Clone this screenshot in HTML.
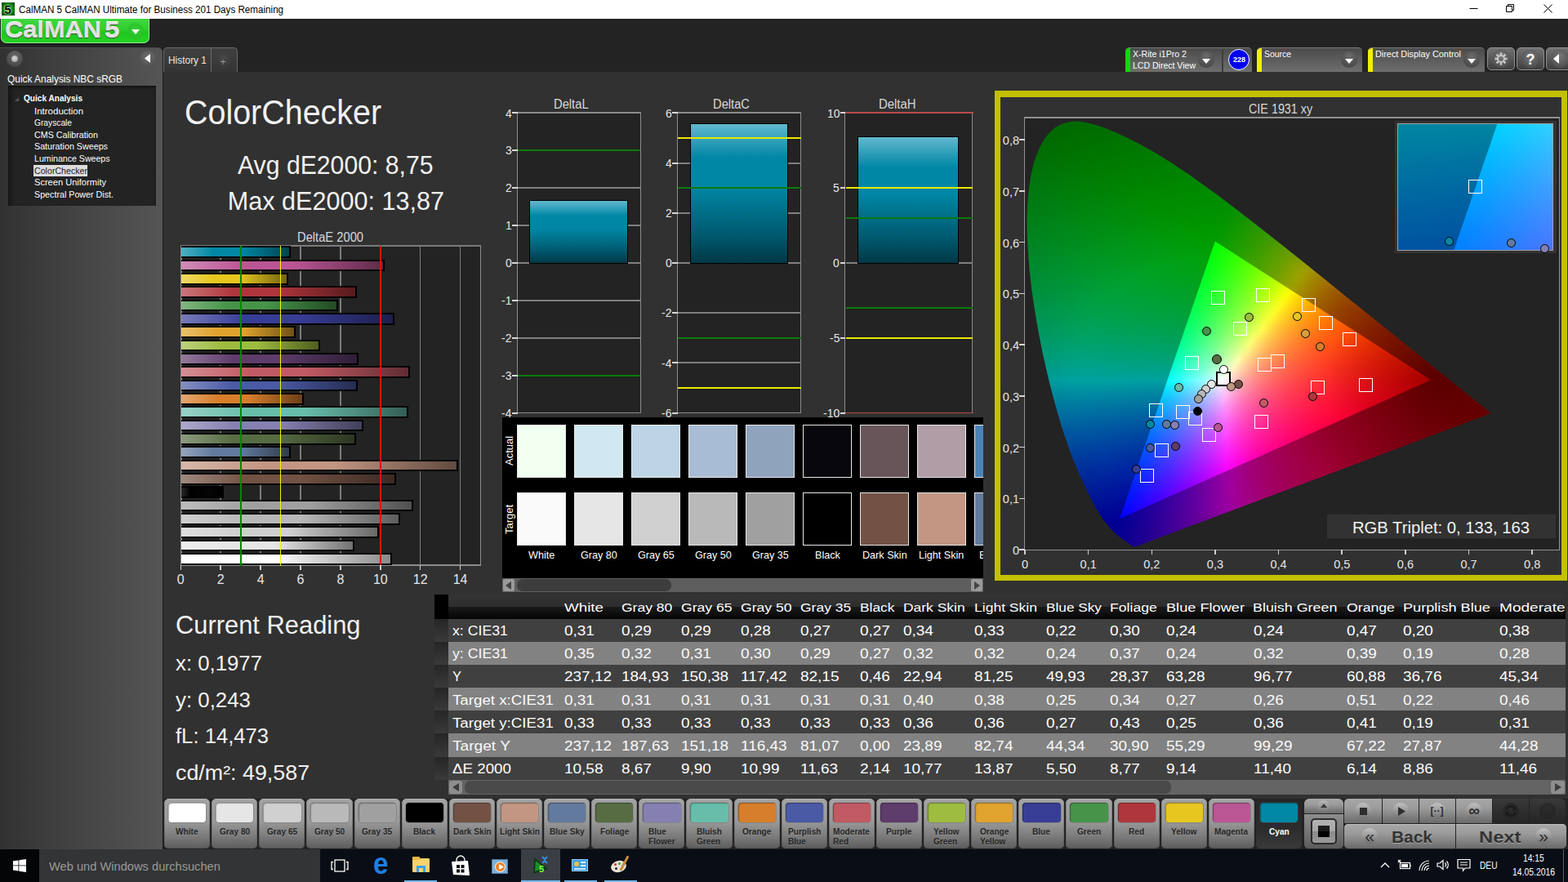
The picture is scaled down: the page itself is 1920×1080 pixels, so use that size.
<!DOCTYPE html>
<html lang="de"><head><meta charset="utf-8"><title>CalMAN 5 ColorChecker</title>
<style>
html,body{margin:0;padding:0}
body{width:1920px;height:1080px;overflow:hidden;position:relative;background:#232323;font-family:"Liberation Sans",sans-serif;color:#fff}
div,span.t,svg{position:absolute;box-sizing:border-box}
span.t{white-space:nowrap;transform-origin:0 50%;display:block}
.cg i{display:block;width:100%}
</style></head><body>

<div style="left:0px;top:0px;width:1920px;height:23px;background:#fff"></div>
<div style="left:2px;top:3px;width:16px;height:16px;background:radial-gradient(circle,#1fd01f 0%,#0a7a0a 60%,#033a03 100%)"></div>
<span class="t" style="left:5.3px;top:3.68px;font-size:15.5px;line-height:15.5px;color:#000;font-weight:bold;text-shadow:0 0 1px #fff,0 0 1px #fff,0 0 2px #dfd;">5</span>
<span class="t" style="left:23px;top:5.84px;font-size:12px;line-height:12px;color:#000;transform:scaleX(0.970);">CalMAN 5 CalMAN Ultimate for Business 201 Days Remaining</span>
<svg style="left:1780px;top:0" width="140" height="23" viewBox="0 0 140 23" fill="none" stroke="#000" stroke-width="1"><path d="M19.5 10.5h10"/><path d="M64.5 7.5h7v7h-7z M66.5 7.5v-2h7v7h-2"/><path d="M110.5 5.5l10 10 M120.5 5.5l-10 10"/></svg>
<div style="left:0px;top:23px;width:1920px;height:35px;background:#232323"></div>
<div style="left:1px;top:23px;width:182px;height:29.6px;background:linear-gradient(#40d840 0%,#2fce2f 45%,#1fc61f 58%,#24d424 100%);border-radius:0 0 7px 7px;border:1px solid #9be89b;border-top:none;box-shadow:0 1px 1px #0a0a0a"></div>
<span class="t" style="left:6.3px;top:23.74px;font-size:27px;line-height:27px;color:#e2e2e2;font-weight:bold;transform:scaleX(1.140);text-shadow:0 1px 1px #4a4a4a,0 -1px 0 #fff;">CalMAN</span>
<span class="t" style="left:128px;top:23.74px;font-size:27px;line-height:27px;color:#e2e2e2;font-weight:bold;transform:scaleX(1.232);text-shadow:0 1px 1px #4a4a4a,0 -1px 0 #fff;">5</span>
<div style="left:156px;top:27.5px;width:20px;height:20px;border-radius:50%;background:radial-gradient(circle at 50% 40%,#35d035,#22b822)"></div>
<svg style="left:161px;top:35.500px" width="10" height="6"><path d="M0 0h10l-5 6z" fill="#fff"/></svg>
<div style="left:0px;top:58px;width:199px;height:982px;background:linear-gradient(90deg,#313131 0%,#3e3e3e 30%,#484848 60%,#555 100%);border-radius:0 6px 0 0;border-top:1px solid #4a4a4a"></div>
<div style="left:199px;top:58px;width:1px;height:982px;background:#1c1c1c"></div>
<div style="left:8px;top:62px;width:20px;height:20px;border-radius:50%;background:radial-gradient(circle at 50% 35%,#6a6a6a,#3c3c3c)"></div>
<div style="left:14px;top:68px;width:8px;height:8px;border-radius:50%;background:radial-gradient(circle at 45% 40%,#ddd,#888)"></div>
<div style="left:171px;top:62px;width:20px;height:20px;border-radius:50%;background:radial-gradient(circle at 50% 35%,#6e6e6e,#484848)"></div>
<svg style="left:177px;top:66px" width="7" height="11"><path d="M7 0v11l-7-5.5z" fill="#fff"/></svg>
<span class="t" style="left:9px;top:90px;font-size:13px;line-height:13px;color:#fff;transform:scaleX(0.916);">Quick Analysis NBC sRGB</span>
<div style="left:10px;top:105px;width:181px;height:147px;background:linear-gradient(90deg,#171717 0,#232323 8px,#232323 100%);box-shadow:inset 0 2px 3px #111"></div>
<svg style="left:18px;top:119px" width="5" height="5"><path d="M5 0v5h-5z" fill="#555"/></svg>
<span class="t" style="left:29px;top:115.27px;font-size:11.5px;line-height:11.5px;color:#fff;font-weight:bold;transform:scaleX(0.878);">Quick Analysis</span>
<span class="t" style="left:42px;top:131.27px;font-size:11.5px;line-height:11.5px;color:#fff;">Introduction</span>
<span class="t" style="left:42px;top:145.27px;font-size:11.5px;line-height:11.5px;color:#fff;transform:scaleX(0.889);">Grayscale</span>
<span class="t" style="left:42px;top:160.27px;font-size:11.5px;line-height:11.5px;color:#fff;transform:scaleX(0.932);">CMS Calibration</span>
<span class="t" style="left:42px;top:174.27px;font-size:11.5px;line-height:11.5px;color:#fff;transform:scaleX(0.932);">Saturation Sweeps</span>
<span class="t" style="left:42px;top:189.27px;font-size:11.5px;line-height:11.5px;color:#fff;transform:scaleX(0.922);">Luminance Sweeps</span>
<div style="left:41px;top:201.5px;width:66px;height:14.3px;background:#dcdcdc"></div>
<span class="t" style="left:42px;top:204.27px;font-size:11.5px;line-height:11.5px;color:#222;transform:scaleX(0.925);">ColorChecker</span>
<span class="t" style="left:42px;top:218.27px;font-size:11.5px;line-height:11.5px;color:#fff;transform:scaleX(0.963);">Screen Uniformity</span>
<span class="t" style="left:42px;top:233.27px;font-size:11.5px;line-height:11.5px;color:#fff;transform:scaleX(0.931);">Spectral Power Dist.</span>
<div style="left:200px;top:58px;width:59px;height:30px;background:linear-gradient(#404040,#353535);border:1px solid #6a6a6a;border-bottom:none;border-radius:5px 0 0 0"></div>
<div style="left:258px;top:58px;width:33px;height:30px;background:linear-gradient(#404040,#353535);border:1px solid #6a6a6a;border-bottom:none;border-radius:0 5px 0 0"></div>
<span class="t" style="left:206px;top:68.22px;font-size:12.5px;line-height:12.5px;color:#e8e8e8;transform:scaleX(0.953);">History 1</span>
<div style="left:264px;top:63px;width:20px;height:20px;border-radius:50%;background:radial-gradient(circle at 50% 40%,#484848,#333)"></div>
<span class="t" style="left:269.5px;top:69.84px;font-size:12px;line-height:12px;color:#999;">+</span>
<div style="left:200px;top:88px;width:1720px;height:890px;background:#313131"></div>
<div style="left:1378px;top:58px;width:155px;height:30px;background:linear-gradient(#4b4b4b,#6e6e6e);border-radius:5px 5px 0 0;border-top:1px solid #777;overflow:hidden"><div style="left:0;top:-1px;width:6px;height:31px;background:#0fd80f"></div></div>
<span class="t" style="left:1387px;top:60.87px;font-size:11.5px;line-height:11.5px;color:#fff;transform:scaleX(0.922);">X-Rite i1Pro 2</span>
<span class="t" style="left:1387px;top:75.07px;font-size:11.5px;line-height:11.5px;color:#fff;transform:scaleX(0.915);">LCD Direct View</span>
<div style="left:1467px;top:63px;width:20px;height:20px;border-radius:50%;background:radial-gradient(circle at 50% 30%,#6c6c6c,#3e3e3e)"></div>
<svg style="left:1472px;top:72px" width="10" height="6"><path d="M0 0h10l-5 6z" fill="#fff"/></svg>
<div style="left:1496px;top:61px;width:2px;height:27px;background:#3e3e3e"></div>
<div style="left:1504px;top:60px;width:26px;height:26px;border-radius:50%;background:#0000f0;border:1px solid #fff"></div>
<span class="t" style="left:1509.8px;top:68.46px;font-size:9.5px;line-height:9.5px;color:#fff;font-weight:bold;transform:scaleX(0.946);">228</span>
<div style="left:1539px;top:58px;width:129px;height:30px;background:linear-gradient(#4b4b4b,#6e6e6e);border-radius:5px 5px 0 0;border-top:1px solid #777;overflow:hidden"><div style="left:0;top:-1px;width:6px;height:31px;background:#f0f000"></div></div>
<span class="t" style="left:1548px;top:60.87px;font-size:11.5px;line-height:11.5px;color:#fff;transform:scaleX(0.906);">Source</span>
<div style="left:1642px;top:63px;width:20px;height:20px;border-radius:50%;background:radial-gradient(circle at 50% 30%,#6c6c6c,#3e3e3e)"></div>
<svg style="left:1647px;top:72px" width="10" height="6"><path d="M0 0h10l-5 6z" fill="#fff"/></svg>
<div style="left:1675px;top:58px;width:143px;height:30px;background:linear-gradient(#4b4b4b,#6e6e6e);border-radius:5px 5px 0 0;border-top:1px solid #777;overflow:hidden"><div style="left:0;top:-1px;width:6px;height:31px;background:#f0f000"></div></div>
<span class="t" style="left:1684px;top:60.87px;font-size:11.5px;line-height:11.5px;color:#fff;transform:scaleX(0.944);">Direct Display Control</span>
<div style="left:1792px;top:63px;width:20px;height:20px;border-radius:50%;background:radial-gradient(circle at 50% 30%,#6c6c6c,#3e3e3e)"></div>
<svg style="left:1797px;top:72px" width="10" height="6"><path d="M0 0h10l-5 6z" fill="#fff"/></svg>
<div style="left:1821px;top:58px;width:34px;height:28px;background:linear-gradient(#727272,#3e3e3e);border:1px solid #909090;border-radius:5px"></div>
<div style="left:1827px;top:61px;width:22px;height:22px;border-radius:50%;background:radial-gradient(circle at 50% 35%,#777,#444)"></div>
<div style="left:1857px;top:58px;width:34px;height:28px;background:linear-gradient(#727272,#3e3e3e);border:1px solid #909090;border-radius:5px"></div>
<div style="left:1863px;top:61px;width:22px;height:22px;border-radius:50%;background:radial-gradient(circle at 50% 35%,#777,#444)"></div>
<div style="left:1893px;top:58px;width:34px;height:28px;background:linear-gradient(#727272,#3e3e3e);border:1px solid #909090;border-radius:5px"></div>
<div style="left:1899px;top:61px;width:22px;height:22px;border-radius:50%;background:radial-gradient(circle at 50% 35%,#777,#444)"></div>
<svg style="left:1829px;top:63px" width="18" height="18" viewBox="-9 -9 18 18"><g fill="none" stroke="#c8c8c8"><circle r="4" stroke-width="2"/><path d="M0 -5v-2.6" stroke-width="2.6" transform="rotate(0)"/><path d="M0 -5v-2.6" stroke-width="2.6" transform="rotate(45)"/><path d="M0 -5v-2.6" stroke-width="2.6" transform="rotate(90)"/><path d="M0 -5v-2.6" stroke-width="2.6" transform="rotate(135)"/><path d="M0 -5v-2.6" stroke-width="2.6" transform="rotate(180)"/><path d="M0 -5v-2.6" stroke-width="2.6" transform="rotate(225)"/><path d="M0 -5v-2.6" stroke-width="2.6" transform="rotate(270)"/><path d="M0 -5v-2.6" stroke-width="2.6" transform="rotate(315)"/></g></svg>
<span class="t" style="left:1868.5px;top:63.76px;font-size:18px;line-height:18px;color:#fff;font-weight:bold;">?</span>
<svg style="left:1902px;top:66px" width="7" height="12"><path d="M7 0v12l-7-6z" fill="#fff"/></svg>
<span class="t" style="left:226.3px;top:116.55px;font-size:42px;line-height:42px;color:#f2f2f2;transform:scaleX(0.939);">ColorChecker</span>
<span class="t" style="left:290.8px;top:186.6px;font-size:30.6px;line-height:30.6px;color:#f2f2f2;transform:scaleX(0.987);">Avg dE2000: 8,75</span>
<span class="t" style="left:278.8px;top:230.8px;font-size:30.6px;line-height:30.6px;color:#f2f2f2;">Max dE2000: 13,87</span>
<span class="t" style="left:364.2px;top:283.06px;font-size:16px;line-height:16px;color:#d8d8d8;transform:scaleX(0.920);">DeltaE 2000</span>
<div style="left:221px;top:300px;width:368px;height:393px;background:#232323;border:2px solid #8c8c8c;border-right-width:1px;border-top-color:#7a7a7a"></div>
<div style="left:269.4px;top:302px;width:1.6px;height:390px;background:#7c7c7c"></div>
<div style="left:318.3px;top:302px;width:1.6px;height:390px;background:#7c7c7c"></div>
<div style="left:367.2px;top:302px;width:1.6px;height:390px;background:#7c7c7c"></div>
<div style="left:416.1px;top:302px;width:1.6px;height:390px;background:#7c7c7c"></div>
<div style="left:465px;top:302px;width:1.6px;height:390px;background:#7c7c7c"></div>
<div style="left:513.9px;top:302px;width:1.6px;height:390px;background:#7c7c7c"></div>
<div style="left:562.8px;top:302px;width:1.6px;height:390px;background:#7c7c7c"></div>
<div style="left:222px;top:301px;width:133.59px;height:14.8px;background:linear-gradient(90deg,#52aec1 0%,#0088a4 30%,#0088a4 55%,#004452 100%);border:2px solid #000;border-left:none"></div>
<div style="left:222px;top:317.5px;width:248.5px;height:14.8px;background:linear-gradient(90deg,#d18cb7 0%,#bb5695 30%,#bb5695 55%,#5e2b4a 100%);border:2px solid #000;border-left:none"></div>
<div style="left:222px;top:334px;width:130.65px;height:14.8px;background:linear-gradient(90deg,#efd967 0%,#e7c71f 30%,#e7c71f 55%,#746410 100%);border:2px solid #000;border-left:none"></div>
<div style="left:222px;top:350px;width:215.25px;height:14.8px;background:linear-gradient(90deg,#c9767a 0%,#af363c 30%,#af363c 55%,#581b1e 100%);border:2px solid #000;border-left:none"></div>
<div style="left:222px;top:366.5px;width:192.27px;height:14.8px;background:linear-gradient(90deg,#81b683 0%,#469449 30%,#469449 55%,#234a24 100%);border:2px solid #000;border-left:none"></div>
<div style="left:222px;top:383px;width:261.21px;height:14.8px;background:linear-gradient(90deg,#787bb8 0%,#383d96 30%,#383d96 55%,#1c1e4b 100%);border:2px solid #000;border-left:none"></div>
<div style="left:222px;top:399px;width:140.43px;height:14.8px;background:linear-gradient(90deg,#eac071 0%,#e0a32e 30%,#e0a32e 55%,#705217 100%);border:2px solid #000;border-left:none"></div>
<div style="left:222px;top:415.5px;width:170.26px;height:14.8px;background:linear-gradient(90deg,#bcd17d 0%,#9dbc40 30%,#9dbc40 55%,#4e5e20 100%);border:2px solid #000;border-left:none"></div>
<div style="left:222px;top:432px;width:216.72px;height:14.8px;background:linear-gradient(90deg,#927a9b 0%,#5e3c6c 30%,#5e3c6c 55%,#2f1e36 100%);border:2px solid #000;border-left:none"></div>
<div style="left:222px;top:448px;width:279.8px;height:14.8px;background:linear-gradient(90deg,#d58f95 0%,#c15a63 30%,#c15a63 55%,#602d32 100%);border:2px solid #000;border-left:none"></div>
<div style="left:222px;top:464.5px;width:216.23px;height:14.8px;background:linear-gradient(90deg,#848fc2 0%,#4a5aa5 30%,#4a5aa5 55%,#252d52 100%);border:2px solid #000;border-left:none"></div>
<div style="left:222px;top:481px;width:149.72px;height:14.8px;background:linear-gradient(90deg,#e3a770 0%,#d67e2c 30%,#d67e2c 55%,#6b3f16 100%);border:2px solid #000;border-left:none"></div>
<div style="left:222px;top:497px;width:278.33px;height:14.8px;background:linear-gradient(90deg,#98d2c5 0%,#67bdaa 30%,#67bdaa 55%,#345e55 100%);border:2px solid #000;border-left:none"></div>
<div style="left:222px;top:513.5px;width:223.07px;height:14.8px;background:linear-gradient(90deg,#aca9ca 0%,#8580b1 30%,#8580b1 55%,#424058 100%);border:2px solid #000;border-left:none"></div>
<div style="left:222px;top:530px;width:214.03px;height:14.8px;background:linear-gradient(90deg,#8d9b7f 0%,#576c43 30%,#576c43 55%,#2c3622 100%);border:2px solid #000;border-left:none"></div>
<div style="left:222px;top:546px;width:134.07px;height:14.8px;background:linear-gradient(90deg,#94a5bc 0%,#627a9d 30%,#627a9d 55%,#313d4e 100%);border:2px solid #000;border-left:none"></div>
<div style="left:222px;top:562.5px;width:338.72px;height:14.8px;background:linear-gradient(90deg,#d6b8aa 0%,#c29682 30%,#c29682 55%,#614b41 100%);border:2px solid #000;border-left:none"></div>
<div style="left:222px;top:579px;width:262.93px;height:14.8px;background:linear-gradient(90deg,#a08980 0%,#735244 30%,#735244 55%,#3a2922 100%);border:2px solid #000;border-left:none"></div>
<div style="left:222px;top:595px;width:51.92px;height:14.8px;background:linear-gradient(90deg,#2a2a2a 0%,#000 22%,#050505 70%,#000 100%);border:2px solid #000;border-left:none"></div>
<div style="left:222px;top:611.5px;width:283.95px;height:14.8px;background:linear-gradient(90deg,#bebebe 0%,#a0a0a0 30%,#a0a0a0 55%,#505050 100%);border:2px solid #000;border-left:none"></div>
<div style="left:222px;top:628px;width:268.31px;height:14.8px;background:linear-gradient(90deg,#cfcfcf 0%,#b8b8b8 30%,#b8b8b8 55%,#5c5c5c 100%);border:2px solid #000;border-left:none"></div>
<div style="left:222px;top:644px;width:241.66px;height:14.8px;background:linear-gradient(90deg,#dfdfdf 0%,#d0d0d0 30%,#d0d0d0 55%,#686868 100%);border:2px solid #000;border-left:none"></div>
<div style="left:222px;top:660.5px;width:211.58px;height:14.8px;background:linear-gradient(90deg,#eeeeee 0%,#e6e6e6 30%,#e6e6e6 55%,#737373 100%);border:2px solid #000;border-left:none"></div>
<div style="left:222px;top:677px;width:258.28px;height:14.8px;background:linear-gradient(90deg,#fff 0%,#fff 45%,#8a8a8a 100%);border:2px solid #000;border-left:none"></div>
<div style="left:293.7px;top:301px;width:1.9px;height:392px;background:#008a00"></div>
<div style="left:342.6px;top:301px;width:1.9px;height:392px;background:#f4f400"></div>
<div style="left:464.7px;top:301px;width:1.9px;height:392px;background:#e01010"></div>
<div style="left:220.5px;top:692px;width:1.6px;height:6px;background:#cfcfcf"></div>
<span class="t" style="left:216.85px;top:701.76px;font-size:16px;line-height:16px;color:#e6e6e6;">0</span>
<div style="left:269.4px;top:692px;width:1.6px;height:6px;background:#cfcfcf"></div>
<span class="t" style="left:265.75px;top:701.76px;font-size:16px;line-height:16px;color:#e6e6e6;">2</span>
<div style="left:318.3px;top:692px;width:1.6px;height:6px;background:#cfcfcf"></div>
<span class="t" style="left:314.65px;top:701.76px;font-size:16px;line-height:16px;color:#e6e6e6;">4</span>
<div style="left:367.2px;top:692px;width:1.6px;height:6px;background:#cfcfcf"></div>
<span class="t" style="left:363.55px;top:701.76px;font-size:16px;line-height:16px;color:#e6e6e6;">6</span>
<div style="left:416.1px;top:692px;width:1.6px;height:6px;background:#cfcfcf"></div>
<span class="t" style="left:412.45px;top:701.76px;font-size:16px;line-height:16px;color:#e6e6e6;">8</span>
<div style="left:465px;top:692px;width:1.6px;height:6px;background:#cfcfcf"></div>
<span class="t" style="left:456.9px;top:701.76px;font-size:16px;line-height:16px;color:#e6e6e6;">10</span>
<div style="left:513.9px;top:692px;width:1.6px;height:6px;background:#cfcfcf"></div>
<span class="t" style="left:505.8px;top:701.76px;font-size:16px;line-height:16px;color:#e6e6e6;">12</span>
<div style="left:562.8px;top:692px;width:1.6px;height:6px;background:#cfcfcf"></div>
<span class="t" style="left:554.7px;top:701.76px;font-size:16px;line-height:16px;color:#e6e6e6;">14</span>
<span class="t" style="left:214.8px;top:750.1px;font-size:30.6px;line-height:30.6px;color:#f2f2f2;transform:scaleX(1.009);">Current Reading</span>
<span class="t" style="left:214.8px;top:799.49px;font-size:26px;line-height:26px;color:#f2f2f2;transform:scaleX(0.991);">x: 0,1977</span>
<span class="t" style="left:214.8px;top:843.99px;font-size:26px;line-height:26px;color:#f2f2f2;transform:scaleX(0.994);">y: 0,243</span>
<span class="t" style="left:214.8px;top:888.49px;font-size:26px;line-height:26px;color:#f2f2f2;transform:scaleX(0.986);">fL: 14,473</span>
<span class="t" style="left:214.8px;top:932.99px;font-size:26px;line-height:26px;color:#f2f2f2;transform:scaleX(1.032);">cd/m²: 49,587</span>
<span class="t" style="left:677.9px;top:119.99px;font-size:15.6px;line-height:15.6px;color:#d8d8d8;transform:scaleX(0.945);">DeltaL</span>
<div style="left:632.8px;top:137.2px;width:152px;height:369px;background:#232323;border:1.5px solid #8c8c8c;border-top-width:2px"></div>
<div style="left:627px;top:137px;width:6.5px;height:1.6px;background:#d8d8d8"></div>
<span class="t" style="left:618.94px;top:130.5px;font-size:15px;line-height:15px;color:#e6e6e6;transform:scaleX(0.930);">4</span>
<div style="left:634px;top:183px;width:150px;height:1.5px;background:#808080"></div>
<div style="left:627px;top:183px;width:6.5px;height:1.6px;background:#d8d8d8"></div>
<span class="t" style="left:618.94px;top:176.4px;font-size:15px;line-height:15px;color:#e6e6e6;transform:scaleX(0.930);">3</span>
<div style="left:634px;top:229px;width:150px;height:1.5px;background:#808080"></div>
<div style="left:627px;top:229px;width:6.5px;height:1.6px;background:#d8d8d8"></div>
<span class="t" style="left:618.94px;top:222.3px;font-size:15px;line-height:15px;color:#e6e6e6;transform:scaleX(0.930);">2</span>
<div style="left:634px;top:275px;width:150px;height:1.5px;background:#808080"></div>
<div style="left:627px;top:275px;width:6.5px;height:1.6px;background:#d8d8d8"></div>
<span class="t" style="left:618.94px;top:268.2px;font-size:15px;line-height:15px;color:#e6e6e6;transform:scaleX(0.930);">1</span>
<div style="left:634px;top:321px;width:150px;height:1.5px;background:#808080"></div>
<div style="left:627px;top:321px;width:6.5px;height:1.6px;background:#d8d8d8"></div>
<span class="t" style="left:618.94px;top:314.1px;font-size:15px;line-height:15px;color:#e6e6e6;transform:scaleX(0.930);">0</span>
<div style="left:634px;top:367px;width:150px;height:1.5px;background:#808080"></div>
<div style="left:627px;top:367px;width:6.5px;height:1.6px;background:#d8d8d8"></div>
<span class="t" style="left:614.3px;top:360px;font-size:15px;line-height:15px;color:#e6e6e6;transform:scaleX(0.930);">-1</span>
<div style="left:634px;top:413px;width:150px;height:1.5px;background:#808080"></div>
<div style="left:627px;top:413px;width:6.5px;height:1.6px;background:#d8d8d8"></div>
<span class="t" style="left:614.3px;top:405.9px;font-size:15px;line-height:15px;color:#e6e6e6;transform:scaleX(0.930);">-2</span>
<div style="left:634px;top:459px;width:150px;height:1.5px;background:#808080"></div>
<div style="left:627px;top:459px;width:6.5px;height:1.6px;background:#d8d8d8"></div>
<span class="t" style="left:614.3px;top:451.8px;font-size:15px;line-height:15px;color:#e6e6e6;transform:scaleX(0.930);">-3</span>
<div style="left:627px;top:505px;width:6.5px;height:1.6px;background:#d8d8d8"></div>
<span class="t" style="left:614.3px;top:497.7px;font-size:15px;line-height:15px;color:#e6e6e6;transform:scaleX(0.930);">-4</span>
<div style="left:634px;top:183px;width:150px;height:1.8px;background:#0b7a0b"></div>
<div style="left:634px;top:459px;width:150px;height:1.8px;background:#0b7a0b"></div>
<div style="left:648px;top:244.69px;width:120.5px;height:78.11px;background:linear-gradient(#62b8cf 0%,#0087a5 24%,#0087a5 45%,#00596e 80%,#003846 100%);border:1px solid #000"></div>
<span class="t" style="left:873px;top:119.99px;font-size:15.6px;line-height:15.6px;color:#d8d8d8;transform:scaleX(0.944);">DeltaC</span>
<div style="left:828.8px;top:137.2px;width:152.5px;height:369px;background:#232323;border:1.5px solid #8c8c8c;border-top-width:2px"></div>
<div style="left:823px;top:137px;width:6.5px;height:1.6px;background:#d8d8d8"></div>
<span class="t" style="left:814.94px;top:130.5px;font-size:15px;line-height:15px;color:#e6e6e6;transform:scaleX(0.930);">6</span>
<div style="left:830px;top:199px;width:150.5px;height:1.5px;background:#808080"></div>
<div style="left:823px;top:199px;width:6.5px;height:1.6px;background:#d8d8d8"></div>
<span class="t" style="left:814.94px;top:191.7px;font-size:15px;line-height:15px;color:#e6e6e6;transform:scaleX(0.930);">4</span>
<div style="left:830px;top:260px;width:150.5px;height:1.5px;background:#808080"></div>
<div style="left:823px;top:260px;width:6.5px;height:1.6px;background:#d8d8d8"></div>
<span class="t" style="left:814.94px;top:252.9px;font-size:15px;line-height:15px;color:#e6e6e6;transform:scaleX(0.930);">2</span>
<div style="left:830px;top:321px;width:150.5px;height:1.5px;background:#808080"></div>
<div style="left:823px;top:321px;width:6.5px;height:1.6px;background:#d8d8d8"></div>
<span class="t" style="left:814.94px;top:314.1px;font-size:15px;line-height:15px;color:#e6e6e6;transform:scaleX(0.930);">0</span>
<div style="left:830px;top:382px;width:150.5px;height:1.5px;background:#808080"></div>
<div style="left:823px;top:382px;width:6.5px;height:1.6px;background:#d8d8d8"></div>
<span class="t" style="left:810.3px;top:375.3px;font-size:15px;line-height:15px;color:#e6e6e6;transform:scaleX(0.930);">-2</span>
<div style="left:830px;top:443px;width:150.5px;height:1.5px;background:#808080"></div>
<div style="left:823px;top:443px;width:6.5px;height:1.6px;background:#d8d8d8"></div>
<span class="t" style="left:810.3px;top:436.5px;font-size:15px;line-height:15px;color:#e6e6e6;transform:scaleX(0.930);">-4</span>
<div style="left:823px;top:505px;width:6.5px;height:1.6px;background:#d8d8d8"></div>
<span class="t" style="left:810.3px;top:497.7px;font-size:15px;line-height:15px;color:#e6e6e6;transform:scaleX(0.930);">-6</span>
<div style="left:830px;top:229px;width:150.5px;height:1.8px;background:#0b7a0b"></div>
<div style="left:830px;top:413px;width:150.5px;height:1.8px;background:#0b7a0b"></div>
<div style="left:830px;top:168px;width:150.5px;height:1.8px;background:#e8e800"></div>
<div style="left:830px;top:474px;width:150.5px;height:1.8px;background:#e8e800"></div>
<div style="left:845px;top:150.75px;width:119.5px;height:172.05px;background:linear-gradient(#62b8cf 0%,#0087a5 24%,#0087a5 45%,#00596e 80%,#003846 100%);border:1px solid #000"></div>
<div style="left:845px;top:229px;width:119.5px;height:1.8px;background:#0b7a0b"></div>
<div style="left:845px;top:168px;width:119.5px;height:1.8px;background:#e8e800"></div>
<span class="t" style="left:1075.7px;top:119.99px;font-size:15.6px;line-height:15.6px;color:#d8d8d8;transform:scaleX(0.956);">DeltaH</span>
<div style="left:1034.3px;top:137.2px;width:157px;height:369px;background:#232323;border:1.5px solid #8c8c8c;border-top-width:2px"></div>
<div style="left:1034.5px;top:137.2px;width:157px;height:1.6px;background:#b84a4a"></div>
<div style="left:1034.5px;top:504.6px;width:157px;height:1.6px;background:#b84a4a"></div>
<div style="left:1028.5px;top:137px;width:6.5px;height:1.6px;background:#d8d8d8"></div>
<span class="t" style="left:1012.68px;top:130.5px;font-size:15px;line-height:15px;color:#e6e6e6;transform:scaleX(0.930);">10</span>
<div style="left:1035.5px;top:229px;width:155px;height:1.5px;background:#808080"></div>
<div style="left:1028.5px;top:229px;width:6.5px;height:1.6px;background:#d8d8d8"></div>
<span class="t" style="left:1020.44px;top:222.3px;font-size:15px;line-height:15px;color:#e6e6e6;transform:scaleX(0.930);">5</span>
<div style="left:1035.5px;top:321px;width:155px;height:1.5px;background:#808080"></div>
<div style="left:1028.5px;top:321px;width:6.5px;height:1.6px;background:#d8d8d8"></div>
<span class="t" style="left:1020.44px;top:314.1px;font-size:15px;line-height:15px;color:#e6e6e6;transform:scaleX(0.930);">0</span>
<div style="left:1035.5px;top:413px;width:155px;height:1.5px;background:#808080"></div>
<div style="left:1028.5px;top:413px;width:6.5px;height:1.6px;background:#d8d8d8"></div>
<span class="t" style="left:1015.8px;top:405.9px;font-size:15px;line-height:15px;color:#e6e6e6;transform:scaleX(0.930);">-5</span>
<div style="left:1028.5px;top:505px;width:6.5px;height:1.6px;background:#d8d8d8"></div>
<span class="t" style="left:1008.04px;top:497.7px;font-size:15px;line-height:15px;color:#e6e6e6;transform:scaleX(0.930);">-10</span>
<div style="left:1035.5px;top:266px;width:155px;height:1.8px;background:#0b7a0b"></div>
<div style="left:1035.5px;top:376px;width:155px;height:1.8px;background:#0b7a0b"></div>
<div style="left:1035.5px;top:229px;width:155px;height:1.8px;background:#e8e800"></div>
<div style="left:1035.5px;top:413px;width:155px;height:1.8px;background:#e8e800"></div>
<div style="left:1049.5px;top:167.03px;width:124px;height:155.77px;background:linear-gradient(#62b8cf 0%,#0087a5 24%,#0087a5 45%,#00596e 80%,#003846 100%);border:1px solid #000"></div>
<div style="left:1049.5px;top:266px;width:124px;height:1.8px;background:#0b7a0b"></div>
<div style="left:1049.5px;top:229px;width:124px;height:1.8px;background:#e8e800"></div>
<div style="left:615px;top:511px;width:589px;height:197.5px;background:#000"></div>
<div style="left:633px;top:519.5px;width:60px;height:65px;background:#f0fff0;border:1px solid #e8e8e8;"></div>
<div style="left:633px;top:602.5px;width:60px;height:65px;background:#fafafa;border:1px solid #e8e8e8;"></div>
<span class="t" style="left:646.88px;top:673px;font-size:13px;line-height:13px;color:#fff;transform:scaleX(0.970);">White</span>
<div style="left:703px;top:519.5px;width:60px;height:65px;background:#d0e8f1;border:1px solid #e8e8e8;"></div>
<div style="left:703px;top:602.5px;width:60px;height:65px;background:#e6e6e6;border:1px solid #e8e8e8;"></div>
<span class="t" style="left:710.57px;top:673px;font-size:13px;line-height:13px;color:#fff;transform:scaleX(0.970);">Gray 80</span>
<div style="left:773px;top:519.5px;width:60px;height:65px;background:#bcd4e5;border:1px solid #e8e8e8;"></div>
<div style="left:773px;top:602.5px;width:60px;height:65px;background:#d0d0d0;border:1px solid #e8e8e8;"></div>
<span class="t" style="left:780.57px;top:673px;font-size:13px;line-height:13px;color:#fff;transform:scaleX(0.970);">Gray 65</span>
<div style="left:843px;top:519.5px;width:60px;height:65px;background:#a8bdd5;border:1px solid #e8e8e8;"></div>
<div style="left:843px;top:602.5px;width:60px;height:65px;background:#b9b9b9;border:1px solid #e8e8e8;"></div>
<span class="t" style="left:850.57px;top:673px;font-size:13px;line-height:13px;color:#fff;transform:scaleX(0.970);">Gray 50</span>
<div style="left:913px;top:519.5px;width:60px;height:65px;background:#8fa3bd;border:1px solid #e8e8e8;"></div>
<div style="left:913px;top:602.5px;width:60px;height:65px;background:#a0a0a0;border:1px solid #e8e8e8;"></div>
<span class="t" style="left:920.57px;top:673px;font-size:13px;line-height:13px;color:#fff;transform:scaleX(0.970);">Gray 35</span>
<div style="left:983px;top:519.5px;width:60px;height:65px;background:#08080c;border:1px solid #e8e8e8;"></div>
<div style="left:983px;top:602.5px;width:60px;height:65px;background:#000000;border:1px solid #e8e8e8;"></div>
<span class="t" style="left:997.58px;top:673px;font-size:13px;line-height:13px;color:#fff;transform:scaleX(0.970);">Black</span>
<div style="left:1053px;top:519.5px;width:60px;height:65px;background:#68555a;border:1px solid #e8e8e8;"></div>
<div style="left:1053px;top:602.5px;width:60px;height:65px;background:#735244;border:1px solid #e8e8e8;"></div>
<span class="t" style="left:1055.67px;top:673px;font-size:13px;line-height:13px;color:#fff;transform:scaleX(0.970);">Dark Skin</span>
<div style="left:1123px;top:519.5px;width:60px;height:65px;background:#b09da5;border:1px solid #e8e8e8;"></div>
<div style="left:1123px;top:602.5px;width:60px;height:65px;background:#c29682;border:1px solid #e8e8e8;"></div>
<span class="t" style="left:1125.31px;top:673px;font-size:13px;line-height:13px;color:#fff;transform:scaleX(0.970);">Light Skin</span>
<div style="left:1193px;top:519.5px;width:11px;height:65px;background:#4a83b8;border:1px solid #e8e8e8;border-right:none;"></div>
<div style="left:1193px;top:602.5px;width:11px;height:65px;background:#627a9d;border:1px solid #e8e8e8;border-right:none;"></div>
<div style="left:1193px;top:670px;width:11px;height:20px;overflow:hidden"><span class="t" style="left:6px;top:3px;font-size:13px;line-height:13px">Blue Sky</span></div>
<span class="t" style="left:617px;top:570px;font-size:13px;line-height:13px;transform-origin:0 0;transform:rotate(-90deg)">Actual</span>
<span class="t" style="left:617px;top:654px;font-size:13px;line-height:13px;transform-origin:0 0;transform:rotate(-90deg)">Target</span>
<div style="left:615px;top:708px;width:589px;height:17px;background:#5e5e5e"></div>
<div style="left:616px;top:709px;width:14px;height:15px;background:#9a9a9a;border-radius:2px"></div>
<div style="left:1189px;top:709px;width:14px;height:15px;background:#9a9a9a;border-radius:2px"></div>
<svg style="left:619px;top:711.5px" width="7" height="10"><path d="M7 0v10l-7-5z" fill="#444"/></svg>
<svg style="left:1193px;top:711.5px" width="7" height="10"><path d="M0 0v10l7-5z" fill="#444"/></svg>
<div style="left:633px;top:709px;width:189px;height:15px;background:#3d3d3d;border-radius:7px"></div>
<div style="left:1218px;top:111px;width:701px;height:600.3px;border:7px solid #c4c000;border-top-width:8px;background:#313131"></div>
<span class="t" style="left:1529.4px;top:126.09px;font-size:15.6px;line-height:15.6px;color:#d8d8d8;transform:scaleX(0.920);">CIE 1931 xy</span>
<div style="left:1254px;top:143px;width:655.5px;height:530.5px;background:#232323;border:1.6px solid #909090;border-top-width:2px"></div>
<div style="left:1254.2px;top:673px;width:1.6px;height:6px;background:#cfcfcf"></div>
<span class="t" style="left:1250.97px;top:683.73px;font-size:14.5px;line-height:14.5px;color:#e6e6e6;">0</span>
<div style="left:1248px;top:672.3px;width:7px;height:1.6px;background:#d8d8d8"></div>
<span class="t" style="left:1239.94px;top:667.23px;font-size:14.5px;line-height:14.5px;color:#e6e6e6;">0</span>
<div style="left:1331.85px;top:673px;width:1.6px;height:6px;background:#cfcfcf"></div>
<span class="t" style="left:1322.57px;top:683.73px;font-size:14.5px;line-height:14.5px;color:#e6e6e6;">0,1</span>
<div style="left:1248px;top:609.55px;width:7px;height:1.6px;background:#d8d8d8"></div>
<span class="t" style="left:1227.84px;top:604.48px;font-size:14.5px;line-height:14.5px;color:#e6e6e6;">0,1</span>
<div style="left:1409.5px;top:673px;width:1.6px;height:6px;background:#cfcfcf"></div>
<span class="t" style="left:1400.22px;top:683.73px;font-size:14.5px;line-height:14.5px;color:#e6e6e6;">0,2</span>
<div style="left:1248px;top:546.8px;width:7px;height:1.6px;background:#d8d8d8"></div>
<span class="t" style="left:1227.84px;top:541.73px;font-size:14.5px;line-height:14.5px;color:#e6e6e6;">0,2</span>
<div style="left:1487.15px;top:673px;width:1.6px;height:6px;background:#cfcfcf"></div>
<span class="t" style="left:1477.87px;top:683.73px;font-size:14.5px;line-height:14.5px;color:#e6e6e6;">0,3</span>
<div style="left:1248px;top:484.05px;width:7px;height:1.6px;background:#d8d8d8"></div>
<span class="t" style="left:1227.84px;top:478.98px;font-size:14.5px;line-height:14.5px;color:#e6e6e6;">0,3</span>
<div style="left:1564.8px;top:673px;width:1.6px;height:6px;background:#cfcfcf"></div>
<span class="t" style="left:1555.52px;top:683.73px;font-size:14.5px;line-height:14.5px;color:#e6e6e6;">0,4</span>
<div style="left:1248px;top:421.3px;width:7px;height:1.6px;background:#d8d8d8"></div>
<span class="t" style="left:1227.84px;top:416.23px;font-size:14.5px;line-height:14.5px;color:#e6e6e6;">0,4</span>
<div style="left:1642.45px;top:673px;width:1.6px;height:6px;background:#cfcfcf"></div>
<span class="t" style="left:1633.17px;top:683.73px;font-size:14.5px;line-height:14.5px;color:#e6e6e6;">0,5</span>
<div style="left:1248px;top:358.55px;width:7px;height:1.6px;background:#d8d8d8"></div>
<span class="t" style="left:1227.84px;top:353.48px;font-size:14.5px;line-height:14.5px;color:#e6e6e6;">0,5</span>
<div style="left:1720.1px;top:673px;width:1.6px;height:6px;background:#cfcfcf"></div>
<span class="t" style="left:1710.82px;top:683.73px;font-size:14.5px;line-height:14.5px;color:#e6e6e6;">0,6</span>
<div style="left:1248px;top:295.8px;width:7px;height:1.6px;background:#d8d8d8"></div>
<span class="t" style="left:1227.84px;top:290.73px;font-size:14.5px;line-height:14.5px;color:#e6e6e6;">0,6</span>
<div style="left:1797.75px;top:673px;width:1.6px;height:6px;background:#cfcfcf"></div>
<span class="t" style="left:1788.47px;top:683.73px;font-size:14.5px;line-height:14.5px;color:#e6e6e6;">0,7</span>
<div style="left:1248px;top:233.05px;width:7px;height:1.6px;background:#d8d8d8"></div>
<span class="t" style="left:1227.84px;top:227.98px;font-size:14.5px;line-height:14.5px;color:#e6e6e6;">0,7</span>
<div style="left:1875.4px;top:673px;width:1.6px;height:6px;background:#cfcfcf"></div>
<span class="t" style="left:1866.12px;top:683.73px;font-size:14.5px;line-height:14.5px;color:#e6e6e6;">0,8</span>
<div style="left:1248px;top:170.3px;width:7px;height:1.6px;background:#d8d8d8"></div>
<span class="t" style="left:1227.84px;top:165.23px;font-size:14.5px;line-height:14.5px;color:#e6e6e6;">0,8</span>
<div class="cg" style="left:1257px;top:148px;width:569px;height:522px;clip-path:polygon(133px 521.6px,132.7px 521.6px,132.3px 521.7px,131.8px 521.7px,130.9px 521.5px,130px 521.1px,128.9px 520.4px,127.4px 519.3px,125.4px 517.8px,122.9px 516px,119.4px 513.6px,115px 510.4px,109.6px 506px,103px 499.6px,94.1px 488.4px,91.5px 484.6px,88.8px 480.4px,85.9px 475.6px,82.8px 470.1px,79.5px 464px,76.1px 457.3px,72.4px 449.7px,68.6px 441.3px,64.4px 432px,60px 421.8px,55.5px 410.7px,51px 398.6px,46.5px 385.3px,41.9px 370.9px,37.4px 355.5px,32.9px 339.3px,28.4px 322px,24px 303.5px,19.7px 284.5px,15.9px 265.3px,12.3px 245.8px,9.1px 225.8px,6.2px 205.8px,4px 186.3px,2.3px 167.3px,1.1px 148.5px,0.5px 130.4px,0.6px 113.2px,1.5px 96.7px,3.1px 81px,5.4px 66.4px,8.4px 53.2px,12.3px 41.4px,16.9px 30.9px,22.1px 21.8px,27.8px 14.4px,34.1px 8.7px,40.9px 4.8px,48.1px 2.2px,55.4px 0.7px,62.9px 0.4px,70.6px 1.4px,78.5px 3.2px,86.4px 5.4px,94.3px 8px,102.2px 11.2px,110.1px 14.6px,117.9px 18.2px,125.5px 21.8px,132.9px 25.6px,140.3px 29.5px,147.6px 33.5px,154.8px 37.6px,161.9px 41.8px,169px 46.2px,176.1px 50.6px,183.2px 55.2px,190.2px 59.9px,197.3px 64.6px,204.3px 69.5px,211.2px 74.4px,218.2px 79.4px,225.1px 84.5px,232.1px 89.6px,239px 94.8px,246px 100px,252.9px 105.3px,259.9px 110.6px,287.7px 132.2px,315.4px 154.1px,342.9px 176.1px,369.9px 197.8px,396.1px 218.9px,421.2px 239.1px,444.8px 258.1px,466.4px 275.5px,485.1px 290.6px,501.6px 303.8px,515.3px 314.8px,526.4px 323.8px,535.2px 330.9px,542.3px 336.6px,548px 341.2px,552.7px 345px,556.6px 348.2px,559.7px 350.6px,562.1px 352.5px,563.9px 353.9px,565.2px 355px,566.7px 356.3px,567.8px 357.1px,568.8px 358px)"><i style="height:3px;background:linear-gradient(90deg,#006800 49px,#006900 62px,#006a00 74px)"></i><i style="height:3px;background:linear-gradient(90deg,#006800 39px,#006900 51px,#006a00 62px,#006b00 74px,#006c00 86px)"></i><i style="height:3px;background:linear-gradient(90deg,#006800 34px,#006900 46px,#006a00 58px,#006c00 71px,#006d00 83px,#006e00 95px)"></i><i style="height:3px;background:linear-gradient(90deg,#006800 30px,#006a00 42px,#006b00 54px,#006c00 66px,#006d00 79px,#006e00 91px,#006f00 103px)"></i><i style="height:3px;background:linear-gradient(90deg,#006900 26px,#006a00 40px,#006b00 54px,#006d00 68px,#006e00 82px,#006f00 96px,#007000 110px)"></i><i style="height:3px;background:linear-gradient(90deg,#006900 24px,#006a00 37px,#006c00 51px,#006d00 64px,#006f00 77px,#007000 90px,#007100 104px,#007200 117px)"></i><i style="height:3px;background:linear-gradient(90deg,#006a01 21px,#006b00 34px,#006c00 46px,#006e00 59px,#006f00 72px,#007000 85px,#007100 98px,#007200 110px,#007300 123px)"></i><i style="height:3px;background:linear-gradient(90deg,#006a01 19px,#006b00 33px,#006d00 46px,#006e00 60px,#007000 74px,#007100 88px,#007200 102px,#007300 115px,#007400 129px)"></i><i style="height:3px;background:linear-gradient(90deg,#006b02 18px,#006c01 31px,#006d00 44px,#006f00 57px,#007000 70px,#007100 83px,#007300 96px,#007400 109px,#007500 122px,#007500 135px)"></i><i style="height:3px;background:linear-gradient(90deg,#006b03 16px,#006d01 30px,#006e00 44px,#007000 58px,#007100 72px,#007200 85px,#007400 99px,#007500 113px,#007600 127px,#007700 141px)"></i><i style="height:3px;background:linear-gradient(90deg,#006c03 14px,#006d02 27px,#006f01 41px,#007000 54px,#007100 67px,#007300 80px,#007400 94px,#007500 107px,#007600 120px,#007700 134px,#007800 147px)"></i><i style="height:3px;background:linear-gradient(90deg,#006c04 13px,#006e03 27px,#006f01 41px,#007100 55px,#007200 69px,#007400 82px,#007500 96px,#007600 110px,#007700 124px,#007800 138px,#007900 152px)"></i><i style="height:3px;background:linear-gradient(90deg,#006d04 11px,#006e03 24px,#007002 38px,#007101 51px,#007300 64px,#007400 77px,#007500 91px,#007600 104px,#007700 117px,#007800 130px,#007900 144px,#007a00 157px)"></i><i style="height:3px;background:linear-gradient(90deg,#006d05 10px,#006f04 24px,#007003 38px,#007201 51px,#007400 65px,#007500 79px,#007600 93px,#007700 107px,#007900 121px,#007a00 134px,#007a00 148px,#007b00 162px)"></i><i style="height:3px;background:linear-gradient(90deg,#006e06 9px,#006f05 22px,#007103 35px,#007202 48px,#007401 62px,#007500 75px,#007700 88px,#007800 101px,#007900 114px,#007a00 128px,#007b00 141px,#007c00 154px,#007c00 167px)"></i><i style="height:3px;background:linear-gradient(90deg,#006f06 8px,#007005 22px,#007204 35px,#007303 49px,#007501 63px,#007600 76px,#007800 90px,#007900 104px,#007a00 117px,#007b00 131px,#007c00 145px,#007d00 158px,#007d00 172px)"></i><i style="height:3px;background:linear-gradient(90deg,#006f07 7px,#007006 20px,#007205 33px,#007403 46px,#007502 59px,#007701 72px,#007800 85px,#007900 99px,#007a00 112px,#007b00 125px,#007c00 138px,#007d00 151px,#007e00 164px,#007e00 177px)"></i><i style="height:3px;background:linear-gradient(90deg,#007008 6px,#007107 20px,#007305 33px,#007404 47px,#007603 60px,#007701 74px,#007900 87px,#007a00 101px,#007b00 114px,#007c00 128px,#007d00 141px,#007e00 155px,#007f00 168px,#007f00 182px)"></i><i style="height:3px;background:linear-gradient(90deg,#007008 5px,#007207 19px,#007306 33px,#007505 47px,#007703 61px,#007802 75px,#007a00 89px,#007b00 102px,#007c00 116px,#007d00 130px,#007e00 144px,#007f00 158px,#008000 172px,#008000 186px)"></i><i style="height:3px;background:linear-gradient(90deg,#007109 5px,#007208 18px,#007407 32px,#007605 45px,#007704 58px,#007902 71px,#007a01 85px,#007b00 98px,#007d00 111px,#007e00 125px,#007f00 138px,#008000 151px,#008000 164px,#008100 178px,#008100 191px)"></i><i style="height:3px;background:linear-gradient(90deg,#00710a 4px,#007309 18px,#007507 31px,#007606 45px,#007804 59px,#007a03 72px,#007b01 86px,#007c00 100px,#007e00 113px,#007f00 127px,#008000 140px,#008100 154px,#008100 168px,#008200 181px,#008200 195px)"></i><i style="height:3px;background:linear-gradient(90deg,#00720a 3px,#007309 16px,#007508 29px,#007707 42px,#007805 56px,#007a04 69px,#007b02 82px,#007d01 95px,#007e00 108px,#007f00 121px,#008000 134px,#008100 147px,#008200 161px,#008200 174px,#008300 187px,#008300 200px)"></i><i style="height:3px;background:linear-gradient(90deg,#00730b 3px,#00740a 16px,#007609 30px,#007807 43px,#007906 57px,#007b04 70px,#007c03 83px,#007e01 97px,#007f00 110px,#008000 124px,#008100 137px,#008200 150px,#008300 164px,#008300 177px,#008400 191px,#008400 204px)"></i><i style="height:3px;background:linear-gradient(90deg,#00730c 2px,#00750b 16px,#007709 29px,#007808 43px,#007a07 57px,#007c05 71px,#007d03 84px,#007e02 98px,#008000 112px,#008100 126px,#008200 139px,#008300 153px,#008400 167px,#008400 181px,#008500 194px,#008500 208px)"></i><i style="height:3px;background:linear-gradient(90deg,#00740c 2px,#00760b 16px,#00770a 30px,#007909 44px,#007b07 58px,#007d06 72px,#007e04 86px,#007f02 100px,#008100 114px,#008200 128px,#008300 142px,#008400 156px,#008500 170px,#008500 184px,#008600 198px,#008600 212px)"></i><i style="height:3px;background:linear-gradient(90deg,#00740d 1px,#00760c 14px,#00780b 28px,#007a0a 42px,#007b08 55px,#007d07 68px,#007e05 82px,#008003 96px,#008102 109px,#008200 122px,#008300 136px,#008400 150px,#008500 163px,#008600 176px,#008600 190px,#008700 204px,#008700 217px)"></i><i style="height:3px;background:linear-gradient(90deg,#00750e 1px,#00770d 15px,#00790b 28px,#007a0a 42px,#007c09 56px,#007e07 70px,#007f06 84px,#008104 97px,#008202 111px,#008300 125px,#008400 138px,#008500 152px,#008600 166px,#008700 180px,#008700 194px,#008800 207px,#008800 221px)"></i><i style="height:3px;background:linear-gradient(90deg,#00760e 0px,#00770e 13px,#00790c 26px,#007b0b 40px,#007c0a 53px,#007e08 66px,#008007 79px,#008105 93px,#008203 106px,#008401 119px,#008500 132px,#008600 146px,#008700 159px,#008700 172px,#008800 185px,#008800 199px,#008900 212px,#008900 225px)"></i><i style="height:3px;background:linear-gradient(90deg,#00760f 0px,#00780e 13px,#007a0d 27px,#007c0c 40px,#007d0a 54px,#007f09 67px,#008007 81px,#008206 94px,#008304 108px,#008502 121px,#008600 135px,#008700 148px,#008800 162px,#008800 175px,#008900 189px,#008900 202px,#008a00 216px,#008a00 229px)"></i><i style="height:3px;background:linear-gradient(90deg,#007710 0px,#00790f 14px,#007a0e 27px,#007c0c 41px,#007e0b 55px,#008009 69px,#008108 82px,#008306 96px,#008404 110px,#008502 123px,#008700 137px,#008800 151px,#008900 164px,#008900 178px,#008a00 192px,#008a00 206px,#008b00 219px,#008b00 233px)"></i><i style="height:3px;background:linear-gradient(90deg,#007811 0px,#007910 14px,#007b0e 28px,#007d0d 42px,#007f0c 56px,#00810a 70px,#008208 84px,#008407 98px,#008505 112px,#008603 125px,#008801 139px,#008900 153px,#008a00 167px,#008a00 181px,#008b00 195px,#008b00 209px,#008c00 223px,#008c00 237px)"></i><i style="height:3px;background:linear-gradient(90deg,#007812 0px,#007a11 13px,#007c0f 27px,#007e0e 40px,#007f0d 54px,#00810b 67px,#00830a 80px,#008408 94px,#008606 107px,#008704 120px,#008802 134px,#008900 147px,#008a00 161px,#008b00 174px,#008b00 187px,#008c00 201px,#008c00 214px,#008c00 228px,#008d00 241px)"></i><i style="height:3px;background:linear-gradient(90deg,#007912 0px,#007b11 14px,#007c10 27px,#007e0f 41px,#00800d 54px,#00820c 68px,#00840a 82px,#008508 95px,#008607 109px,#008805 122px,#008903 136px,#008a01 150px,#008b00 163px,#008c00 177px,#008c00 191px,#008d00 204px,#008d00 218px,#008d00 231px,#008d00 245px)"></i><i style="height:3px;background:linear-gradient(90deg,#007913 0px,#007b12 14px,#007d11 28px,#007f10 42px,#00810e 55px,#00830d 69px,#00840b 83px,#008609 97px,#008707 111px,#008905 124px,#008a03 138px,#008b01 152px,#008c00 166px,#008d00 180px,#008d00 194px,#008e00 208px,#008e00 221px,#008e00 235px,#008e00 249px)"></i><i style="height:3px;background:linear-gradient(90deg,#007a14 0px,#007c13 13px,#007e12 27px,#008011 40px,#00810f 53px,#00830e 67px,#00850c 80px,#00860a 93px,#008809 107px,#008907 120px,#008a05 133px,#008b03 146px,#008c00 160px,#008d00 173px,#008e00 186px,#008e00 200px,#008f00 213px,#008f00 226px,#008f00 240px,#038f00 253px)"></i><i style="height:3px;background:linear-gradient(90deg,#007b15 0px,#007c14 14px,#007e13 27px,#008011 41px,#008210 54px,#00840e 68px,#00860d 81px,#00870b 95px,#008909 108px,#008a07 122px,#008b05 135px,#008c03 149px,#008d01 162px,#008e00 176px,#008f00 189px,#008f00 203px,#009000 216px,#009000 230px,#009000 243px,#079000 257px)"></i><i style="height:3px;background:linear-gradient(90deg,#007b16 0px,#007d15 14px,#007f13 27px,#008112 41px,#008311 55px,#00850f 69px,#00870e 82px,#00880c 96px,#008a0a 110px,#008b08 124px,#008c06 137px,#008d04 151px,#008e01 165px,#008f00 179px,#009000 192px,#009000 206px,#009100 220px,#009100 234px,#029100 247px,#0b9100 261px)"></i><i style="height:3px;background:linear-gradient(90deg,#007c17 0px,#007e15 14px,#008014 28px,#008213 42px,#008411 56px,#008610 70px,#00870e 84px,#00890c 98px,#008b0b 112px,#008c08 126px,#008d06 139px,#008e04 153px,#008f02 167px,#009000 181px,#009100 195px,#009100 209px,#009200 223px,#009200 237px,#069200 251px,#0f9100 265px)"></i><i style="height:3px;background:linear-gradient(90deg,#007c17 0px,#007e16 13px,#008015 27px,#008214 40px,#008413 54px,#008611 67px,#008810 81px,#00890e 94px,#008b0c 108px,#008c0a 121px,#008e08 134px,#008f06 148px,#009004 161px,#009101 175px,#009100 188px,#009200 202px,#009200 215px,#009200 229px,#009300 242px,#0b9200 256px,#139200 269px)"></i><i style="height:3px;background:linear-gradient(90deg,#007d18 0px,#007f17 14px,#008116 27px,#008315 41px,#008513 55px,#008712 68px,#008910 82px,#008a0f 96px,#008c0d 109px,#008d0b 123px,#008f09 136px,#009006 150px,#009104 164px,#009202 177px,#009200 191px,#009300 205px,#009300 218px,#009300 232px,#049300 246px,#0f9300 259px,#189300 273px)"></i><i style="height:3px;background:linear-gradient(90deg,#007e19 0px,#008018 14px,#008217 28px,#008416 41px,#008614 55px,#008813 69px,#008911 83px,#008b0f 97px,#008d0d 110px,#008e0b 124px,#008f09 138px,#009107 152px,#009205 166px,#009202 179px,#009300 193px,#009400 207px,#009400 221px,#009400 235px,#079400 248px,#129400 262px,#1c9400 276px)"></i><i style="height:3px;background:linear-gradient(90deg,#007e1a 0px,#008019 14px,#008218 28px,#008517 42px,#008715 56px,#008914 70px,#008a12 84px,#008c10 98px,#008e0e 112px,#008f0c 126px,#00900a 140px,#009208 154px,#009305 168px,#009303 182px,#009400 196px,#009500 210px,#009500 224px,#009500 238px,#0b9500 252px,#179500 266px,#219400 280px)"></i><i style="height:3px;background:linear-gradient(90deg,#007f1b 0px,#00811a 14px,#008319 27px,#008518 41px,#008716 54px,#008915 68px,#008b13 81px,#008c12 95px,#008e10 108px,#008f0e 122px,#00910c 135px,#00920a 149px,#009307 162px,#009405 176px,#009502 189px,#009500 203px,#009600 216px,#009600 230px,#059600 243px,#109600 257px,#1c9500 270px,#269500 284px)"></i><i style="height:3px;background:linear-gradient(90deg,#007f1c 0px,#00821b 14px,#00841a 27px,#008619 41px,#008817 55px,#008a16 69px,#008c14 82px,#008d13 96px,#008f11 110px,#00900f 123px,#00920c 137px,#00930a 151px,#009408 165px,#009505 178px,#009603 192px,#009600 206px,#009700 219px,#009700 233px,#089700 247px,#149700 261px,#219600 274px,#2b9600 288px)"></i><i style="height:3px;background:linear-gradient(90deg,#00801d 0px,#00821c 14px,#00841b 28px,#00861a 42px,#008918 56px,#008b17 70px,#008c15 83px,#008e13 97px,#009011 111px,#00910f 125px,#00930d 139px,#00940b 153px,#009508 167px,#009606 181px,#009703 195px,#009700 209px,#009700 222px,#019800 236px,#0c9800 250px,#199700 264px,#269700 278px,#309600 292px)"></i><i style="height:3px;background:linear-gradient(90deg,#00811e 0px,#00831d 13px,#00851c 27px,#00871b 40px,#00891a 54px,#008b18 67px,#008d17 81px,#008e15 94px,#009013 108px,#009211 121px,#00930f 135px,#00940d 148px,#00950a 161px,#009608 175px,#009705 188px,#009803 202px,#009800 215px,#009800 229px,#069800 242px,#129800 256px,#1f9800 269px,#2b9800 283px,#369700 296px)"></i><i style="height:3px;background:linear-gradient(90deg,#00811f 0px,#00831e 14px,#00851d 27px,#00881c 41px,#008a1b 54px,#008c19 68px,#008e18 82px,#008f16 95px,#009114 109px,#009212 122px,#009410 136px,#00950e 150px,#00960b 163px,#009709 177px,#009806 190px,#009903 204px,#009900 217px,#009900 231px,#0a9900 245px,#169900 258px,#239900 272px,#309800 285px,#3b9800 299px)"></i><i style="height:3px;background:linear-gradient(90deg,#008220 0px,#00841f 14px,#00861e 28px,#00881d 41px,#008a1c 55px,#008c1a 69px,#008e19 83px,#009017 96px,#009215 110px,#009313 124px,#009511 138px,#00960e 152px,#00970c 165px,#009809 179px,#009907 193px,#009a04 207px,#009a01 220px,#019a00 234px,#0e9a00 248px,#1a9a00 262px,#289a00 275px,#369900 289px,#419800 303px)"></i><i style="height:3px;background:linear-gradient(90deg,#008221 0px,#008520 14px,#00871f 28px,#00891e 42px,#008b1d 56px,#008d1b 70px,#008f1a 84px,#009118 98px,#009316 112px,#009414 126px,#009612 140px,#00970f 154px,#00980d 167px,#00990a 181px,#009a07 195px,#009b04 209px,#009b01 223px,#059b00 237px,#129b00 251px,#1f9b00 265px,#2d9a00 279px,#3b9a00 293px,#489900 307px)"></i><i style="height:3px;background:linear-gradient(90deg,#008322 0px,#008522 14px,#008720 27px,#00891f 41px,#008c1e 54px,#008e1d 68px,#00901b 81px,#009119 95px,#009318 108px,#009516 122px,#009614 135px,#009711 149px,#00990f 162px,#009a0c 176px,#009a0a 189px,#009b07 203px,#009c04 216px,#009c01 230px,#0c9c00 243px,#199c00 257px,#269b00 270px,#349b00 284px,#429a00 297px,#4e9900 311px)"></i><i style="height:3px;background:linear-gradient(90deg,#008323 0px,#008623 14px,#008822 27px,#008a20 41px,#008c1f 55px,#008e1e 68px,#00901c 82px,#00921a 96px,#009419 110px,#009617 123px,#009714 137px,#009812 151px,#009a10 164px,#009b0d 178px,#009b0a 192px,#009c07 205px,#009c04 219px,#039d01 233px,#109d00 247px,#1d9d00 260px,#2b9c00 274px,#3a9c00 288px,#499b00 301px,#559a00 315px)"></i><i style="height:3px;background:linear-gradient(90deg,#008425 0px,#008624 14px,#008923 28px,#008b22 41px,#008d20 55px,#008f1f 69px,#00911d 83px,#00931c 97px,#00951a 111px,#009618 124px,#009816 138px,#009913 152px,#009b11 166px,#009c0e 180px,#009c0b 194px,#009d08 207px,#009d05 221px,#069e02 235px,#139e00 249px,#219d00 263px,#309d00 277px,#3f9c00 290px,#4e9b00 304px,#5c9a00 318px)"></i><i style="height:3px;background:linear-gradient(90deg,#008526 0px,#008725 14px,#008924 28px,#008c23 42px,#008e21 56px,#009020 70px,#00921e 84px,#00941d 98px,#00961b 112px,#009719 126px,#009917 140px,#009a14 154px,#009b12 168px,#009c0f 182px,#009d0c 196px,#009e09 210px,#009e06 224px,#0a9e02 238px,#189e00 252px,#269e00 266px,#359e00 280px,#459d00 294px,#559c00 308px,#639b00 322px)"></i><i style="height:3px;background:linear-gradient(90deg,#008527 0px,#008726 14px,#008a25 27px,#008c24 41px,#008e23 54px,#009022 68px,#009220 82px,#00941e 95px,#00961d 109px,#00981b 122px,#009919 136px,#009b16 149px,#009c14 163px,#009d11 177px,#009e0e 190px,#009e0c 204px,#009f08 217px,#049f05 231px,#129f02 244px,#209f00 258px,#2e9f00 272px,#3d9e00 285px,#4d9d00 299px,#5d9c00 312px,#6a9b00 326px)"></i><i style="height:3px;background:linear-gradient(90deg,#008628 0px,#008827 14px,#008a26 28px,#008d25 41px,#008f24 55px,#009123 69px,#009321 82px,#009520 96px,#00971e 110px,#00991c 124px,#009a1a 138px,#009c17 151px,#009d15 165px,#009e12 179px,#009f0f 192px,#009f0c 206px,#00a009 220px,#08a006 234px,#16a002 248px,#25a000 261px,#349f00 275px,#439f00 289px,#549e00 302px,#659d00 316px,#729c00 330px)"></i><i style="height:3px;background:linear-gradient(90deg,#008629 0px,#008829 14px,#008b28 28px,#008d27 42px,#009025 56px,#009224 69px,#009423 83px,#009621 97px,#00981f 111px,#00991d 125px,#009b1b 139px,#009c19 153px,#009e16 166px,#009f13 180px,#00a010 194px,#00a00d 208px,#00a10a 222px,#0ba107 236px,#1aa103 250px,#29a100 264px,#39a000 278px,#499f00 291px,#5a9f00 305px,#6b9d00 319px,#7a9c00 333px)"></i><i style="height:3px;background:linear-gradient(90deg,#00872b 0px,#00892a 13px,#008b29 27px,#008e28 40px,#009027 54px,#009226 67px,#009424 81px,#009623 94px,#009821 108px,#009a1f 121px,#009b1d 135px,#009d1b 148px,#009e18 162px,#009f16 175px,#00a013 189px,#00a110 202px,#00a10d 216px,#06a10a 229px,#14a106 243px,#22a102 256px,#31a100 270px,#41a100 283px,#52a000 297px,#639f00 310px,#749e00 324px,#839d00 337px)"></i><i style="height:3px;background:linear-gradient(90deg,#00882c 0px,#00892b 14px,#008c2a 27px,#008e29 41px,#009128 55px,#009327 68px,#009526 82px,#009724 95px,#009922 109px,#009b20 123px,#009c1e 136px,#009e1c 150px,#009f19 164px,#00a017 177px,#00a114 191px,#00a111 205px,#00a10e 218px,#0aa10a 232px,#18a107 246px,#27a103 259px,#37a100 273px,#47a100 286px,#59a100 300px,#6a9f00 314px,#7d9e00 327px,#8c9d00 341px)"></i><i style="height:3px;background:linear-gradient(90deg,#00882d 1px,#008a2d 15px,#008d2c 29px,#008f2b 42px,#00912a 56px,#009428 70px,#009627 84px,#009825 97px,#009a23 111px,#009c21 125px,#009d1f 139px,#009f1d 152px,#00a01b 166px,#00a118 180px,#00a115 194px,#00a112 207px,#00a10e 221px,#0ea10b 235px,#1da107 249px,#2ca103 262px,#3da100 276px,#4ea100 290px,#60a100 304px,#73a000 317px,#869f00 331px,#959d00 345px)"></i><i style="height:3px;background:linear-gradient(90deg,#00892e 1px,#008b2e 15px,#008d2d 29px,#00902c 43px,#00922b 57px,#00942a 70px,#009728 84px,#009927 98px,#009b25 112px,#009c23 126px,#009e21 140px,#00a01e 154px,#00a11c 168px,#00a119 181px,#00a116 195px,#00a113 209px,#03a10f 223px,#11a10c 237px,#21a108 251px,#31a104 265px,#42a100 279px,#53a100 292px,#66a100 306px,#7aa000 320px,#8e9f00 334px,#9e9c00 348px)"></i><i style="height:3px;background:linear-gradient(90deg,#008930 1px,#008b2f 14px,#008e2e 28px,#00902e 42px,#00922d 55px,#00952b 68px,#00972a 82px,#009928 96px,#009b27 109px,#009d25 122px,#009e23 136px,#00a021 150px,#00a11e 163px,#00a11b 176px,#00a118 190px,#00a115 204px,#00a112 217px,#0ca10f 230px,#1ba10b 244px,#2aa108 258px,#3aa104 271px,#4ba100 284px,#5da100 298px,#70a100 312px,#84a100 325px,#989f00 338px,#9e9300 352px)"></i><i style="height:3px;background:linear-gradient(90deg,#008a31 1px,#008c31 15px,#008e30 28px,#00912f 42px,#00932e 56px,#00952d 69px,#00982b 83px,#009a2a 97px,#009c28 110px,#009e26 124px,#009f24 138px,#00a122 151px,#00a11f 165px,#00a11c 178px,#00a119 192px,#00a116 206px,#01a113 219px,#10a110 233px,#1fa10c 247px,#2fa108 260px,#40a104 274px,#52a100 288px,#65a100 301px,#78a100 315px,#8da100 329px,#a09d00 342px,#9e8b00 356px)"></i><i style="height:3px;background:linear-gradient(90deg,#008a33 2px,#008c32 16px,#008f31 30px,#009130 43px,#00942f 57px,#00962e 71px,#00982d 85px,#009b2b 98px,#009d2a 112px,#009f28 126px,#00a026 140px,#00a123 153px,#00a120 167px,#00a11d 181px,#00a11a 195px,#00a117 209px,#05a114 222px,#14a110 236px,#24a10d 250px,#35a109 264px,#46a105 277px,#59a101 291px,#6ca100 305px,#81a100 319px,#97a100 332px,#a09300 346px,#9e8300 360px)"></i><i style="height:3px;background:linear-gradient(90deg,#008b34 2px,#008d34 16px,#009033 30px,#009232 44px,#009531 58px,#009730 71px,#00992e 85px,#009b2d 99px,#009d2b 113px,#009f29 127px,#00a127 141px,#00a124 155px,#00a122 169px,#00a11f 182px,#00a11c 196px,#00a118 210px,#09a115 224px,#18a112 238px,#28a10e 252px,#39a10a 266px,#4ca106 280px,#5fa101 294px,#73a100 307px,#88a100 321px,#9fa100 335px,#a08c00 349px,#9f7c00 363px)"></i><i style="height:3px;background:linear-gradient(90deg,#008b35 2px,#008d35 16px,#009034 29px,#009234 43px,#009533 56px,#009732 70px,#009930 83px,#009c2f 97px,#009e2d 110px,#00a02c 124px,#00a129 137px,#00a127 151px,#00a124 164px,#00a121 178px,#00a11e 191px,#00a11b 205px,#03a118 218px,#12a115 232px,#22a111 245px,#33a10d 259px,#44a10a 272px,#56a105 286px,#6aa101 299px,#7ea100 313px,#94a100 326px,#a19700 340px,#a08300 353px,#9f7500 367px)"></i><i style="height:3px;background:linear-gradient(90deg,#008c37 3px,#008e37 17px,#009136 30px,#009335 44px,#009634 58px,#009833 71px,#009a32 85px,#009c30 98px,#009f2f 112px,#00a12d 126px,#00a12b 139px,#00a128 153px,#00a125 167px,#00a122 180px,#00a11f 194px,#00a11c 207px,#08a119 221px,#17a116 235px,#27a112 248px,#38a10e 262px,#4ba10a 276px,#5ea106 289px,#72a101 303px,#87a100 316px,#9ea100 330px,#a18e00 344px,#a07c00 357px,#9f6f00 371px)"></i><i style="height:3px;background:linear-gradient(90deg,#008c38 3px,#008f38 17px,#009137 31px,#009437 44px,#009636 58px,#009935 72px,#009b34 86px,#009d32 99px,#009f30 113px,#00a12e 127px,#00a12c 141px,#00a129 155px,#00a127 168px,#00a124 182px,#00a121 196px,#00a11e 210px,#0ca11a 223px,#1ca117 237px,#2ca113 251px,#3ea10f 265px,#51a10b 279px,#65a107 292px,#7aa102 306px,#90a100 320px,#a19900 334px,#a18500 347px,#a07500 361px,#9e6800 375px)"></i><i style="height:3px;background:linear-gradient(90deg,#008d3a 3px,#008f3a 17px,#009239 31px,#009438 45px,#009738 59px,#009936 72px,#009c35 86px,#009e34 100px,#00a032 114px,#00a130 128px,#00a12d 142px,#00a12b 156px,#00a128 170px,#00a125 184px,#00a122 197px,#00a11f 211px,#0fa11b 225px,#1fa118 239px,#31a114 253px,#43a110 267px,#57a10c 281px,#6ba108 295px,#81a103 309px,#98a100 322px,#a19200 336px,#a17f00 350px,#a06f00 364px,#9c6100 378px)"></i><i style="height:3px;background:linear-gradient(90deg,#008d3c 4px,#00903b 18px,#00923b 32px,#00953a 46px,#009839 60px,#009a38 74px,#009d37 88px,#009f36 102px,#00a134 116px,#00a131 130px,#00a12f 144px,#00a12c 158px,#00a129 172px,#00a126 186px,#00a123 200px,#03a120 214px,#14a11d 228px,#25a119 242px,#37a115 256px,#4aa111 270px,#5ea10d 284px,#73a108 298px,#8aa103 312px,#a19f00 326px,#a18900 340px,#a17700 354px,#9f6700 368px,#9b5b00 382px)"></i><i style="height:3px;background:linear-gradient(90deg,#008e3d 4px,#00903d 18px,#00933c 31px,#00953c 45px,#00983b 59px,#009a3a 72px,#009d39 86px,#009f38 100px,#00a136 113px,#00a134 127px,#00a131 140px,#00a12f 154px,#00a12c 168px,#00a129 181px,#00a126 195px,#00a123 209px,#0ea120 222px,#1fa11c 236px,#30a119 250px,#42a115 263px,#56a111 277px,#6ba10c 290px,#81a108 304px,#98a103 318px,#a19200 331px,#a17f00 345px,#a06f00 359px,#9d6000 372px,#995500 386px)"></i><i style="height:3px;background:linear-gradient(90deg,#008e3f 5px,#00913f 19px,#00933e 32px,#00963e 46px,#00993d 60px,#009b3c 74px,#009e3b 87px,#00a03a 101px,#00a138 115px,#00a135 128px,#00a133 142px,#00a130 156px,#00a12d 170px,#00a12b 183px,#00a128 197px,#02a124 211px,#12a121 224px,#23a11e 238px,#35a11a 252px,#48a116 266px,#5ca112 279px,#72a10e 293px,#88a109 307px,#a1a104 320px,#a18a00 334px,#a17800 348px,#9e6800 362px,#9b5a00 375px,#974f00 389px)"></i><i style="height:3px;background:linear-gradient(90deg,#008f41 5px,#009140 19px,#009440 33px,#00973f 47px,#00993f 60px,#009c3e 74px,#009e3d 88px,#00a13b 102px,#00a139 116px,#00a137 130px,#00a134 144px,#00a132 157px,#00a12f 171px,#00a12c 185px,#00a129 199px,#06a126 213px,#16a123 227px,#28a11f 241px,#3ba11b 254px,#4ea117 268px,#63a113 282px,#7aa10e 296px,#92a10a 310px,#a19704 324px,#a18200 338px,#a07100 351px,#9d6100 365px,#9a5400 379px,#964a00 393px)"></i><i style="height:3px;background:linear-gradient(90deg,#008f42 5px,#009242 19px,#009442 33px,#009741 47px,#009a41 61px,#009c40 75px,#009f3f 89px,#00a13d 103px,#00a13b 117px,#00a138 131px,#00a136 145px,#00a133 159px,#00a131 173px,#00a12e 187px,#00a12b 201px,#0aa127 215px,#1ba124 229px,#2da120 243px,#40a11c 257px,#55a118 271px,#6ba114 285px,#82a10f 299px,#9ba10a 313px,#a18e05 327px,#a17a00 341px,#9e6900 355px,#9b5b00 369px,#984e00 383px,#944500 397px)"></i><i style="height:3px;background:linear-gradient(90deg,#009044 6px,#009244 20px,#009544 33px,#009843 47px,#009a43 60px,#009d42 74px,#009f41 88px,#00a13f 101px,#00a13d 115px,#00a13b 129px,#00a138 142px,#00a136 156px,#00a133 169px,#00a131 183px,#00a12e 197px,#05a12b 210px,#16a127 224px,#28a124 238px,#3aa120 251px,#4ea11c 265px,#63a118 278px,#7aa114 292px,#92a10f 306px,#a1970a 319px,#a18204 333px,#a07000 347px,#9c6000 360px,#995400 374px,#964900 387px,#924100 401px)"></i><i style="height:3px;background:linear-gradient(90deg,#009046 6px,#009346 20px,#009545 33px,#009845 47px,#009b45 61px,#009d44 75px,#00a043 88px,#00a141 102px,#00a13f 116px,#00a13d 130px,#00a13a 143px,#00a138 157px,#00a135 171px,#00a132 184px,#00a12f 198px,#09a12c 212px,#1aa129 226px,#2ca125 239px,#3fa122 253px,#54a11e 267px,#6aa11a 280px,#81a115 294px,#9aa110 308px,#a18f0a 322px,#a17b05 335px,#9e6a00 349px,#9b5b00 363px,#984f00 377px,#954400 390px,#903c00 404px)"></i><i style="height:3px;background:linear-gradient(90deg,#009148 7px,#009348 21px,#009647 35px,#009947 48px,#009c47 62px,#009e46 76px,#00a145 90px,#00a143 104px,#00a141 118px,#00a13e 131px,#00a13c 145px,#00a139 159px,#00a137 173px,#00a134 187px,#00a131 201px,#0da12e 214px,#1fa12a 228px,#32a127 242px,#46a123 256px,#5ba11f 270px,#72a11b 284px,#8ba116 297px,#a19d11 311px,#a1860a 325px,#a07305 339px,#9d6200 353px,#995500 367px,#964900 380px,#933f00 394px,#8e3800 408px)"></i><i style="height:3px;background:linear-gradient(90deg,#00914a 7px,#00944a 21px,#009649 35px,#009949 49px,#009c49 63px,#009f48 77px,#00a147 91px,#00a145 105px,#00a143 119px,#00a140 133px,#00a13e 147px,#00a13b 161px,#00a139 175px,#00a136 189px,#00a133 203px,#11a12f 216px,#24a12c 230px,#37a129 244px,#4ca125 258px,#63a121 272px,#7aa11c 286px,#94a118 300px,#a19311 314px,#a17e0a 328px,#9f6c05 342px,#9b5c01 356px,#984f00 370px,#944400 384px,#913b00 398px,#8d3400 412px)"></i><i style="height:3px;background:linear-gradient(90deg,#00924b 8px,#00944c 22px,#00974b 35px,#009a4b 49px,#009c4b 62px,#009f4a 76px,#00a149 89px,#00a147 103px,#00a145 117px,#00a143 130px,#00a140 144px,#00a13e 157px,#00a13b 171px,#00a139 184px,#00a136 198px,#0ca133 212px,#1ea130 225px,#31a12c 239px,#45a129 252px,#5ba125 266px,#72a121 279px,#8aa11c 293px,#a19d17 306px,#a18610 320px,#a0730a 334px,#9d6205 347px,#995501 361px,#964900 374px,#933f00 388px,#8f3700 401px,#8b3000 415px)"></i><i style="height:3px;background:linear-gradient(90deg,#00924d 8px,#00954e 22px,#00974d 35px,#009a4d 49px,#009d4d 63px,#00a04c 76px,#00a14b 90px,#00a149 104px,#00a147 118px,#00a145 131px,#00a142 145px,#00a140 159px,#00a13d 172px,#00a13b 186px,#00a138 200px,#10a135 214px,#23a132 227px,#37a12e 241px,#4ca12a 255px,#62a127 268px,#7aa122 282px,#93a11e 296px,#a19417 309px,#a17e10 323px,#9f6c0a 337px,#9b5c05 350px,#984f01 364px,#944400 378px,#913b00 392px,#8d3300 405px,#892d00 419px)"></i><i style="height:3px;background:linear-gradient(90deg,#00934f 9px,#009550 23px,#009850 37px,#009b4f 50px,#009e4f 64px,#00a04f 78px,#00a14d 92px,#00a14b 106px,#00a149 119px,#00a147 133px,#00a144 147px,#00a142 161px,#00a13f 175px,#00a13d 188px,#03a13a 202px,#15a137 216px,#29a133 230px,#3da130 244px,#53a12c 257px,#6aa128 271px,#83a124 285px,#9ea11f 299px,#a18a17 313px,#a17610 326px,#9d640a 340px,#995505 354px,#964901 368px,#933f00 382px,#8f3700 395px,#8b2f00 409px,#872a00 423px)"></i><i style="height:3px;background:linear-gradient(90deg,#009351 9px,#009552 23px,#009852 37px,#009b52 51px,#009e51 65px,#00a151 79px,#00a14f 93px,#00a14d 107px,#00a14b 120px,#00a149 134px,#00a146 148px,#00a144 162px,#00a141 176px,#00a13f 190px,#07a13c 204px,#1aa139 218px,#2ea135 232px,#43a132 246px,#5aa12e 260px,#72a12a 274px,#8ca126 288px,#a19920 302px,#a18217 316px,#9f6f10 329px,#9c5e0a 343px,#985005 357px,#944401 371px,#913b00 385px,#8e3300 399px,#892c00 413px,#852600 427px)"></i><i style="height:3px;background:linear-gradient(90deg,#009454 10px,#009654 24px,#009954 38px,#009c54 52px,#009f54 66px,#00a153 80px,#00a151 94px,#00a14f 108px,#00a14d 122px,#00a14b 136px,#00a149 150px,#00a146 164px,#00a143 178px,#00a141 192px,#0ba13e 206px,#1ea13b 220px,#33a137 234px,#49a134 248px,#61a130 262px,#7aa12c 276px,#95a128 290px,#a1911f 304px,#a17b17 318px,#9e6810 332px,#9a580a 346px,#974b05 360px,#934002 374px,#903700 388px,#8c3000 402px,#882900 416px,#832400 430px)"></i><i style="height:3px;background:linear-gradient(90deg,#009456 10px,#009656 24px,#009956 37px,#009c56 51px,#009f56 65px,#00a156 78px,#00a154 92px,#00a152 106px,#00a150 119px,#00a14e 133px,#00a14c 147px,#00a149 160px,#00a147 174px,#00a144 188px,#07a141 201px,#19a13e 215px,#2da13b 229px,#43a138 243px,#5aa134 256px,#72a131 270px,#8ca12c 284px,#a19926 297px,#a1811c 311px,#a06e15 325px,#9c5d0e 338px,#984f09 352px,#954405 366px,#913a02 379px,#8e3200 393px,#8a2c00 407px,#852500 420px,#812100 434px)"></i><i style="height:3px;background:linear-gradient(90deg,#009458 11px,#009758 25px,#009a59 39px,#009d59 52px,#00a059 66px,#00a158 80px,#00a156 94px,#00a154 107px,#00a152 121px,#00a150 135px,#00a14e 149px,#00a14b 163px,#00a149 176px,#00a146 190px,#0ba144 204px,#1fa141 218px,#34a13d 231px,#4aa13a 245px,#62a136 259px,#7ba133 273px,#97a12e 286px,#a18f25 300px,#a1791c 314px,#9e6714 328px,#9a570e 342px,#974a09 355px,#933f05 369px,#8f3602 383px,#8c2f00 397px,#892800 410px,#832200 424px,#7f1e00 438px)"></i><i style="height:3px;background:linear-gradient(90deg,#00955a 11px,#00975b 25px,#009a5b 39px,#009d5b 53px,#00a05b 67px,#00a15a 81px,#00a158 94px,#00a156 108px,#00a154 122px,#00a152 136px,#00a150 150px,#00a14e 164px,#00a14b 178px,#00a149 192px,#0fa146 206px,#24a143 220px,#39a140 233px,#50a13c 247px,#69a139 261px,#84a135 275px,#a1a031 289px,#a18625 303px,#a1721c 317px,#9d6014 331px,#99510e 345px,#954509 359px,#913b05 372px,#8e3202 386px,#8a2b00 400px,#872500 414px,#811f00 428px,#7d1c00 442px)"></i><i style="height:3px;background:linear-gradient(90deg,#00955c 12px,#00985d 26px,#009b5d 40px,#009e5e 54px,#00a15e 68px,#00a15c 82px,#00a15b 96px,#00a159 110px,#00a157 124px,#00a155 138px,#00a153 152px,#00a150 166px,#00a14e 180px,#00a14b 194px,#14a148 208px,#29a145 222px,#3fa142 235px,#57a13f 249px,#71a13b 263px,#8da137 277px,#a19730 291px,#a17f25 305px,#a06b1c 319px,#9c5a14 333px,#984c0e 347px,#944009 361px,#903705 375px,#8c2f02 389px,#892800 403px,#852300 417px,#801d00 431px,#7b1900 445px)"></i><i style="height:3px;background:linear-gradient(90deg,#00965f 12px,#00985f 26px,#009b60 39px,#009e60 53px,#00a161 67px,#00a15f 80px,#00a15d 94px,#00a15c 108px,#00a15a 121px,#00a158 135px,#00a156 149px,#00a154 162px,#00a151 176px,#00a14f 190px,#0fa14c 203px,#24a149 217px,#39a146 230px,#51a143 244px,#6aa140 258px,#85a13c 271px,#a19f38 285px,#a1852b 299px,#a17121 312px,#9d5f19 326px,#995012 340px,#95440d 353px,#923a09 367px,#8e3205 381px,#8a2b02 394px,#872500 408px,#831f00 422px,#7d1a00 435px,#791700 449px)"></i><i style="height:3px;background:linear-gradient(90deg,#009661 13px,#009862 27px,#009b62 40px,#009e63 54px,#00a163 68px,#00a161 82px,#00a160 96px,#00a15e 109px,#00a15c 123px,#00a15a 137px,#00a158 150px,#00a156 164px,#00a154 178px,#01a151 192px,#14a14f 206px,#2aa14c 219px,#40a149 233px,#59a146 247px,#73a142 260px,#8fa13f 274px,#a19436 288px,#a17d2a 302px,#a06921 316px,#9c5818 329px,#984b12 343px,#943f0d 357px,#903608 370px,#8c2e05 384px,#892702 398px,#852200 412px,#811d00 426px,#7b1800 439px,#771500 453px)"></i><i style="height:3px;background:linear-gradient(90deg,#009664 13px,#009964 27px,#009c65 41px,#009f66 55px,#00a165 68px,#00a164 82px,#00a162 96px,#00a161 110px,#00a15f 124px,#00a15d 138px,#00a15b 151px,#00a159 165px,#00a157 179px,#04a154 193px,#18a152 207px,#2ea14f 221px,#46a14c 234px,#5fa149 248px,#7aa145 262px,#98a142 276px,#a18c36 290px,#a1762a 304px,#9f6320 318px,#9b5318 331px,#974612 345px,#933b0d 359px,#8f3209 373px,#8b2b05 387px,#872502 401px,#841f00 414px,#7f1a00 428px,#7a1600 442px,#761300 456px)"></i><i style="height:3px;background:linear-gradient(90deg,#009766 14px,#009967 28px,#009c68 42px,#009f68 56px,#00a168 70px,#00a166 84px,#00a165 98px,#00a163 112px,#00a162 126px,#00a160 139px,#00a15e 153px,#00a15c 167px,#00a159 181px,#09a157 195px,#1ea155 209px,#35a152 223px,#4da14f 237px,#68a14c 251px,#84a148 265px,#a19e43 279px,#a18335 293px,#a16e29 307px,#9e5c20 321px,#994d18 335px,#954112 348px,#91370d 362px,#8d2f09 376px,#8a2805 390px,#862202 404px,#821d00 418px,#7d1800 432px,#781400 446px,#741100 460px)"></i><i style="height:3px;background:linear-gradient(90deg,#009769 15px,#009a6a 29px,#009d6b 42px,#00a06b 56px,#00a16b 69px,#00a169 83px,#00a168 97px,#00a166 110px,#00a165 124px,#00a163 137px,#00a161 151px,#00a15f 165px,#00a15d 178px,#05a15b 192px,#1aa159 205px,#30a156 219px,#48a153 233px,#62a150 246px,#7ea14d 260px,#9ca14a 274px,#a1893c 287px,#a1732f 301px,#9f6125 314px,#9b511d 328px,#974416 342px,#933a10 355px,#8f310c 369px,#8b2a08 382px,#872405 396px,#841e02 410px,#801a00 423px,#7a1500 437px,#751200 450px,#720f00 464px)"></i><i style="height:3px;background:linear-gradient(90deg,#00976b 15px,#009a6c 29px,#009d6d 42px,#00a06e 56px,#00a16d 70px,#00a16c 84px,#00a16b 97px,#00a169 111px,#00a168 125px,#00a166 139px,#00a164 152px,#00a162 166px,#00a160 180px,#09a15e 193px,#1fa15c 207px,#36a159 221px,#4fa157 235px,#6aa154 248px,#87a150 262px,#a19b4a 276px,#a1803a 290px,#a16c2e 303px,#9e5a24 317px,#9a4c1c 331px,#964015 344px,#923610 358px,#8e2e0c 372px,#8a2708 386px,#862105 399px,#821c02 413px,#7e1700 427px,#781300 441px,#731000 454px,#700e00 468px)"></i><i style="height:3px;background:linear-gradient(90deg,#00986e 16px,#009a6f 30px,#009d70 44px,#00a071 57px,#00a170 71px,#00a16f 85px,#00a16e 99px,#00a16c 113px,#00a16b 126px,#00a169 140px,#00a167 154px,#00a165 168px,#00a163 181px,#0ea161 195px,#24a15f 209px,#3ca15d 223px,#56a15a 237px,#72a157 250px,#91a154 264px,#a19149 278px,#a1783a 292px,#a1662e 306px,#9d5524 319px,#99471c 333px,#953b15 347px,#913210 361px,#8d2a0c 374px,#892408 388px,#851e05 402px,#811a03 416px,#7c1500 430px,#771200 443px,#710e00 457px,#6e0c00 471px)"></i><i style="height:3px;background:linear-gradient(90deg,#009871 16px,#009a72 30px,#009e73 44px,#00a174 58px,#00a173 72px,#00a172 86px,#00a171 99px,#00a16f 113px,#00a16e 127px,#00a16c 141px,#00a16a 155px,#00a169 169px,#00a167 183px,#12a165 197px,#29a163 211px,#42a160 225px,#5da15e 239px,#7ba15b 252px,#9ba158 266px,#a18847 280px,#a17139 294px,#a05f2d 308px,#9c4f23 322px,#98421b 336px,#933715 350px,#8f2e10 364px,#8b270c 378px,#872108 392px,#831c05 405px,#7f1703 419px,#7a1301 433px,#741000 447px,#6f0d00 461px,#6c0b00 475px)"></i><i style="height:3px;background:linear-gradient(90deg,#009874 17px,#009b75 31px,#009e76 45px,#00a177 59px,#00a176 73px,#00a175 87px,#00a174 101px,#00a172 115px,#00a171 129px,#00a16f 143px,#00a16e 157px,#00a16c 171px,#01a16a 185px,#18a168 199px,#30a166 213px,#4aa164 227px,#66a161 241px,#85a15e 255px,#a19b58 269px,#a17f45 283px,#a16938 297px,#9f582c 311px,#9b4923 325px,#963d1b 339px,#923315 353px,#8e2b10 367px,#8a240c 381px,#861e08 395px,#821905 409px,#7e1503 423px,#781101 437px,#720e00 451px,#6d0b00 465px,#6a0900 479px)"></i><i style="height:3px;background:linear-gradient(90deg,#009977 18px,#009b78 32px,#009e79 45px,#00a17a 59px,#00a179 73px,#00a178 86px,#00a177 100px,#00a176 114px,#00a175 127px,#00a173 141px,#00a172 155px,#00a170 168px,#00a16e 182px,#14a16d 196px,#2ca16b 209px,#46a169 223px,#61a166 237px,#80a164 250px,#a0a161 264px,#a1834d 278px,#a16d3e 292px,#a05c32 305px,#9c4c28 319px,#98401f 333px,#943519 346px,#902d13 360px,#8c260e 374px,#88200b 387px,#841b07 401px,#801605 415px,#7b1203 428px,#750f01 442px,#700c00 456px,#6b0a00 469px,#680800 483px)"></i><i style="height:3px;background:linear-gradient(90deg,#00997a 18px,#009b7b 32px,#009e7d 46px,#00a17d 59px,#00a17c 73px,#00a17b 87px,#00a17a 101px,#00a179 114px,#00a178 128px,#00a177 142px,#00a175 156px,#00a174 169px,#02a172 183px,#18a171 197px,#31a16f 211px,#4ca16d 224px,#68a16a 238px,#88a168 252px,#a19760 266px,#a17c4c 280px,#a1673d 293px,#a05732 307px,#9b4827 321px,#973c1f 335px,#933219 348px,#8f2a13 362px,#8b230f 376px,#861d0b 390px,#821908 403px,#7e1405 417px,#7a1103 431px,#740d01 445px,#6e0b00 458px,#690800 472px,#660700 486px)"></i><i style="height:3px;background:linear-gradient(90deg,#00997d 19px,#009c7e 33px,#009f80 47px,#00a181 61px,#00a180 74px,#00a17f 88px,#00a17e 102px,#00a17d 116px,#00a17c 130px,#00a17a 144px,#00a179 158px,#00a178 171px,#07a176 185px,#1ea175 199px,#38a173 213px,#54a171 227px,#72a16f 241px,#93a16d 254px,#a18d5d 268px,#a1734a 282px,#a1603c 296px,#9f5030 310px,#9a4226 324px,#96371f 338px,#922e18 351px,#8e2713 365px,#89200e 379px,#851b0b 393px,#811608 407px,#7d1205 421px,#780f03 435px,#720c01 448px,#6c0900 462px,#670700 476px,#640600 490px)"></i><i style="height:3px;background:linear-gradient(90deg,#009980 20px,#009c82 34px,#009f83 48px,#00a184 62px,#00a183 76px,#00a182 90px,#00a181 104px,#00a180 118px,#00a17f 132px,#00a17e 145px,#00a17d 159px,#00a17c 173px,#0ca17a 187px,#25a179 201px,#3fa177 215px,#5da175 229px,#7ca173 243px,#9fa171 257px,#a1835a 271px,#a16b48 285px,#a15a3b 299px,#9e4a2f 313px,#993d26 327px,#95331e 341px,#912a18 355px,#8c2312 369px,#881d0e 382px,#84180b 396px,#801408 410px,#7b1005 424px,#760d03 438px,#700a01 452px,#6a0800 466px,#650600 480px,#620500 494px)"></i><i style="height:3px;background:linear-gradient(90deg,#009a83 20px,#009c85 34px,#009f87 47px,#00a187 61px,#00a187 75px,#00a186 88px,#00a185 102px,#00a184 115px,#00a183 129px,#00a182 143px,#00a181 156px,#00a180 170px,#08a17f 184px,#20a17e 197px,#3aa17c 211px,#56a17b 224px,#75a179 238px,#97a177 252px,#a18964 265px,#a17051 279px,#a15e42 293px,#9f4e36 306px,#9b412b 320px,#973623 333px,#932d1c 347px,#8e2516 361px,#8a1f11 374px,#861a0d 388px,#82150a 402px,#7e1207 415px,#7a0e05 429px,#730b03 442px,#6d0901 456px,#680700 470px,#630500 483px,#610400 497px)"></i><i style="height:3px;background:linear-gradient(90deg,#009a86 21px,#009c88 35px,#00a08a 48px,#00a18b 62px,#00a18a 76px,#00a18a 90px,#00a189 103px,#00a188 117px,#00a187 131px,#00a186 144px,#00a186 158px,#00a185 172px,#0da183 186px,#26a182 199px,#42a181 213px,#5fa180 227px,#80a17e 240px,#a19e7a 254px,#a17f61 268px,#a1684f 282px,#a15740 295px,#9e4834 309px,#9a3c2a 323px,#963222 336px,#92291b 350px,#8d2216 364px,#891c11 378px,#85170d 391px,#81130a 405px,#7c1007 419px,#780c05 432px,#710a03 446px,#6b0701 460px,#660500 474px,#610400 487px,#5f0300 501px)"></i><i style="height:3px;background:linear-gradient(90deg,#009a8a 22px,#009d8c 36px,#00a08e 50px,#00a18e 63px,#00a18e 77px,#00a18d 91px,#00a18d 105px,#00a18c 119px,#00a18b 132px,#00a18b 146px,#00a18a 160px,#00a189 174px,#13a188 188px,#2da187 201px,#4aa186 215px,#69a185 229px,#8ba184 243px,#a19276 257px,#a1765e 270px,#a1614d 284px,#a1513f 298px,#9d4333 312px,#993729 326px,#952e21 339px,#90261b 353px,#8c1f15 367px,#881a11 381px,#84150d 395px,#7f110a 408px,#7b0e07 422px,#760b05 436px,#6f0803 450px,#690601 464px,#640400 477px,#5f0300 491px,#5e0200 505px)"></i><i style="height:3px;background:linear-gradient(90deg,#009a8d 22px,#009d8f 36px,#00a092 50px,#00a192 64px,#00a192 78px,#00a191 92px,#00a191 105px,#00a190 119px,#00a190 133px,#00a18f 147px,#00a18f 161px,#00a18e 175px,#18a18d 189px,#33a18c 203px,#51a18b 217px,#72a18a 231px,#96a189 245px,#a18873 259px,#a16e5c 272px,#a15b4b 286px,#a14c3e 300px,#9d3e32 314px,#983329 328px,#942a21 342px,#90231a 356px,#8b1d15 370px,#871711 384px,#82130d 398px,#7e0f0a 412px,#7a0c07 426px,#740905 439px,#6d0703 453px,#670501 467px,#620300 481px,#5e0200 495px,#5d0100 509px)"></i><i style="height:3px;background:linear-gradient(90deg,#009b91 23px,#009d93 37px,#00a096 51px,#00a196 65px,#00a196 79px,#00a195 93px,#00a195 107px,#00a195 121px,#00a194 135px,#00a194 149px,#00a193 163px,#03a193 177px,#1da192 191px,#3aa192 205px,#59a191 219px,#7ba190 233px,#a1a08f 247px,#a17f71 261px,#a1675b 274px,#a1554a 288px,#a0473d 302px,#9c3a32 316px,#972f28 330px,#932721 344px,#8f201a 358px,#8a1a15 372px,#861511 386px,#82110d 400px,#7d0e0a 414px,#790b07 428px,#720805 442px,#6c0603 456px,#660401 470px,#600200 484px,#5c0100 498px,#5d0000 512px)"></i><i style="height:3px;background:linear-gradient(90deg,#009b95 24px,#009d97 38px,#00a19a 51px,#00a19a 65px,#00a19a 79px,#00a19a 92px,#00a199 106px,#00a199 120px,#00a199 133px,#00a199 147px,#00a198 161px,#01a198 174px,#1ba198 188px,#37a198 202px,#55a197 215px,#77a197 229px,#9da196 243px,#a1827a 256px,#a16a62 270px,#a15751 284px,#a14943 297px,#9d3c37 311px,#99312d 325px,#952825 338px,#91211e 352px,#8c1b18 366px,#881613 379px,#841210 393px,#7f0e0c 407px,#7b0b09 420px,#760907 434px,#700605 448px,#690403 461px,#630301 475px,#5d0100 489px,#5c0000 502px,#5d0000 516px)"></i><i style="height:3px;background:linear-gradient(90deg,#009b99 25px,#009e9b 39px,#00a19e 52px,#00a19e 66px,#00a19e 80px,#00a19e 94px,#00a19e 108px,#00a19e 121px,#00a19e 135px,#00a19e 149px,#00a19e 162px,#06a19e 176px,#21a19e 190px,#3fa19e 204px,#5fa19d 218px,#83a19d 231px,#a19894 245px,#a17876 259px,#a16260 272px,#a1514f 286px,#a14342 300px,#9d3736 314px,#982d2c 328px,#942524 341px,#901e1d 355px,#8b1918 369px,#871413 382px,#83100f 396px,#7e0d0c 410px,#7a0a09 424px,#740707 438px,#6e0505 451px,#680303 465px,#610201 479px,#5b0000 492px,#5c0000 506px,#5d0000 520px)"></i><i style="height:3px;background:linear-gradient(90deg,#009a9b 25px,#009c9e 39px,#009fa1 53px,#009fa1 67px,#009fa1 80px,#009fa1 94px,#009fa1 108px,#009fa1 122px,#009ea1 136px,#009ea1 150px,#009ea1 164px,#0b9ea1 177px,#269ea1 191px,#449da1 205px,#659da1 219px,#8a9da1 233px,#a18d91 247px,#a17073 261px,#a15b5e 274px,#a14b4e 288px,#a03e41 302px,#9c3335 316px,#982a2b 330px,#932223 344px,#8f1c1d 358px,#8a1618 372px,#861213 385px,#820e0f 399px,#7d0b0c 413px,#790809 427px,#730607 441px,#6c0405 455px,#660203 469px,#600101 482px,#5b0000 496px,#5c0000 510px,#5e0000 524px)"></i><i style="height:3px;background:linear-gradient(90deg,#00969b 26px,#00999e 40px,#009ba1 54px,#009ba1 68px,#009ba1 82px,#009aa1 96px,#009aa1 110px,#009aa1 123px,#0099a1 137px,#0099a1 151px,#0099a1 165px,#0f98a1 179px,#2b98a1 193px,#4997a1 207px,#6a97a1 221px,#8f96a1 235px,#a1838d 249px,#a16871 263px,#a1555c 276px,#a1464d 290px,#a03a40 304px,#9b2f34 318px,#97262b 332px,#921f23 346px,#8e191d 360px,#8a1418 374px,#851013 388px,#810c0f 402px,#7d090c 416px,#780709 430px,#720507 444px,#6b0305 457px,#650103 471px,#5f0001 485px,#5c0000 499px,#5d0000 513px,#5e0000 527px)"></i><i style="height:3px;background:linear-gradient(90deg,#00939b 27px,#00959e 41px,#0097a1 55px,#0097a1 69px,#0096a1 83px,#0096a1 97px,#0095a1 111px,#0095a1 125px,#0094a1 139px,#0094a1 153px,#0093a1 167px,#1593a1 181px,#3092a1 195px,#4f91a1 209px,#7090a1 223px,#958fa1 237px,#a17988 251px,#a1616e 265px,#a14f5a 279px,#a1414b 293px,#9f353e 307px,#9a2b33 321px,#96232a 335px,#921c23 349px,#8d161c 363px,#891217 377px,#840e13 391px,#800b0f 405px,#7c080c 419px,#770509 433px,#700307 447px,#6a0205 461px,#640003 475px,#5f0002 489px,#5d0000 503px,#5e0000 517px,#5f0000 531px)"></i><i style="height:3px;background:linear-gradient(90deg,#008f9c 28px,#00919e 42px,#0093a1 55px,#0093a1 69px,#0092a1 83px,#0092a1 97px,#0091a1 110px,#0090a1 124px,#0090a1 138px,#008fa1 151px,#008ea1 165px,#128da1 179px,#2c8da1 192px,#498ca1 206px,#698ba1 220px,#8b89a1 234px,#a17b91 247px,#a16275 261px,#a15061 275px,#a14251 288px,#a03744 302px,#9c2c38 316px,#98242e 329px,#941d26 343px,#8f1720 357px,#8b131a 371px,#870e15 384px,#820b11 398px,#7e080e 412px,#7a060b 425px,#740408 439px,#6e0206 453px,#680004 466px,#620003 480px,#5e0001 494px,#5e0000 508px,#5f0000 521px,#600000 535px)"></i><i style="height:3px;background:linear-gradient(90deg,#008c9c 28px,#008d9e 42px,#008fa1 56px,#008fa1 69px,#008ea1 83px,#008da1 97px,#008da1 111px,#008ca1 124px,#008ba1 138px,#008aa1 152px,#0089a1 166px,#1588a1 180px,#3087a1 193px,#4c86a1 207px,#6c85a1 221px,#8e83a1 235px,#a1738f 249px,#a15c74 262px,#a14b60 276px,#a13e50 290px,#a03343 304px,#9c2938 317px,#97212e 331px,#931b26 345px,#8f1520 359px,#8b111a 373px,#860d16 386px,#820a12 400px,#7e070e 414px,#7a040b 428px,#730209 442px,#6d0106 455px,#670004 469px,#620003 483px,#5f0002 497px,#5e0001 510px,#5f0000 524px,#600000 538px)"></i><i style="height:3px;background:linear-gradient(90deg,#00889c 29px,#008a9e 43px,#008ba1 57px,#008ba1 71px,#008aa1 84px,#0089a1 98px,#0088a1 112px,#0087a1 126px,#0086a1 140px,#0085a1 154px,#0284a1 168px,#1a83a1 182px,#3582a1 195px,#5280a1 209px,#717fa1 223px,#947da1 237px,#a16a8b 251px,#a15571 265px,#a1455e 279px,#a1394f 292px,#9f2e42 306px,#9b2537 320px,#971e2d 334px,#921826 348px,#8e131f 362px,#8a0e1a 376px,#850b15 389px,#810811 403px,#7d050e 417px,#78030b 431px,#720108 445px,#6c0006 459px,#660004 473px,#620003 487px,#600002 500px,#5f0001 514px,#600000 528px,#610000 542px)"></i><i style="height:3px;background:linear-gradient(90deg,#00859c 30px,#00869e 44px,#0088a1 58px,#0087a1 72px,#0086a1 86px,#0085a1 100px,#0084a1 114px,#0083a1 128px,#0082a1 142px,#0081a1 156px,#067fa1 169px,#1f7ea1 183px,#3a7ca1 197px,#577ba1 211px,#7779a1 225px,#9a77a1 239px,#a16286 253px,#a14e6e 267px,#a1405c 281px,#a1344d 295px,#9f2a41 309px,#9a2236 323px,#961b2d 337px,#921525 351px,#8d101f 365px,#890c1a 379px,#850915 393px,#810611 407px,#7c040e 420px,#77020b 434px,#710008 448px,#6b0006 462px,#660004 476px,#620003 490px,#600002 504px,#600001 518px,#610000 532px,#620000 546px)"></i><i style="height:3px;background:linear-gradient(90deg,#00819c 31px,#00839f 45px,#0084a1 58px,#0083a1 72px,#0082a1 86px,#0081a1 99px,#0080a1 113px,#007fa1 127px,#007ea1 140px,#007ca1 154px,#057ba1 168px,#1d79a1 181px,#3678a1 195px,#5276a1 209px,#7074a1 222px,#9172a1 236px,#a1638f 250px,#a14f75 263px,#a14062 277px,#a13552 290px,#a02b46 304px,#9c223a 318px,#981b31 331px,#941629 345px,#8f1122 359px,#8b0d1d 372px,#870918 386px,#830714 400px,#7f0410 413px,#7b020d 427px,#75000a 441px,#6f0008 454px,#6a0006 468px,#650004 482px,#620003 495px,#610002 509px,#610001 523px,#620000 536px,#620000 550px)"></i><i style="height:3px;background:linear-gradient(90deg,#007e9c 32px,#00809f 46px,#0080a1 59px,#007fa1 73px,#007ea1 87px,#007da1 101px,#007ca1 114px,#007ba1 128px,#0079a1 142px,#0078a1 155px,#0976a1 169px,#2174a1 183px,#3a73a1 197px,#5671a1 210px,#746ea1 224px,#956ca1 238px,#a15b8b 251px,#a14973 265px,#a13b60 279px,#a13051 292px,#a02745 306px,#9c1f3a 320px,#971930 334px,#931328 347px,#8f0f22 361px,#8b0b1c 375px,#870818 388px,#830514 402px,#7f0310 416px,#7a010d 430px,#74000a 443px,#6e0008 457px,#690006 471px,#650004 484px,#630003 498px,#620002 512px,#620001 526px,#620000 539px,#630000 553px)"></i><i style="height:3px;background:linear-gradient(90deg,#007b9c 32px,#007c9f 46px,#007da1 60px,#007ca1 73px,#007aa1 87px,#0079a1 101px,#0078a1 115px,#0076a1 129px,#0075a1 143px,#0073a1 156px,#0c72a1 170px,#2470a1 184px,#3e6ea1 198px,#596ba1 212px,#7869a1 225px,#9966a1 239px,#a15589 253px,#a14471 267px,#a1375f 281px,#a12c50 294px,#9f2444 308px,#9b1c39 322px,#971630 336px,#931128 350px,#8e0d22 364px,#8a091c 377px,#860617 391px,#820413 405px,#7e0110 419px,#79000d 433px,#73000a 446px,#6e0008 460px,#690006 474px,#660004 488px,#630003 502px,#620002 516px,#620001 529px,#630000 543px,#630000 557px)"></i><i style="height:3px;background:linear-gradient(90deg,#00789c 33px,#00799f 47px,#0079a1 61px,#0078a1 75px,#0077a1 89px,#0075a1 102px,#0074a1 116px,#0072a1 130px,#0071a1 144px,#006fa1 158px,#116da1 172px,#296ba1 186px,#4269a1 200px,#5e66a1 214px,#7d64a1 228px,#9e61a1 241px,#a14e85 255px,#a13e6e 269px,#a1325d 283px,#a1284f 297px,#9f2043 311px,#9b1938 325px,#96132f 339px,#920f27 353px,#8e0b21 366px,#8a071c 380px,#860417 394px,#820213 408px,#7e0010 422px,#78000d 436px,#73000a 450px,#6d0008 464px,#690006 478px,#660004 492px,#640003 505px,#630002 519px,#630001 533px,#640000 547px,#640000 561px)"></i><i style="height:3px;background:linear-gradient(90deg,#00749c 34px,#00759f 48px,#0076a1 62px,#0074a1 76px,#0073a1 90px,#0071a1 104px,#0070a1 118px,#006ea1 132px,#006ca1 146px,#006ba1 160px,#1568a1 174px,#2d66a1 188px,#4764a1 202px,#6361a1 216px,#825ea1 230px,#a15a9f 244px,#a14782 258px,#a1396c 272px,#a12d5b 286px,#a1244e 300px,#9e1d42 313px,#9a1637 327px,#96112e 341px,#920c27 355px,#8d0921 369px,#89051c 383px,#850317 397px,#810113 411px,#7d0010 425px,#77000d 439px,#72000a 453px,#6d0008 467px,#690006 481px,#660004 495px,#640003 509px,#640002 523px,#640001 537px,#640000 551px,#650000 565px)"></i><i style="height:3px;background:linear-gradient(90deg,#00719c 35px,#00729f 49px,#0072a1 62px,#0071a1 76px,#006fa1 90px,#006ea1 103px,#006ca1 117px,#006ba1 131px,#0069a1 144px,#0067a1 158px,#1365a1 172px,#2a62a1 185px,#4360a1 199px,#5d5da1 213px,#7a5aa1 226px,#9a57a1 240px,#a14889 254px,#a13973 267px,#a12e61 281px,#a12553 295px,#a01d47 308px,#9c173c 322px,#981133 336px,#940d2b 349px,#900924 363px,#8c061f 377px,#88031a 390px,#840116 404px,#800012 418px,#7b000f 431px,#76000c 445px,#71000a 459px,#6c0008 472px,#690006 486px,#660004 500px,#650003 513px,#650002 527px,#640001 541px,#650000 554px,#650000 568px)"></i><i style="height:3px;background:linear-gradient(90deg,#006e9c 36px,#006f9f 50px,#006fa1 63px,#006da1 77px,#006ca1 91px,#006aa1 104px,#0069a1 118px,#0067a1 132px,#0065a1 145px,#0163a1 159px,#1660a1 173px,#2d5ea1 186px,#455ba1 200px,#6059a1 214px,#7d56a1 227px,#9c52a1 241px,#a14388 255px,#a13572 268px,#a12a61 282px,#a12253 296px,#a01b47 309px,#9c143c 323px,#980f33 337px,#940b2b 350px,#900725 364px,#8c041f 378px,#88021a 391px,#840016 405px,#800013 419px,#7b000f 432px,#76000c 446px,#71000a 460px,#6d0008 473px,#690006 487px,#670005 501px,#660003 514px,#650002 528px,#650001 542px,#650000 555px,#660000 569px)"></i><i style="height:3px;background:linear-gradient(90deg,#006b9c 37px,#006c9f 51px,#006ca1 65px,#006aa1 78px,#0068a1 92px,#0067a1 106px,#0065a1 120px,#0063a1 134px,#0061a1 148px,#065ea1 161px,#1b5ca1 175px,#3359a1 189px,#4b57a1 203px,#6654a1 217px,#8350a1 230px,#a14c9e 244px,#a13b83 258px,#a12f6e 272px,#a1255d 286px,#a11d50 300px,#9f1745 313px,#9b113a 327px,#970c31 341px,#93082a 355px,#8f0523 369px,#8b021e 382px,#870019 396px,#830015 410px,#7f0012 424px,#7a000f 438px,#75000c 451px,#70000a 465px,#6c0008 479px,#690006 493px,#670005 507px,#660003 521px,#660002 534px,#660001 548px,#660000 562px)"></i><i style="height:3px;background:linear-gradient(90deg,#00689c 38px,#00699f 52px,#0068a1 66px,#0067a1 80px,#0065a1 94px,#0063a1 108px,#0061a1 122px,#005fa1 136px,#005da1 150px,#0b5aa1 164px,#2058a1 177px,#3855a1 191px,#5152a1 205px,#6c4fa1 219px,#8a4ba1 233px,#a14498 247px,#a1357e 261px,#a12a6a 275px,#a1215b 289px,#a11a4e 303px,#9f1343 317px,#9a0e38 331px,#960a30 345px,#920629 359px,#8e0323 373px,#8a001d 387px,#870019 401px,#830015 415px,#7e0011 428px,#79000e 442px,#74000c 456px,#6f0009 470px,#6c0007 484px,#690006 498px,#680004 512px,#670003 526px,#660002 540px,#660001 554px)"></i><i style="height:3px;background:linear-gradient(90deg,#00659c 38px,#00659e 52px,#0065a1 65px,#0063a1 79px,#0062a1 93px,#0060a1 107px,#005ea1 120px,#005ca1 134px,#0059a1 148px,#0957a1 162px,#1e54a1 175px,#3552a1 189px,#4d4fa1 203px,#674ba1 216px,#8348a1 230px,#a144a0 244px,#a13585 258px,#a12a70 271px,#a12160 285px,#a11952 299px,#a01347 313px,#9c0e3c 326px,#980933 340px,#94062c 354px,#900325 368px,#8c0020 381px,#89001b 395px,#850017 409px,#810014 422px,#7c0010 436px,#77000d 450px,#72000b 464px,#6e0009 477px,#6b0007 491px,#690006 505px,#680004 519px,#670003 532px,#670002 546px)"></i><i style="height:3px;background:linear-gradient(90deg,#00629c 39px,#00629e 53px,#0062a1 67px,#0060a1 81px,#005ea1 94px,#005ca1 108px,#005aa1 122px,#0058a1 136px,#0056a1 150px,#0e53a1 164px,#2350a1 178px,#3a4da1 191px,#524aa1 205px,#6d47a1 219px,#8943a1 233px,#a13c9a 247px,#a12f80 261px,#a1246c 275px,#a11c5d 288px,#a11650 302px,#9f1045 316px,#9b0b3b 330px,#970732 344px,#93042b 358px,#900125 372px,#8c001f 386px,#88001b 399px,#850017 413px,#800013 427px,#7a0010 441px,#76000d 455px,#71000b 469px,#6e0009 483px,#6b0007 496px,#6a0005 510px,#680004 524px,#680003 538px)"></i><i style="height:3px;background:linear-gradient(90deg,#005f9c 40px,#005f9e 54px,#005fa1 68px,#005da1 82px,#005ba1 96px,#0059a1 110px,#0057a1 124px,#0054a1 138px,#0052a1 152px,#124fa1 166px,#284ca1 180px,#3f49a1 194px,#5846a1 208px,#7242a1 222px,#8f3ea1 236px,#a13594 250px,#a1297c 264px,#a12069 278px,#a1185a 292px,#a1124e 306px,#9f0d43 320px,#9b0839 334px,#970431 348px,#93012a 362px,#8f0024 376px,#8b001e 390px,#88001a 404px,#840016 418px,#7e0012 432px,#79000f 446px,#75000d 460px,#71000a 474px,#6e0008 488px,#6b0007 502px,#6a0005 516px,#690004 530px)"></i><i style="height:3px;background:linear-gradient(90deg,#005c9c 41px,#005c9e 55px,#005ca1 68px,#005aa1 82px,#0058a1 96px,#0056a1 110px,#0053a1 123px,#0051a1 137px,#004fa1 151px,#124ca1 165px,#2649a1 178px,#3d46a1 192px,#5442a1 206px,#6e3fa1 220px,#8a3ba1 233px,#a1359a 247px,#a12981 261px,#a11f6e 275px,#a1185f 288px,#a11152 302px,#a00c47 316px,#9c083d 330px,#990434 343px,#95012d 357px,#910026 371px,#8d0021 385px,#8a001c 398px,#860018 412px,#810014 426px,#7c0011 440px,#78000e 453px,#74000c 467px,#70000a 481px,#6d0008 495px,#6b0006 508px,#6a0005 522px)"></i><i style="height:3px;background:linear-gradient(90deg,#00599c 42px,#00599e 56px,#0059a1 70px,#0057a1 84px,#0055a1 98px,#0052a1 111px,#0050a1 125px,#004da1 139px,#034ba1 153px,#1648a1 167px,#2b45a1 181px,#4242a1 195px,#5a3ea1 209px,#743aa1 222px,#9036a1 236px,#a12e94 250px,#a1237d 264px,#a11b6b 278px,#a1145c 292px,#a10e50 306px,#a00945 320px,#9c053b 334px,#980233 347px,#94002c 361px,#900025 375px,#8d0020 389px,#89001c 403px,#860018 417px,#800014 431px,#7b0011 445px,#77000e 458px,#73000b 472px,#700009 486px,#6d0008 500px,#6c0006 514px)"></i><i style="height:3px;background:linear-gradient(90deg,#00569c 43px,#00569e 57px,#0056a1 70px,#0054a1 84px,#0052a1 97px,#004fa1 111px,#004da1 125px,#004aa1 138px,#0248a1 152px,#1545a1 166px,#2a42a1 179px,#3f3fa1 193px,#563ba1 206px,#6f37a1 220px,#8a33a1 234px,#a12d9b 247px,#a12283 261px,#a11a70 274px,#a11360 288px,#a10d54 302px,#a10949 315px,#9e053f 329px,#9a0136 343px,#96002f 356px,#920029 370px,#8f0023 383px,#8c001e 397px,#88001a 411px,#830016 424px,#7e0013 438px,#7a0010 452px,#76000d 465px,#72000b 479px,#700009 492px,#6e0008 506px)"></i><i style="height:3px;background:linear-gradient(90deg,#00549b 44px,#00539e 58px,#0053a1 72px,#0051a1 85px,#004ea1 99px,#004ca1 113px,#004aa1 127px,#0047a1 140px,#0744a1 154px,#1a41a1 168px,#2e3ea1 182px,#443ba1 195px,#5c37a1 209px,#7533a1 223px,#902fa1 237px,#a12795 250px,#a11d7e 264px,#a1166c 278px,#a10f5e 292px,#a10a52 305px,#a10647 319px,#9d023d 333px,#990035 347px,#96002e 360px,#920027 374px,#8e0022 388px,#8b001d 402px,#870019 415px,#820015 429px,#7d0012 443px,#79000f 457px,#75000d 470px,#72000b 484px,#700009 498px)"></i><i style="height:3px;background:linear-gradient(90deg,#00519b 45px,#00509e 59px,#0050a1 73px,#004ea1 87px,#004ba1 101px,#0049a1 115px,#0046a1 128px,#0043a1 142px,#0b41a1 156px,#1e3da1 170px,#333aa1 184px,#4937a1 198px,#6133a1 212px,#7b2fa1 226px,#962aa1 240px,#a12290 254px,#a1197a 268px,#a11269 281px,#a10c5b 295px,#a1074f 309px,#a00345 323px,#9c003c 337px,#990033 351px,#95002c 365px,#910026 379px,#8e0021 393px,#8b001d 407px,#860018 420px,#810015 434px,#7c0011 448px,#78000f 462px,#75000c 476px,#72000b 490px)"></i><i style="height:3px;background:linear-gradient(90deg,#004e9b 46px,#004e9d 60px,#004da0 73px,#004ba1 87px,#0048a1 100px,#0046a1 114px,#0043a1 128px,#0041a1 141px,#0a3ea1 155px,#1d3ba1 169px,#3137a1 182px,#4734a1 196px,#5d30a1 210px,#762ca1 223px,#9028a1 237px,#a12196 250px,#a11880 264px,#a1116e 278px,#a10b5f 291px,#a10753 305px,#a10349 318px,#9e0040 332px,#9b0037 346px,#970030 359px,#94002a 373px,#900024 387px,#8d001f 400px,#89001b 414px,#840017 428px,#7f0014 441px,#7b0011 455px,#77000e 468px,#75000c 482px)"></i><i style="height:3px;background:linear-gradient(90deg,#004b9b 47px,#004b9d 61px,#004aa0 75px,#0048a1 88px,#0045a1 102px,#0043a1 116px,#0040a1 130px,#003da1 143px,#0f3aa1 157px,#2237a1 171px,#3634a1 185px,#4c30a1 199px,#632ca1 212px,#7b28a1 226px,#9623a1 240px,#a11c91 254px,#a1137b 267px,#a10d6a 281px,#a1085d 295px,#a10451 309px,#a10047 322px,#9e003e 336px,#9a0036 350px,#97002f 364px,#930029 378px,#900023 391px,#8d001f 405px,#87001a 419px,#830016 433px,#7e0013 446px,#7a0010 460px,#77000e 474px)"></i><i style="height:3px;background:linear-gradient(90deg,#00499b 48px,#00489d 62px,#0047a0 76px,#0045a1 90px,#0042a1 104px,#0040a1 118px,#003da1 132px,#013aa1 146px,#1337a1 159px,#2633a1 173px,#3b30a1 187px,#512ca1 201px,#6828a1 215px,#8124a1 229px,#9c1fa1 243px,#a1178c 257px,#a10f77 271px,#a10967 285px,#a1055a 299px,#a1014f 313px,#a10046 327px,#9d003c 341px,#9a0034 355px,#96002d 368px,#930027 382px,#900022 396px,#8b001d 410px,#860019 424px,#810016 438px,#7d0012 452px,#7a0010 466px)"></i><i style="height:3px;background:linear-gradient(90deg,#00469b 49px,#00459d 63px,#0044a0 76px,#0042a1 90px,#0040a1 104px,#003da1 117px,#003aa1 131px,#0137a1 144px,#1234a1 158px,#2531a1 172px,#382da1 185px,#4d2aa1 199px,#6426a1 213px,#7c21a1 226px,#951da1 240px,#a11692 254px,#a10f7d 267px,#a1096c 281px,#a1045f 294px,#a10053 308px,#a10049 322px,#9f0041 335px,#9c0038 349px,#980031 363px,#95002b 376px,#920025 390px,#8e0020 403px,#89001c 417px,#840018 431px,#800015 444px,#7d0012 458px)"></i><i style="height:3px;background:linear-gradient(90deg,#00439a 50px,#00429d 64px,#00419f 78px,#003fa1 91px,#003da1 105px,#003aa1 119px,#0037a1 133px,#0534a1 147px,#1631a1 160px,#292da1 174px,#3d2aa1 188px,#5226a1 202px,#6922a1 216px,#811da1 229px,#9c19a1 243px,#a1118d 257px,#a10b79 271px,#a10569 284px,#a1015c 298px,#a10051 312px,#a10047 326px,#9f003f 340px,#9b0037 353px,#980030 367px,#95002a 381px,#920024 395px,#8d001f 409px,#88001b 422px,#830017 436px,#800014 450px)"></i><i style="height:3px;background:linear-gradient(90deg,#00419a 51px,#00409c 65px,#003e9f 79px,#003da1 93px,#003aa1 107px,#0037a1 121px,#0034a1 135px,#0831a1 149px,#1a2da1 163px,#2e2aa1 177px,#4226a1 191px,#5822a1 205px,#6f1ea1 219px,#8719a1 233px,#a1149f 246px,#a10d88 260px,#a10775 274px,#a10266 288px,#a10059 302px,#a1004e 316px,#a10045 330px,#9e003d 344px,#9b0035 358px,#98002e 372px,#940028 386px,#900023 400px,#8b001e 414px,#87001a 428px,#830017 442px)"></i><i style="height:3px;background:linear-gradient(90deg,#003e9a 53px,#003d9c 67px,#003c9f 80px,#003aa1 94px,#0037a1 107px,#0034a1 121px,#0031a1 135px,#092ea1 148px,#1a2ba1 162px,#2d27a1 175px,#4024a1 189px,#5520a1 203px,#6b1ca1 216px,#8317a1 230px,#9c12a1 244px,#a10c8d 257px,#a1067a 271px,#a1016a 284px,#a1005d 298px,#a10053 312px,#a10049 325px,#a00041 339px,#9d0039 352px,#9a0032 366px,#97002c 380px,#930026 393px,#8e0021 407px,#8a001d 420px,#86001a 434px)"></i><i style="height:3px;background:linear-gradient(90deg,#003c9a 54px,#003a9c 68px,#00399f 82px,#0037a1 95px,#0034a1 109px,#0031a1 123px,#002ea1 137px,#0d2ba1 150px,#1f28a1 164px,#3124a1 178px,#4520a1 192px,#5a1ca1 206px,#7018a1 219px,#8813a1 233px,#a10e9f 247px,#a10788 261px,#a10276 274px,#a10067 288px,#a1005b 302px,#a10050 316px,#a10047 330px,#a0003f 343px,#9d0037 357px,#990030 371px,#96002b 385px,#920025 398px,#8d0020 412px,#89001c 426px)"></i><i style="height:3px;background:linear-gradient(90deg,#00399a 55px,#00389c 69px,#00369e 83px,#0034a1 97px,#0031a1 111px,#002ea1 125px,#002ba1 139px,#1128a1 153px,#2324a1 167px,#3621a1 181px,#4a1da1 195px,#5f18a1 209px,#7614a1 223px,#8e0fa1 236px,#a10999 250px,#a10483 264px,#a10072 278px,#a10064 292px,#a10058 306px,#a1004e 320px,#a10045 334px,#9f003d 348px,#9c0036 362px,#99002f 376px,#950029 390px,#900024 404px,#8c0020 418px)"></i><i style="height:3px;background:linear-gradient(90deg,#003799 56px,#00359b 70px,#00349e 83px,#0032a0 97px,#002fa1 110px,#002ca1 124px,#0029a1 138px,#1026a1 151px,#2122a1 165px,#341fa1 179px,#471ba1 192px,#5b17a1 206px,#7112a1 219px,#880ea1 233px,#a109a1 247px,#a1038a 260px,#a10078 274px,#a10069 287px,#a1005d 301px,#a10052 315px,#a10049 328px,#a10042 342px,#9f003a 356px,#9b0033 369px,#98002d 383px,#930027 396px,#900023 410px)"></i><i style="height:3px;background:linear-gradient(90deg,#003499 57px,#00339b 71px,#00319e 85px,#002fa0 98px,#002ca1 112px,#0029a1 126px,#0426a1 140px,#1423a1 154px,#261fa1 167px,#381ba1 181px,#4c17a1 195px,#6013a1 209px,#760ea1 223px,#8e0aa1 236px,#a1049a 250px,#a10085 264px,#a10074 278px,#a10066 292px,#a1005a 305px,#a10050 319px,#a10047 333px,#a10040 347px,#9e0038 361px,#9b0031 374px,#97002b 388px,#930027 402px)"></i><i style="height:3px;background:linear-gradient(90deg,#003299 59px,#00309b 73px,#002e9d 87px,#002ca0 101px,#0029a1 115px,#0026a1 129px,#0823a1 143px,#191fa1 157px,#2b1ca1 171px,#3d18a1 185px,#5114a1 199px,#660fa1 213px,#7d0aa1 226px,#9505a1 240px,#a10094 254px,#a10080 268px,#a1006f 282px,#a10062 296px,#a10057 310px,#a1004d 324px,#a10045 338px,#a1003e 352px,#9e0036 366px,#9a0030 380px,#96002a 394px)"></i><i style="height:3px;background:linear-gradient(90deg,#002f99 60px,#002e9b 74px,#002c9d 87px,#002a9f 101px,#0027a1 114px,#0024a1 128px,#0821a1 142px,#181da1 155px,#291aa1 169px,#3b16a1 182px,#4e12a1 196px,#620ea1 209px,#7709a1 223px,#8e04a1 237px,#a1009b 250px,#a10086 264px,#a10076 277px,#a10068 291px,#a1005c 304px,#a10052 318px,#a10049 332px,#a10042 345px,#a0003b 359px,#9d0034 372px,#99002f 386px)"></i><i style="height:3px;background:linear-gradient(90deg,#002d98 61px,#002b9a 75px,#00299d 89px,#00279f 102px,#0024a1 116px,#0021a1 130px,#0b1ea1 144px,#1c1aa1 157px,#2d17a1 171px,#3f13a1 185px,#530ea1 199px,#670aa1 213px,#7d05a1 226px,#9400a1 240px,#a10095 254px,#a10082 268px,#a10071 282px,#a10064 295px,#a10059 309px,#a1004f 323px,#a10047 337px,#a10040 350px,#a00039 364px,#9c0033 378px)"></i><i style="height:3px;background:linear-gradient(90deg,#002a98 63px,#00299a 77px,#00279c 91px,#00249f 105px,#0022a1 119px,#001ea1 133px,#101ba1 147px,#2117a1 161px,#3213a1 175px,#450fa1 189px,#590ba1 203px,#6d06a1 216px,#8401a1 230px,#9b00a1 244px,#a1008f 258px,#a1007c 272px,#a1006d 286px,#a10061 300px,#a10056 314px,#a1004d 328px,#a10045 342px,#a1003e 356px,#9f0038 370px)"></i><i style="height:3px;background:linear-gradient(90deg,#002898 64px,#00279a 78px,#00249c 91px,#00229e 105px,#001fa0 118px,#001ca1 132px,#0f19a1 145px,#1f15a1 159px,#3012a1 172px,#420ea1 186px,#5509a1 199px,#6805a1 213px,#7d00a1 227px,#9400a1 240px,#a10097 254px,#a10083 267px,#a10073 281px,#a10066 294px,#a1005b 308px,#a10052 321px,#a10049 335px,#a10042 348px,#a1003d 362px)"></i><i style="height:3px;background:linear-gradient(90deg,#002697 65px,#002499 79px,#00229c 93px,#001f9e 106px,#001da0 120px,#041aa1 134px,#1316a1 148px,#2312a1 161px,#340fa1 175px,#460aa1 189px,#5a06a1 203px,#6e02a1 216px,#8300a1 230px,#9a00a1 244px,#a10091 258px,#a1007f 271px,#a1006f 285px,#a10063 299px,#a10058 313px,#a1004f 326px,#a10047 340px,#a10041 354px)"></i><i style="height:3px;background:linear-gradient(90deg,#002497 67px,#002299 81px,#001f9b 95px,#001d9d 109px,#001a9f 123px,#0817a1 137px,#1813a1 151px,#280fa1 165px,#3a0ba1 179px,#4c07a1 193px,#5f03a1 206px,#7400a1 220px,#8a00a1 234px,#a100a0 248px,#a1008b 262px,#a10079 276px,#a1006b 290px,#a1005f 304px,#a10055 318px,#a1004c 332px,#a10046 346px)"></i><i style="height:3px;background:linear-gradient(90deg,#002197 68px,#002099 82px,#001d9b 95px,#001b9d 108px,#00189f 122px,#0815a0 136px,#1711a1 149px,#260ea1 162px,#370aa1 176px,#4806a1 190px,#5b01a1 203px,#6e00a1 216px,#8300a1 230px,#9900a1 244px,#a10093 257px,#a10081 270px,#a10072 284px,#a10065 298px,#a1005b 311px,#a10051 324px,#a1004b 338px)"></i><i style="height:3px;background:linear-gradient(90deg,#001f96 69px,#001d98 83px,#001b9a 96px,#00189c 110px,#00159e 124px,#0b12a0 138px,#1a0fa1 151px,#2a0ba1 165px,#3b07a1 179px,#4d03a1 193px,#6000a1 206px,#7400a1 220px,#8900a1 234px,#9f00a1 248px,#a1008d 261px,#a1007c 275px,#a1006e 289px,#a10062 303px,#a10057 316px,#a10050 330px)"></i><i style="height:3px;background:linear-gradient(90deg,#001d96 71px,#001b98 85px,#00189a 99px,#00169c 113px,#00139e 127px,#0f0fa0 141px,#1f0ca1 155px,#2f08a1 169px,#4104a1 183px,#5300a1 196px,#6600a1 210px,#7a00a1 224px,#9000a1 238px,#a1009b 252px,#a10087 266px,#a10077 280px,#a10069 294px,#a1005e 308px,#a10056 322px)"></i><i style="height:3px;background:linear-gradient(90deg,#001b96 72px,#001997 85px,#001699 99px,#00149b 112px,#00119d 126px,#0e0d9f 139px,#1d0aa0 153px,#2d06a1 166px,#3d02a1 180px,#4f00a1 193px,#6100a1 206px,#7400a1 220px,#8800a1 233px,#9e00a1 247px,#a1008f 260px,#a1007e 274px,#a10070 287px,#a10064 301px,#a1005c 314px)"></i><i style="height:3px;background:linear-gradient(90deg,#001995 74px,#001797 88px,#001499 101px,#00119b 115px,#040e9d 129px,#120b9e 142px,#2207a0 156px,#3203a1 170px,#4300a1 183px,#5400a1 197px,#6700a1 210px,#7a00a1 224px,#8f00a1 238px,#a1009d 251px,#a10089 265px,#a10079 279px,#a1006c 292px,#a10062 306px)"></i><i style="height:3px;background:linear-gradient(90deg,#001795 75px,#001497 89px,#001299 103px,#000f9b 117px,#070c9c 131px,#16089e 145px,#26049f 159px,#3600a1 173px,#4700a1 186px,#5900a1 200px,#6c00a1 214px,#8100a1 228px,#9600a1 242px,#a10096 256px,#a10083 270px,#a10074 284px,#a1006a 298px)"></i><i style="height:3px;background:linear-gradient(90deg,#001494 77px,#001296 90px,#001098 104px,#000d9a 117px,#080a9b 130px,#16069d 144px,#24039e 157px,#3400a0 170px,#4400a1 184px,#5500a1 197px,#6700a1 210px,#7900a1 223px,#8d00a1 237px,#a1009f 250px,#a1008c 263px,#a1007c 277px,#a10071 290px)"></i><i style="height:3px;background:linear-gradient(90deg,#001294 78px,#001096 92px,#000e98 105px,#000b99 119px,#0b079b 132px,#19049d 146px,#28009e 160px,#38009f 173px,#4800a0 187px,#5a00a1 200px,#6c00a1 214px,#8000a1 228px,#9400a1 241px,#a10098 255px,#a10086 268px,#a1007a 282px)"></i><i style="height:3px;background:linear-gradient(90deg,#001094 80px,#000e95 94px,#000b97 108px,#010899 122px,#0f059b 135px,#1d019c 149px,#2c009d 163px,#3c009f 177px,#4e009f 191px,#6000a0 205px,#7300a1 219px,#8700a1 232px,#9c00a1 246px,#a10091 260px,#a00083 274px)"></i><i style="height:3px;background:linear-gradient(90deg,#000e93 82px,#000c95 95px,#000997 108px,#020698 121px,#0f039a 135px,#1c009b 148px,#2a009c 161px,#39009e 174px,#49009e 187px,#5a009f 200px,#6b00a0 213px,#7e00a0 227px,#9100a0 240px,#a0009b 253px,#a0008c 266px)"></i><i style="height:3px;background:linear-gradient(90deg,#000c93 83px,#000a94 96px,#000796 110px,#050498 123px,#120199 137px,#1f009b 150px,#2e009c 164px,#3d009d 177px,#4e009e 191px,#5f009e 204px,#71009f 218px,#83009f 231px,#97009f 245px,#9f0097 258px)"></i><i style="height:3px;background:linear-gradient(90deg,#000a92 85px,#000894 99px,#000596 112px,#080297 126px,#160099 140px,#24009a 154px,#32009b 168px,#42009c 181px,#53009d 195px,#64009e 209px,#77009e 222px,#8a009e 236px,#9b009e 250px)"></i><i style="height:3px;background:linear-gradient(90deg,#000892 87px,#000693 100px,#000395 113px,#090097 126px,#150098 139px,#220099 152px,#30009a 164px,#3e009b 177px,#4d009c 190px,#5d009d 203px,#6e009d 216px,#7f009d 229px,#8e009e 242px)"></i><i style="height:3px;background:linear-gradient(90deg,#000692 89px,#000493 102px,#000195 115px,#0c0096 129px,#190098 142px,#260099 155px,#34009a 168px,#43009b 181px,#52009c 194px,#62009c 208px,#73009c 221px,#82009d 234px)"></i><i style="height:3px;background:linear-gradient(90deg,#000491 91px,#000293 104px,#030094 118px,#100096 132px,#1c0097 145px,#2a0098 158px,#380099 172px,#48009a 186px,#58009b 199px,#68009b 212px,#77009c 226px)"></i><i style="height:3px;background:linear-gradient(90deg,#000291 93px,#000092 107px,#070094 121px,#130095 135px,#200097 149px,#2e0098 162px,#3d0099 176px,#4d009a 190px,#5e009a 204px,#6c009b 218px)"></i><i style="height:3px;background:linear-gradient(90deg,#000090 96px,#000092 109px,#080093 121px,#130094 134px,#1f0096 147px,#2c0097 159px,#390098 172px,#470099 185px,#550099 197px,#62009a 210px)"></i><i style="height:3px;background:linear-gradient(90deg,#000090 98px,#000091 111px,#0b0093 124px,#170094 137px,#230095 150px,#300096 163px,#3d0097 176px,#4c0098 189px,#580098 202px)"></i><i style="height:3px;background:linear-gradient(90deg,#00008f 100px,#030091 113px,#0e0092 127px,#1a0094 140px,#270095 154px,#340096 167px,#420097 181px,#4f0097 194px)"></i><i style="height:3px;background:linear-gradient(90deg,#00008f 103px,#060090 117px,#120092 131px,#1f0093 144px,#2c0094 158px,#3a0095 172px,#460096 186px)"></i><i style="height:3px;background:linear-gradient(90deg,#01008f 107px,#090090 119px,#130091 131px,#1d0092 142px,#280093 154px,#340094 166px,#3d0095 178px)"></i><i style="height:3px;background:linear-gradient(90deg,#05008e 110px,#0c008f 122px,#160091 134px,#210092 146px,#2c0093 158px,#360093 170px)"></i><i style="height:3px;background:linear-gradient(90deg,#08008e 114px,#10008f 126px,#1a0090 138px,#250091 150px,#2e0092 162px)"></i><i style="height:3px;background:linear-gradient(90deg,#0c008e 118px,#14008f 130px,#1e0090 142px,#270091 154px)"></i><i style="height:3px;background:linear-gradient(90deg,#10008d 122px,#18008e 134px,#20008f 146px)"></i><i style="height:3px;background:linear-gradient(90deg,#14008d 127px,#1a008e 138px)"></i></div>
<div class="cg" style="left:1371px;top:295px;width:382px;height:340px;clip-path:polygon(381.2px 170.3px,116.8px 0.6px,0.2px 340px)"><i style="height:2px;background:linear-gradient(90deg,#00ff00 114px,#01ff00 120px)"></i><i style="height:2px;background:linear-gradient(90deg,#00ff02 114px,#07ff00 123px)"></i><i style="height:2px;background:linear-gradient(90deg,#00ff03 113px,#06ff02 120px,#0dff00 126px)"></i><i style="height:2px;background:linear-gradient(90deg,#00ff05 112px,#09ff03 120px,#12ff00 129px)"></i><i style="height:2px;background:linear-gradient(90deg,#00ff06 111px,#06ff05 118px,#11ff02 125px,#19ff00 132px)"></i><i style="height:2px;background:linear-gradient(90deg,#00ff08 111px,#09ff06 119px,#16ff02 128px,#1fff00 136px)"></i><i style="height:2px;background:linear-gradient(90deg,#00ff0a 110px,#07ff08 117px,#12ff05 124px,#1eff02 132px,#25ff00 139px)"></i><i style="height:2px;background:linear-gradient(90deg,#00ff0b 109px,#08ff09 117px,#15ff06 126px,#23ff02 134px,#2cff00 142px)"></i><i style="height:2px;background:linear-gradient(90deg,#00ff0d 109px,#0bff0a 118px,#19ff07 127px,#28ff03 136px,#32ff00 145px)"></i><i style="height:2px;background:linear-gradient(90deg,#00ff0e 108px,#09ff0c 116px,#15ff09 124px,#22ff06 132px,#30ff02 140px,#39ff00 148px)"></i><i style="height:2px;background:linear-gradient(90deg,#00ff10 107px,#09ff0e 116px,#18ff0a 125px,#26ff07 133px,#35ff03 142px,#40ff00 151px)"></i><i style="height:2px;background:linear-gradient(90deg,#00ff12 107px,#09ff10 115px,#16ff0c 123px,#23ff09 130px,#30ff06 138px,#3eff02 146px,#48ff00 154px)"></i><i style="height:2px;background:linear-gradient(90deg,#00ff14 106px,#0aff11 114px,#17ff0e 123px,#26ff0a 132px,#34ff07 140px,#44ff03 148px,#4fff00 157px)"></i><i style="height:2px;background:linear-gradient(90deg,#00ff15 105px,#08ff13 113px,#15ff10 121px,#22ff0d 129px,#30ff0a 136px,#3eff06 144px,#4cff03 152px,#57ff00 160px)"></i><i style="height:2px;background:linear-gradient(90deg,#00ff17 105px,#0aff15 113px,#18ff11 122px,#27ff0e 130px,#35ff0a 139px,#45ff06 147px,#54ff03 156px,#5fff00 164px)"></i><i style="height:2px;background:linear-gradient(90deg,#00ff19 104px,#0bff16 113px,#1aff13 122px,#29ff0f 131px,#39ff0b 140px,#4aff07 149px,#5bff03 158px,#67ff00 167px)"></i><i style="height:2px;background:linear-gradient(90deg,#00ff1b 103px,#09ff18 111px,#17ff15 120px,#26ff12 128px,#35ff0e 136px,#44ff0a 145px,#54ff07 153px,#64ff03 162px,#6fff00 170px)"></i><i style="height:2px;background:linear-gradient(90deg,#00ff1c 103px,#0bff1a 112px,#1aff16 120px,#29ff13 129px,#39ff0f 138px,#49ff0b 147px,#5aff07 156px,#6bff03 164px,#78ff00 173px)"></i><i style="height:2px;background:linear-gradient(90deg,#00ff1e 102px,#0aff1c 110px,#18ff19 118px,#26ff15 127px,#35ff12 135px,#44ff0e 143px,#54ff0b 151px,#64ff07 160px,#75ff03 168px,#81ff00 176px)"></i><i style="height:2px;background:linear-gradient(90deg,#00ff20 101px,#0aff1e 110px,#19ff1a 118px,#28ff17 127px,#38ff13 136px,#48ff0f 144px,#59ff0b 153px,#6aff07 162px,#7cff03 170px,#8aff00 179px)"></i><i style="height:2px;background:linear-gradient(90deg,#00ff22 100px,#09ff20 108px,#17ff1d 116px,#25ff19 125px,#34ff16 133px,#44ff12 141px,#53ff0f 149px,#64ff0b 157px,#75ff07 166px,#86ff03 174px,#93ff00 182px)"></i><i style="height:2px;background:linear-gradient(90deg,#00ff24 100px,#0bff22 108px,#19ff1e 117px,#28ff1b 126px,#38ff17 134px,#48ff13 142px,#59ff10 151px,#6aff0c 160px,#7cff08 168px,#8fff03 176px,#9dff00 185px)"></i><i style="height:2px;background:linear-gradient(90deg,#00ff26 99px,#0bff24 108px,#1bff20 117px,#2bff1c 126px,#3cff18 135px,#4dff14 144px,#5fff10 153px,#72ff0c 162px,#85ff08 171px,#99ff03 180px,#a7ff00 189px)"></i><i style="height:2px;background:linear-gradient(90deg,#00ff28 98px,#0aff26 107px,#19ff22 115px,#28ff1f 124px,#38ff1b 132px,#49ff18 141px,#5aff14 149px,#6bff10 158px,#7eff0c 166px,#90ff07 175px,#a4ff03 183px,#b1ff00 192px)"></i><i style="height:2px;background:linear-gradient(90deg,#00ff2a 98px,#0bff27 107px,#1bff24 116px,#2bff20 124px,#3cff1d 133px,#4dff19 142px,#5fff15 151px,#72ff11 160px,#85ff0c 169px,#99ff08 177px,#aeff03 186px,#bcff00 195px)"></i><i style="height:2px;background:linear-gradient(90deg,#00ff2c 97px,#0aff2a 105px,#19ff26 114px,#29ff23 122px,#39ff20 131px,#49ff1c 139px,#5aff18 148px,#6cff14 156px,#7eff10 164px,#91ff0c 173px,#a5ff08 181px,#b9ff03 190px,#c7ff00 198px)"></i><i style="height:2px;background:linear-gradient(90deg,#00ff2e 96px,#0aff2c 105px,#1aff28 114px,#2aff25 122px,#3bff21 131px,#4cff1d 140px,#5eff19 148px,#71ff15 157px,#84ff11 166px,#98ff0d 175px,#adff08 184px,#c3ff03 192px,#d3ff00 201px)"></i><i style="height:2px;background:linear-gradient(90deg,#00ff30 96px,#0cff2e 105px,#1cff2a 114px,#2dff26 123px,#3fff23 132px,#51ff1f 141px,#64ff1b 150px,#77ff16 159px,#8cff12 168px,#a1ff0d 177px,#b6ff09 186px,#cdff04 195px,#dfff00 204px)"></i><i style="height:2px;background:linear-gradient(90deg,#00ff32 95px,#0bff30 104px,#1bff2d 112px,#2bff29 121px,#3cff26 129px,#4dff22 138px,#5fff1e 147px,#72ff1a 155px,#85ff16 164px,#99ff12 173px,#aeff0d 181px,#c3ff08 190px,#daff04 198px,#ebff00 207px)"></i><i style="height:2px;background:linear-gradient(90deg,#00ff35 94px,#0bff32 103px,#1bff2f 112px,#2cff2b 121px,#3eff27 130px,#50ff24 139px,#63ff20 148px,#77ff1b 156px,#8bff17 165px,#a0ff13 174px,#b6ff0e 183px,#cdff09 192px,#e5ff04 201px,#f7ff00 210px)"></i><i style="height:2px;background:linear-gradient(90deg,#00ff37 94px,#0cff34 102px,#1bff31 111px,#2cff2e 120px,#3cff2a 128px,#4eff26 136px,#60ff23 145px,#72ff1f 154px,#86ff1b 162px,#9aff16 170px,#afff12 179px,#c4ff0d 188px,#dbff09 196px,#f2ff04 204px,#fff900 213px)"></i><i style="height:2px;background:linear-gradient(90deg,#00ff39 93px,#0cff36 102px,#1cff33 111px,#2dff30 120px,#3fff2c 128px,#51ff28 137px,#65ff24 146px,#78ff20 155px,#8dff1c 164px,#a2ff17 173px,#b8ff13 182px,#d0ff0e 190px,#e8ff09 199px,#fffd04 208px,#ffed00 217px)"></i><i style="height:2px;background:linear-gradient(90deg,#00ff3b 92px,#0bff39 101px,#1bff36 109px,#2bff32 118px,#3cff2f 126px,#4eff2b 135px,#60ff27 143px,#73ff23 152px,#87ff1f 160px,#9cff1b 169px,#b1ff17 177px,#c7ff12 186px,#deff0e 194px,#f6ff09 203px,#fff003 211px,#ffe100 220px)"></i><i style="height:2px;background:linear-gradient(90deg,#00ff3d 92px,#0cff3b 101px,#1dff38 109px,#2eff34 118px,#40ff31 127px,#52ff2d 136px,#65ff29 144px,#79ff25 153px,#8eff21 162px,#a3ff1c 171px,#b9ff18 179px,#d1ff13 188px,#e9ff0e 197px,#fffc09 206px,#ffe503 214px,#ffd600 223px)"></i><i style="height:2px;background:linear-gradient(90deg,#00ff40 91px,#0cff3d 100px,#1eff3a 109px,#2fff36 118px,#42ff33 127px,#55ff2f 136px,#69ff2b 145px,#7eff27 154px,#93ff22 163px,#aaff1e 172px,#c1ff19 181px,#daff14 190px,#f3ff0f 199px,#fff109 208px,#ffda04 217px,#ffcc00 226px)"></i><i style="height:2px;background:linear-gradient(90deg,#00ff42 90px,#0bff40 99px,#1cff3d 107px,#2dff39 116px,#3fff36 125px,#52ff32 133px,#65ff2e 142px,#79ff2a 151px,#8eff26 160px,#a3ff22 168px,#baff1d 177px,#d1ff19 186px,#eaff14 194px,#fffb0f 203px,#ffe309 212px,#ffcf03 220px,#ffc200 229px)"></i><i style="height:2px;background:linear-gradient(90deg,#00ff45 89px,#0bff42 98px,#1dff3f 107px,#2eff3b 116px,#41ff38 125px,#54ff34 134px,#69ff30 143px,#7dff2c 152px,#93ff28 160px,#aaff23 169px,#c1ff1f 178px,#daff1a 187px,#f4ff15 196px,#fff00f 205px,#ffda09 214px,#ffc603 223px,#ffb900 232px)"></i><i style="height:2px;background:linear-gradient(90deg,#00ff47 89px,#0cff45 98px,#1dff41 106px,#2eff3e 115px,#40ff3b 123px,#53ff37 132px,#66ff33 141px,#7aff2f 149px,#8fff2b 158px,#a5ff27 166px,#bcff23 175px,#d3ff1e 183px,#ecff1a 192px,#fff914 201px,#ffe20e 209px,#ffce08 218px,#ffbc03 226px,#ffb100 235px)"></i><i style="height:2px;background:linear-gradient(90deg,#00ff49 88px,#0cff47 97px,#1dff44 106px,#2fff40 114px,#42ff3d 123px,#55ff39 132px,#6aff35 141px,#7fff31 150px,#94ff2d 159px,#abff29 167px,#c3ff24 176px,#dcff20 185px,#f6ff1b 194px,#ffef14 203px,#ffd80e 212px,#ffc508 220px,#ffb403 229px,#ffa800 238px)"></i><i style="height:2px;background:linear-gradient(90deg,#00ff4c 87px,#0bff4a 96px,#1cff47 104px,#2dff43 113px,#40ff40 121px,#52ff3c 130px,#66ff39 138px,#7aff35 147px,#90ff31 155px,#a6ff2d 164px,#bcff29 173px,#d4ff24 181px,#edff1f 190px,#fff71a 198px,#ffe013 207px,#ffcc0d 215px,#ffba08 224px,#ffab03 232px,#ffa100 241px)"></i><i style="height:2px;background:linear-gradient(90deg,#00ff4e 87px,#0dff4c 96px,#1eff49 105px,#31ff45 113px,#44ff42 122px,#57ff3e 131px,#6cff3b 140px,#81ff37 148px,#97ff33 157px,#aeff2e 166px,#c6ff2a 175px,#dfff25 184px,#faff20 192px,#ffea19 201px,#ffd412 210px,#ffc10c 219px,#ffb107 227px,#ffa203 236px,#ff9900 245px)"></i><i style="height:2px;background:linear-gradient(90deg,#00ff51 86px,#0dff4f 95px,#1fff4b 104px,#32ff48 113px,#45ff44 122px,#5aff41 131px,#6fff3d 140px,#85ff39 149px,#9cff35 158px,#b4ff30 167px,#ceff2c 176px,#e8ff27 185px,#fffa21 194px,#ffe119 203px,#ffcc12 212px,#ffb90c 221px,#ffa907 230px,#ff9b03 239px,#ff9200 248px)"></i><i style="height:2px;background:linear-gradient(90deg,#00ff54 85px,#0cff52 94px,#1dff4e 102px,#30ff4b 111px,#43ff48 120px,#57ff44 129px,#6bff40 137px,#81ff3d 146px,#97ff39 155px,#afff34 164px,#c7ff30 172px,#e1ff2b 181px,#fbff27 190px,#ffe91f 199px,#ffd317 207px,#ffc011 216px,#ffaf0c 225px,#ffa107 234px,#ff9403 242px,#ff8b00 251px)"></i><i style="height:2px;background:linear-gradient(90deg,#00ff56 85px,#0dff54 94px,#20ff51 103px,#33ff4d 112px,#46ff4a 121px,#5bff46 129px,#70ff42 138px,#87ff3f 147px,#9eff3a 156px,#b6ff36 165px,#d0ff32 174px,#eaff2d 183px,#fff827 192px,#ffdf1f 201px,#ffca17 210px,#ffb811 218px,#ffa80c 227px,#ff9a07 236px,#ff8d03 245px,#ff8500 254px)"></i><i style="height:2px;background:linear-gradient(90deg,#00ff59 84px,#0cff57 93px,#1eff54 101px,#31ff51 110px,#44ff4d 119px,#58ff4a 127px,#6dff46 136px,#83ff42 145px,#99ff3e 153px,#b1ff3a 162px,#caff36 170px,#e3ff32 179px,#feff2d 188px,#ffe624 196px,#ffd01c 205px,#ffbe16 214px,#ffad10 222px,#ff9f0b 231px,#ff9207 240px,#ff8603 248px,#ff7f00 257px)"></i><i style="height:2px;background:linear-gradient(90deg,#00ff5c 83px,#0cff5a 92px,#1fff57 101px,#32ff53 110px,#46ff50 118px,#5bff4c 127px,#70ff49 136px,#87ff45 145px,#9eff41 154px,#b7ff3d 163px,#d1ff38 172px,#ebff34 180px,#fff72d 189px,#ffde24 198px,#ffc91d 207px,#ffb616 216px,#ffa610 225px,#ff980b 233px,#ff8c07 242px,#ff8003 251px,#ff7900 260px)"></i><i style="height:2px;background:linear-gradient(90deg,#00ff5f 83px,#0eff5c 92px,#21ff59 101px,#35ff56 110px,#49ff52 119px,#5fff4f 128px,#75ff4b 137px,#8dff47 146px,#a5ff43 155px,#beff3f 164px,#d9ff3a 173px,#f5ff35 182px,#ffed2d 191px,#ffd524 200px,#ffc01d 209px,#ffaf16 218px,#ff9f10 227px,#ff920b 236px,#ff8607 245px,#ff7b03 254px,#ff7300 263px)"></i><i style="height:2px;background:linear-gradient(90deg,#00ff61 82px,#0dff5f 91px,#20ff5c 100px,#33ff59 108px,#47ff56 117px,#5cff52 126px,#72ff4f 135px,#89ff4b 143px,#a0ff47 152px,#b9ff43 161px,#d3ff3f 170px,#eeff3a 178px,#fff433 187px,#ffdb2a 196px,#ffc622 205px,#ffb41b 213px,#ffa415 222px,#ff960f 231px,#ff8a0b 240px,#ff7f06 248px,#ff7503 257px,#ff6e00 266px)"></i><i style="height:2px;background:linear-gradient(90deg,#00ff64 81px,#0dff62 90px,#20ff5f 99px,#34ff5c 108px,#49ff58 117px,#5fff55 126px,#76ff51 135px,#8eff4d 144px,#a6ff49 153px,#c0ff45 162px,#dcff41 171px,#f8ff3c 180px,#ffea33 189px,#ffd229 198px,#ffbd21 207px,#ffac1a 216px,#ff9d14 225px,#ff8f0f 234px,#ff830a 243px,#ff7806 252px,#ff6f02 261px,#ff6900 270px)"></i><i style="height:2px;background:linear-gradient(90deg,#00ff67 81px,#0eff65 90px,#21ff62 98px,#34ff5f 107px,#49ff5c 116px,#5eff58 125px,#74ff55 133px,#8cff51 142px,#a4ff4d 151px,#bdff49 160px,#d8ff45 168px,#f3ff41 177px,#ffef38 186px,#ffd72e 194px,#ffc226 203px,#ffb01f 212px,#ffa119 221px,#ff9313 229px,#ff870e 238px,#ff7c0a 247px,#ff7206 256px,#ff6902 264px,#ff6400 273px)"></i><i style="height:2px;background:linear-gradient(90deg,#00ff6a 80px,#0eff68 89px,#21ff65 98px,#35ff62 107px,#4bff5f 116px,#61ff5b 125px,#78ff58 133px,#90ff54 142px,#a9ff50 151px,#c3ff4c 160px,#dfff48 169px,#fbff43 178px,#ffe738 187px,#ffcf2f 196px,#ffbb26 205px,#ffaa1f 214px,#ff9b19 223px,#ff8d13 231px,#ff810e 240px,#ff770a 249px,#ff6d06 258px,#ff6502 267px,#ff5f00 276px)"></i><i style="height:2px;background:linear-gradient(90deg,#00ff6d 79px,#0dff6b 88px,#20ff68 96px,#34ff65 105px,#48ff62 114px,#5eff5f 122px,#74ff5b 131px,#8cff58 140px,#a4ff54 149px,#beff50 157px,#d9ff4c 166px,#f5ff48 175px,#ffed3e 183px,#ffd434 192px,#ffc02b 201px,#ffae24 209px,#ff9f1d 218px,#ff9117 227px,#ff8512 236px,#ff7a0e 244px,#ff7009 253px,#ff6806 262px,#ff6002 270px,#ff5b00 279px)"></i><i style="height:2px;background:linear-gradient(90deg,#00ff70 78px,#0dff6e 87px,#20ff6b 96px,#35ff68 105px,#4aff65 113px,#60ff62 122px,#77ff5e 131px,#90ff5b 140px,#a9ff57 149px,#c4ff53 158px,#e0ff4f 167px,#fdff4b 176px,#ffe53f 184px,#ffcd34 193px,#ffb92c 202px,#ffa824 211px,#ff991d 220px,#ff8b17 229px,#ff8012 238px,#ff750e 247px,#ff6c09 255px,#ff6306 264px,#ff5b02 273px,#fd5600 282px)"></i><i style="height:2px;background:linear-gradient(90deg,#00ff73 78px,#0fff71 87px,#23ff6e 96px,#38ff6b 105px,#4eff68 114px,#65ff65 123px,#7dff61 132px,#96ff5e 141px,#b0ff5a 150px,#ccff56 159px,#e9ff51 168px,#fff74b 177px,#ffdc3e 186px,#ffc534 195px,#ffb22b 204px,#ffa124 213px,#ff931d 222px,#ff8617 231px,#ff7a12 240px,#ff700e 249px,#ff6709 258px,#ff5f06 267px,#fe5702 276px,#fb5100 285px)"></i><i style="height:2px;background:linear-gradient(90deg,#00ff77 77px,#0dff75 86px,#21ff72 95px,#36ff6f 103px,#4cff6c 112px,#62ff69 121px,#7aff65 130px,#92ff62 139px,#acff5e 147px,#c7ff5a 156px,#e3ff56 165px,#fffd51 174px,#ffe145 182px,#ffca3a 191px,#ffb631 200px,#ffa529 209px,#ff9622 218px,#ff891c 226px,#ff7e16 235px,#ff7311 244px,#ff6a0d 253px,#ff6109 262px,#ff5a05 270px,#fb5202 279px,#f84c00 288px)"></i><i style="height:2px;background:linear-gradient(90deg,#00ff7a 76px,#0dff78 85px,#22ff75 94px,#37ff72 103px,#4dff6f 112px,#64ff6c 121px,#7dff69 130px,#96ff65 139px,#b1ff61 148px,#cdff5d 157px,#eaff59 166px,#fff552 175px,#ffda45 184px,#ffc33a 192px,#ffb031 201px,#ff9f29 210px,#ff9122 219px,#ff841c 228px,#ff7916 237px,#ff6e11 246px,#ff650d 255px,#ff5d09 264px,#fe5506 273px,#f94d02 282px,#f54700 291px)"></i><i style="height:2px;background:linear-gradient(90deg,#00ff7d 76px,#0eff7b 85px,#22ff78 93px,#37ff76 102px,#4dff73 111px,#64ff70 120px,#7cff6c 128px,#95ff69 137px,#afff65 146px,#caff62 154px,#e7ff5e 163px,#fff958 172px,#ffde4a 181px,#ffc73f 189px,#ffb335 198px,#ffa22d 207px,#ff9426 216px,#ff8720 224px,#ff7b1a 233px,#ff7115 242px,#ff6810 250px,#ff600c 259px,#ff5809 268px,#fb5005 277px,#f64802 285px,#f24300 294px)"></i><i style="height:2px;background:linear-gradient(90deg,#00ff80 75px,#0eff7f 84px,#23ff7c 93px,#39ff79 102px,#4fff76 111px,#67ff73 120px,#80ff70 129px,#9aff6c 137px,#b5ff69 146px,#d1ff65 155px,#f0ff61 164px,#fff057 173px,#ffd54a 182px,#ffbf3f 191px,#ffac35 200px,#ff9c2d 209px,#ff8d26 218px,#ff811f 227px,#ff761a 236px,#ff6c15 244px,#ff6310 253px,#ff5b0c 262px,#fd5308 271px,#f84a05 280px,#f34302 289px,#f03f00 298px)"></i><i style="height:2px;background:linear-gradient(90deg,#00ff84 74px,#0dff82 83px,#22ff80 91px,#37ff7d 100px,#4dff7a 109px,#64ff77 118px,#7dff74 126px,#96ff71 135px,#b1ff6d 144px,#cdff6a 153px,#ebff66 161px,#fff55e 170px,#ffda50 179px,#ffc344 188px,#ffb03a 196px,#ff9f32 205px,#ff912a 214px,#ff8424 222px,#ff781e 231px,#ff6e18 240px,#ff6514 249px,#ff5d0f 257px,#ff560c 266px,#fa4d08 275px,#f54605 284px,#f03f02 292px,#ed3b00 301px)"></i><i style="height:2px;background:linear-gradient(90deg,#00ff87 74px,#0fff85 83px,#24ff83 92px,#3aff80 101px,#51ff7d 109px,#69ff7a 118px,#82ff77 127px,#9cff74 136px,#b8ff70 145px,#d5ff6d 154px,#f4ff69 162px,#ffec5d 171px,#ffd250 180px,#ffbc44 189px,#ffa93a 198px,#ff9932 207px,#ff8b2a 216px,#ff7e23 224px,#ff731e 233px,#ff6a18 242px,#ff6114 251px,#ff590f 260px,#fd510c 269px,#f84908 277px,#f24205 286px,#ed3b02 295px,#ea3700 304px)"></i><i style="height:2px;background:linear-gradient(90deg,#00ff8b 73px,#0fff89 82px,#25ff87 91px,#3bff84 100px,#53ff81 109px,#6bff7e 118px,#85ff7b 127px,#a0ff78 136px,#bdff74 145px,#dbff70 154px,#fbff6d 163px,#ffe45e 172px,#ffcb50 181px,#ffb644 190px,#ffa33a 199px,#ff9432 208px,#ff862a 217px,#ff7a24 226px,#ff6f1e 235px,#ff6518 244px,#ff5d14 253px,#ff5510 262px,#fb4d0b 271px,#f54508 280px,#f03e05 289px,#eb3702 298px,#e73300 307px)"></i><i style="height:2px;background:linear-gradient(90deg,#00ff8f 72px,#0eff8d 81px,#23ff8a 90px,#39ff88 98px,#51ff85 107px,#69ff82 116px,#82ff7f 125px,#9dff7c 134px,#b9ff79 143px,#d7ff75 151px,#f6ff72 160px,#ffe965 169px,#ffcf56 178px,#ffb94a 187px,#ffa73f 195px,#ff9737 204px,#ff892f 213px,#ff7c28 222px,#ff7222 231px,#ff681c 239px,#ff5f17 248px,#ff5713 257px,#fd4f0f 266px,#f8470b 275px,#f24007 284px,#ed3904 292px,#e83402 301px,#e53000 310px)"></i><i style="height:2px;background:linear-gradient(90deg,#00ff92 72px,#10ff90 81px,#26ff8e 90px,#3dff8b 99px,#54ff89 108px,#6eff86 117px,#88ff83 126px,#a3ff80 134px,#c1ff7c 143px,#dfff79 152px,#fffe75 161px,#ffe064 170px,#ffc756 179px,#ffb24a 188px,#ffa03f 197px,#ff9136 206px,#ff832f 215px,#ff7728 224px,#ff6d22 233px,#ff631c 242px,#ff5b17 251px,#ff5313 259px,#fb4b0f 268px,#f5430b 277px,#f03c07 286px,#eb3604 295px,#e53002 304px,#e22c00 313px)"></i><i style="height:2px;background:linear-gradient(90deg,#00ff96 71px,#0fff94 80px,#24ff92 88px,#3bff90 97px,#53ff8d 106px,#6bff8a 115px,#85ff87 124px,#a0ff84 132px,#bdff81 141px,#dbff7e 150px,#fbff7b 158px,#ffe56b 167px,#ffcb5c 176px,#ffb64f 185px,#ffa444 194px,#ff943b 202px,#ff8633 211px,#ff7a2c 220px,#ff6f26 228px,#ff6520 237px,#ff5d1b 246px,#ff5516 255px,#fd4d12 264px,#f8450e 272px,#f23e0a 281px,#ed3807 290px,#e83204 298px,#e32d02 307px,#df2900 316px)"></i><i style="height:2px;background:linear-gradient(90deg,#00ff9a 70px,#0fff98 79px,#25ff96 88px,#3cff93 97px,#54ff91 106px,#6eff8e 114px,#88ff8b 123px,#a4ff89 132px,#c2ff85 141px,#e1ff82 150px,#fffc7d 159px,#ffde6b 168px,#ffc55c 177px,#ffb04f 186px,#ff9e45 194px,#ff8f3b 203px,#ff8133 212px,#ff752c 221px,#ff6b26 230px,#ff6120 239px,#ff591b 248px,#ff5116 257px,#fb4912 266px,#f5420e 275px,#f03b0a 283px,#ea3407 292px,#e52f04 301px,#e02a02 310px,#dc2600 319px)"></i><i style="height:2px;background:linear-gradient(90deg,#00ff9e 70px,#11ff9c 79px,#27ff9a 88px,#3fff97 97px,#58ff95 106px,#72ff92 115px,#8eff8f 124px,#abff8c 133px,#caff89 142px,#eaff86 151px,#fff37c 160px,#ffd66a 169px,#ffbe5c 178px,#ffa94f 187px,#ff9844 196px,#ff893b 205px,#ff7c33 214px,#ff712c 223px,#ff6626 232px,#ff5d20 241px,#ff551b 250px,#ff4d16 259px,#f94512 268px,#f33e0e 277px,#ed370a 286px,#e83107 295px,#e32c04 304px,#dd2702 313px,#d92300 322px)"></i><i style="height:2px;background:linear-gradient(90deg,#00ffa2 69px,#10ffa0 78px,#26ff9e 87px,#3eff9c 96px,#57ff99 104px,#71ff97 113px,#8cff94 122px,#a9ff91 131px,#c7ff8e 140px,#e7ff8b 149px,#fff683 158px,#ffd870 166px,#ffc061 175px,#ffab54 184px,#ff9a49 193px,#ff8b3f 202px,#ff7e37 211px,#ff7230 220px,#ff6829 229px,#ff5e23 237px,#ff561e 246px,#ff4f19 255px,#fb4715 264px,#f53f10 273px,#ef380d 282px,#ea3209 291px,#e42d06 299px,#df2804 308px,#da2301 317px,#d72100 326px)"></i><i style="height:2px;background:linear-gradient(90deg,#00ffa6 68px,#10ffa4 77px,#27ffa2 86px,#3fffa0 95px,#58ff9e 104px,#73ff9b 113px,#8fff98 122px,#adff96 131px,#ccff93 140px,#edff90 149px,#ffef84 158px,#ffd271 167px,#ffba61 176px,#ffa654 185px,#ff9549 194px,#ff8640 203px,#ff7937 212px,#ff6e30 221px,#ff6429 230px,#ff5b23 239px,#ff531e 248px,#ff4b19 257px,#f94315 266px,#f33c10 275px,#ed350d 284px,#e82f09 293px,#e22a06 302px,#dd2504 311px,#d72101 320px,#d41e00 329px)"></i><i style="height:2px;background:linear-gradient(90deg,#00ffaa 67px,#0fffa9 76px,#25ffa7 85px,#3dffa4 94px,#56ffa2 102px,#71ffa0 111px,#8cff9d 120px,#aaff9b 129px,#c9ff98 138px,#e9ff95 146px,#fff38b 155px,#ffd678 164px,#ffbd68 173px,#ffa95a 182px,#ff984e 191px,#ff8844 200px,#ff7b3c 208px,#ff7034 217px,#ff662d 226px,#ff5c27 235px,#ff5422 244px,#ff4d1d 252px,#fb4518 261px,#f53e13 270px,#f0370f 279px,#ea310c 288px,#e52b09 297px,#df2706 306px,#da2204 314px,#d51e01 323px,#d11c00 332px)"></i><i style="height:2px;background:linear-gradient(90deg,#00ffae 67px,#11ffad 76px,#28ffab 85px,#41ffa9 94px,#5affa6 103px,#76ffa4 112px,#92ffa2 121px,#b1ff9f 130px,#d0ff9d 138px,#f2ff9a 147px,#ffea8a 156px,#ffce77 165px,#ffb667 174px,#ffa25a 183px,#ff924e 192px,#ff8344 201px,#ff763c 210px,#ff6b34 219px,#ff612d 228px,#ff5827 237px,#ff5022 246px,#ff491d 255px,#f94118 264px,#f33a13 272px,#ee330f 281px,#e82e0c 290px,#e22809 299px,#dd2406 308px,#d72004 317px,#d21c01 326px,#ce1900 335px)"></i><i style="height:2px;background:linear-gradient(90deg,#00ffb2 66px,#10ffb1 75px,#27ffaf 84px,#3fffad 92px,#59ffab 101px,#73ffa9 110px,#90ffa7 119px,#aeffa5 127px,#cdffa2 136px,#efff9f 145px,#ffed92 154px,#ffd17e 163px,#ffb96d 171px,#ffa55f 180px,#ff9453 189px,#ff8549 198px,#ff7840 206px,#ff6d38 215px,#ff6331 224px,#ff5a2b 233px,#ff5225 241px,#ff4b20 250px,#fc431b 259px,#f63c16 268px,#f03512 277px,#ea2f0f 285px,#e52a0b 294px,#df2508 303px,#da2106 312px,#d41d03 320px,#cf1901 329px,#cc1700 338px)"></i><i style="height:2px;background:linear-gradient(90deg,#00ffb7 65px,#0fffb6 74px,#27ffb4 83px,#40ffb2 92px,#5affb0 101px,#76ffae 110px,#93ffac 118px,#b2ffa9 127px,#d2ffa7 136px,#f5ffa4 145px,#ffe792 154px,#ffcb7e 163px,#ffb46e 172px,#ffa060 181px,#ff8f54 190px,#ff8149 199px,#ff7440 207px,#ff6938 216px,#ff5f31 225px,#ff562b 234px,#ff4e25 243px,#ff4720 252px,#fa401b 261px,#f43816 270px,#ee3212 279px,#e82c0e 288px,#e3270b 296px,#dd2208 305px,#d71e06 314px,#d21b03 323px,#cd1701 332px,#c91500 341px)"></i><i style="height:2px;background:linear-gradient(90deg,#00ffbb 65px,#12ffba 74px,#2affb8 83px,#44ffb6 92px,#5fffb5 101px,#7bffb3 110px,#99ffb0 119px,#b9ffae 128px,#dbffac 137px,#feffa9 146px,#ffde91 155px,#ffc37e 164px,#ffad6d 173px,#ff9a5f 182px,#ff8a53 191px,#ff7c49 200px,#ff6f40 209px,#ff6538 218px,#ff5b31 227px,#ff532b 236px,#ff4b25 245px,#fe4420 254px,#f83c1b 263px,#f23516 272px,#ec2f12 281px,#e6290e 290px,#e0240b 299px,#da2008 308px,#d51c06 317px,#cf1803 326px,#ca1501 335px,#c61300 344px)"></i><i style="height:2px;background:linear-gradient(90deg,#00ffc0 64px,#10ffbf 73px,#29ffbd 82px,#42ffbb 91px,#5dffba 99px,#79ffb8 108px,#97ffb6 117px,#b6ffb4 126px,#d7ffb2 135px,#fbffaf 144px,#ffe299 152px,#ffc684 161px,#ffaf73 170px,#ff9c65 179px,#ff8c58 188px,#ff7d4e 197px,#ff7145 206px,#ff663c 214px,#ff5d35 223px,#ff542f 232px,#ff4c29 241px,#ff4523 250px,#fb3e1e 259px,#f53719 267px,#ef3015 276px,#e92b11 285px,#e3260e 294px,#dd210b 303px,#d81d08 312px,#d21905 320px,#cc1603 329px,#c71301 338px,#c31100 347px)"></i><i style="height:2px;background:linear-gradient(90deg,#00ffc4 63px,#10ffc3 72px,#29ffc2 81px,#43ffc0 90px,#5fffbf 99px,#7cffbd 108px,#9bffbb 117px,#bbffb9 126px,#deffb7 135px,#fffbb2 144px,#ffda99 153px,#ffbf84 162px,#ffa973 171px,#ff9665 180px,#ff8658 189px,#ff794e 198px,#ff6c44 207px,#ff623c 216px,#ff5835 225px,#ff502e 234px,#ff4828 243px,#ff4123 252px,#f93a1e 261px,#f33319 270px,#ed2d15 279px,#e62811 288px,#e0230d 297px,#db1e0a 306px,#d51a08 315px,#cf1705 324px,#c91403 333px,#c41101 342px,#c10f00 351px)"></i><i style="height:2px;background:linear-gradient(90deg,#00ffc9 63px,#12ffc8 72px,#2affc7 81px,#44ffc5 89px,#60ffc4 98px,#7dffc2 107px,#9bffc1 116px,#bbffbf 125px,#deffbd 134px,#fffcb9 142px,#ffdb9f 151px,#ffc08a 160px,#ffaa78 169px,#ff9769 178px,#ff875d 186px,#ff7952 195px,#ff6d48 204px,#ff6340 213px,#ff5938 222px,#ff5132 231px,#ff492c 239px,#ff4226 248px,#fb3b21 257px,#f5341c 266px,#ef2e17 275px,#e92913 283px,#e32410 292px,#dd1f0d 301px,#d71b0a 310px,#d21807 319px,#cc1405 328px,#c61103 336px,#c10f01 345px,#be0d00 354px)"></i><i style="height:2px;background:linear-gradient(90deg,#00ffce 62px,#11ffcd 71px,#2bffcc 80px,#45ffca 89px,#61ffc9 98px,#7fffc8 107px,#9fffc6 116px,#c0ffc4 125px,#e3ffc3 134px,#fff5ba 142px,#ffd59f 151px,#ffbb8a 160px,#ffa579 169px,#ff936a 178px,#ff835d 187px,#ff7552 196px,#ff6949 205px,#ff5f40 214px,#ff5639 223px,#ff4e32 232px,#ff462c 241px,#ff3f27 250px,#fa3821 259px,#f3311c 268px,#ed2b17 277px,#e72613 285px,#e12110 294px,#db1d0d 303px,#d5190a 312px,#cf1607 321px,#ca1205 330px,#c41003 339px,#bf0d01 348px,#bb0b00 357px)"></i><i style="height:2px;background:linear-gradient(90deg,#00ffd3 61px,#10ffd2 70px,#29ffd1 79px,#44ffd0 87px,#60ffcf 96px,#7dffcd 105px,#9cffcc 114px,#bdffcb 123px,#e0ffc9 131px,#fff9c2 140px,#ffd8a7 149px,#ffbd91 158px,#ffa77f 167px,#ff946f 175px,#ff8562 184px,#ff7757 193px,#ff6b4d 202px,#ff6044 210px,#ff573d 219px,#ff4f36 228px,#ff4730 237px,#ff402a 246px,#fc3a24 254px,#f6331f 263px,#f02d1a 272px,#ea2716 281px,#e42212 290px,#de1e0f 298px,#d81a0c 307px,#d21609 316px,#cd1307 325px,#c71005 334px,#c10e03 342px,#bc0b01 351px,#b80a00 360px)"></i><i style="height:2px;background:linear-gradient(90deg,#00ffd8 61px,#13ffd7 70px,#2cffd6 79px,#48ffd5 88px,#64ffd4 97px,#83ffd3 105px,#a3ffd2 114px,#c5ffd0 123px,#e9ffcf 132px,#ffefc1 141px,#ffd0a6 150px,#ffb690 159px,#ffa17e 168px,#ff8f6f 176px,#ff7f62 185px,#ff7257 194px,#ff664d 203px,#ff5c44 212px,#ff533c 221px,#ff4b36 230px,#ff442f 239px,#ff3d2a 248px,#fb3624 256px,#f5301f 265px,#ee2a1a 274px,#e82516 283px,#e22012 292px,#dc1c0f 301px,#d6180c 310px,#d01409 319px,#ca1107 327px,#c40f05 336px,#bf0c03 345px,#b90a01 354px,#b60800 363px)"></i><i style="height:2px;background:linear-gradient(90deg,#00ffdd 60px,#12ffdd 69px,#2dffdc 78px,#49ffdb 87px,#66ffda 96px,#85ffd9 105px,#a6ffd8 114px,#caffd6 123px,#efffd5 132px,#ffe9c2 141px,#ffcaa7 150px,#ffb191 159px,#ff9c7f 168px,#ff8a6f 177px,#ff7b62 186px,#ff6e57 195px,#ff634d 204px,#ff5944 213px,#ff503d 222px,#ff4836 231px,#ff4130 240px,#ff3a2a 249px,#f93324 258px,#f32d1f 267px,#ed271a 276px,#e72216 285px,#e11e12 294px,#da190f 303px,#d4160c 312px,#ce1209 321px,#c80f07 330px,#c20d05 339px,#bc0a03 348px,#b70801 357px,#b30700 366px)"></i><i style="height:2px;background:linear-gradient(90deg,#00ffe2 59px,#11ffe2 68px,#2bffe1 77px,#47ffe0 86px,#64ffe0 94px,#83ffdf 103px,#a4ffde 112px,#c7ffdd 121px,#ecffdc 130px,#ffecca 139px,#ffccae 148px,#ffb398 156px,#ff9e85 165px,#ff8c75 174px,#ff7d67 183px,#ff6f5c 192px,#ff6452 201px,#ff5a49 210px,#ff5141 218px,#ff493a 227px,#ff4233 236px,#ff3b2d 245px,#fc3528 254px,#f62e22 263px,#f0281d 272px,#ea2319 280px,#e41e15 289px,#dd1a11 298px,#d7170e 307px,#d1130b 316px,#cb1009 325px,#c50d06 334px,#bf0b04 342px,#b90903 351px,#b40701 360px,#b00600 369px)"></i><i style="height:2px;background:linear-gradient(90deg,#00ffe8 59px,#14ffe7 68px,#2fffe7 77px,#4bffe6 86px,#69ffe6 95px,#89ffe5 104px,#abffe4 113px,#cfffe3 122px,#f5ffe2 131px,#ffe3c9 139px,#ffc5ad 148px,#ffac97 157px,#ff9784 166px,#ff8674 175px,#ff7767 184px,#ff6b5b 193px,#ff6051 202px,#ff5648 211px,#ff4d40 220px,#ff4539 229px,#ff3e33 238px,#ff382d 247px,#fb3127 256px,#f42b22 265px,#ee261d 274px,#e82118 283px,#e21c15 292px,#dc1811 300px,#d5140e 309px,#cf110b 318px,#c90e09 327px,#c30c06 336px,#bd0904 345px,#b70703 354px,#b10501 363px,#ad0400 372px)"></i><i style="height:2px;background:linear-gradient(90deg,#00ffed 58px,#13ffed 67px,#2dffed 76px,#4affec 84px,#67ffec 93px,#87ffeb 102px,#a9ffeb 111px,#ccffea 120px,#f3ffe9 128px,#ffe5d1 137px,#ffc7b5 146px,#ffae9e 155px,#ff998a 164px,#ff887a 172px,#ff796c 181px,#ff6c60 190px,#ff6156 199px,#ff574d 208px,#ff4e44 216px,#ff463d 225px,#ff3f37 234px,#ff3931 243px,#fd332b 252px,#f72c25 261px,#f12720 269px,#eb221b 278px,#e51d17 287px,#df1914 296px,#d91510 305px,#d3120d 313px,#cc0f0b 322px,#c60c08 331px,#c00a06 340px,#ba0804 349px,#b40603 357px,#af0401 366px,#ab0300 375px)"></i><i style="height:2px;background:linear-gradient(90deg,#00fff3 57px,#12fff3 66px,#2efff3 75px,#4bfff2 84px,#6afff2 93px,#8afff2 102px,#adfff1 111px,#d2fff1 120px,#fafff0 129px,#ffded1 138px,#ffc0b5 146px,#ffa89d 155px,#ff948a 164px,#ff837a 173px,#ff746c 182px,#ff6860 191px,#ff5d56 200px,#ff534c 209px,#ff4a44 218px,#ff433d 227px,#ff3c36 236px,#ff3630 245px,#fc2f2a 254px,#f62925 263px,#ef2420 272px,#e91f1b 281px,#e31a17 290px,#dd1713 298px,#d71310 307px,#d0100d 316px,#ca0d0a 325px,#c40a08 334px,#be0806 343px,#b80604 352px,#b10402 361px,#ab0301 370px,#a80200 379px)"></i><i style="height:2px;background:linear-gradient(90deg,#00fff9 56px,#11fff9 65px,#2cfff9 74px,#49fff9 82px,#68fff8 91px,#88fff8 100px,#abfff8 109px,#d0fff8 118px,#f7fff8 126px,#ffe1da 135px,#ffc2bd 144px,#ffaaa5 153px,#ff9591 162px,#ff8480 171px,#ff7571 179px,#ff6965 188px,#ff5d5a 197px,#ff5451 206px,#ff4b48 215px,#ff4341 223px,#ff3c3a 232px,#ff3634 241px,#fe302e 250px,#f82a28 259px,#f22523 267px,#ec201e 276px,#e61b1a 285px,#e01716 294px,#da1412 303px,#d4100f 312px,#cd0e0c 320px,#c70b0a 329px,#c10908 338px,#bb0706 347px,#b50504 356px,#af0302 364px,#a90201 373px,#a50100 382px)"></i><i style="height:2px;background:linear-gradient(90deg,#00ffff 56px,#14ffff 65px,#2fffff 74px,#4dffff 82px,#6cffff 91px,#8dffff 100px,#b0ffff 109px,#d6ffff 118px,#feffff 126px,#ffdbdb 135px,#ffbdbe 144px,#ffa5a6 153px,#ff9192 162px,#ff8081 171px,#ff7273 179px,#ff6666 188px,#ff5b5b 197px,#ff5152 206px,#ff4949 215px,#ff4142 223px,#ff3a3b 232px,#ff3435 241px,#fe2f2f 250px,#f82929 259px,#f22324 267px,#ec1e1f 276px,#e61a1a 285px,#e01617 294px,#da1313 303px,#d40f10 312px,#cd0d0d 320px,#c70a0a 329px,#c10808 338px,#bb0606 347px,#b50404 356px,#af0203 364px,#a90101 373px,#a40000 382px)"></i><i style="height:2px;background:linear-gradient(90deg,#00f9ff 55px,#13f9ff 64px,#2ff9ff 73px,#4cf9ff 82px,#6cf8ff 91px,#8df8ff 100px,#b0f8ff 109px,#d6f7ff 118px,#fff7ff 127px,#ffd3da 136px,#ffb6bd 145px,#ff9fa5 154px,#ff8b91 163px,#ff7b80 172px,#ff6d72 181px,#ff6165 190px,#ff565b 199px,#ff4d51 208px,#ff4549 216px,#ff3d41 225px,#ff373a 234px,#ff3134 243px,#fd2b2e 252px,#f62528 261px,#f02023 270px,#ea1b1e 279px,#e4171a 288px,#de1316 297px,#d71012 306px,#d10d0f 315px,#cb0a0c 324px,#c5080a 333px,#be0608 342px,#b80406 351px,#b20204 360px,#ac0102 369px,#a80001 378px)"></i><i style="height:2px;background:linear-gradient(90deg,#00f3ff 54px,#11f3ff 63px,#2cf3ff 72px,#49f2ff 81px,#68f2ff 89px,#88f1ff 98px,#aaf1ff 107px,#cef0ff 116px,#f5f0ff 125px,#ffd5e3 134px,#ffb7c4 143px,#ffa0ab 151px,#ff8c97 160px,#ff7c85 169px,#ff6e77 178px,#ff616a 187px,#ff575f 196px,#ff4d55 205px,#ff454c 214px,#ff3e45 222px,#ff373e 231px,#ff3137 240px,#ff2c32 249px,#f9262b 258px,#f32126 267px,#ed1c21 276px,#e7181c 284px,#e01418 293px,#da1015 302px,#d40d11 311px,#ce0b0e 320px,#c8080c 329px,#c20609 338px,#bc0407 346px,#b60305 355px,#b00104 364px,#ac0003 373px)"></i><i style="height:2px;background:linear-gradient(90deg,#00eeff 54px,#14edff 63px,#2fedff 72px,#4cecff 81px,#6becff 90px,#8bebff 99px,#aeeaff 108px,#d3e9ff 117px,#fae9ff 126px,#ffcadf 135px,#ffaec1 144px,#ff98a8 153px,#ff8594 162px,#ff7583 171px,#ff6875 180px,#ff5c68 189px,#ff525d 198px,#ff4954 207px,#ff414b 216px,#ff3a43 225px,#ff333d 234px,#ff2d36 243px,#fd2830 252px,#f7222a 261px,#f11d25 270px,#ea1920 279px,#e4151b 288px,#de1117 297px,#d80e14 306px,#d20b11 315px,#cb090e 324px,#c5060b 333px,#bf0409 342px,#b90307 351px,#b30105 360px,#af0004 369px)"></i><i style="height:2px;background:linear-gradient(90deg,#00e8ff 53px,#12e8ff 62px,#2de7ff 71px,#49e6ff 80px,#67e6ff 89px,#86e5ff 97px,#a8e4ff 106px,#cbe3ff 115px,#f1e2ff 124px,#ffcce7 133px,#ffb0c8 142px,#ff99af 151px,#ff869a 160px,#ff7689 169px,#ff687a 177px,#ff5c6d 186px,#ff5262 195px,#ff4958 204px,#ff414f 213px,#ff3a47 222px,#ff3440 231px,#ff2e3a 240px,#ff2834 248px,#fa232e 257px,#f31e28 266px,#ed1923 275px,#e7151e 284px,#e1121a 293px,#db0e16 302px,#d50b13 311px,#cf0910 320px,#c9070d 328px,#c3050b 337px,#bd0308 346px,#b70106 355px,#b30005 364px)"></i><i style="height:2px;background:linear-gradient(90deg,#00e3ff 52px,#11e2ff 61px,#2be1ff 70px,#46e1ff 78px,#63e0ff 87px,#82dfff 96px,#a2deff 105px,#c5dcff 114px,#e9dbff 122px,#ffccef 131px,#ffb0cf 140px,#ff99b5 149px,#ff86a0 158px,#ff768e 166px,#ff687e 175px,#ff5c71 184px,#ff5266 193px,#ff495b 202px,#ff4152 210px,#ff3a4a 219px,#ff3343 228px,#ff2e3c 237px,#ff2837 246px,#fc2330 254px,#f61e2b 263px,#f01925 272px,#ea1520 281px,#e3121c 290px,#dd0e18 298px,#d70c15 307px,#d10912 316px,#cb070f 325px,#c6050c 334px,#c0030a 342px,#ba0108 351px,#b60007 360px)"></i><i style="height:2px;background:linear-gradient(90deg,#00deff 52px,#13ddff 61px,#2ddcff 70px,#49dbff 79px,#66daff 88px,#85d9ff 97px,#a5d7ff 105px,#c8d6ff 114px,#edd5ff 123px,#ffc3eb 132px,#ffa8cc 141px,#ff92b3 150px,#ff7f9e 159px,#ff708c 168px,#ff637d 177px,#ff5870 186px,#ff4e64 195px,#ff455a 204px,#ff3d51 212px,#ff3649 221px,#ff3042 230px,#ff2a3c 239px,#ff2536 248px,#fa2030 257px,#f41b2a 266px,#ee1724 275px,#e81320 284px,#e20f1b 293px,#dc0c18 302px,#d60a14 310px,#d00711 319px,#ca050e 328px,#c4030c 337px,#be010a 346px,#ba0008 355px)"></i><i style="height:2px;background:linear-gradient(90deg,#00d8ff 51px,#12d8ff 60px,#2bd6ff 69px,#46d5ff 77px,#62d4ff 86px,#80d3ff 95px,#a0d1ff 104px,#c2d0ff 113px,#e5ceff 122px,#ffc3f3 130px,#ffa8d3 139px,#ff92b9 148px,#ff80a3 157px,#ff7091 166px,#ff6382 175px,#ff5774 183px,#ff4e68 192px,#ff455e 201px,#ff3d55 210px,#ff364d 219px,#ff3045 227px,#ff2a3f 236px,#ff2539 245px,#fc2033 254px,#f61b2d 263px,#f01727 272px,#ea1322 280px,#e40f1e 289px,#de0c1a 298px,#d80a16 307px,#d20713 316px,#cd0510 325px,#c7030d 333px,#c1010b 342px,#bd000a 351px)"></i><i style="height:2px;background:linear-gradient(90deg,#00d3ff 50px,#11d2ff 59px,#2ad1ff 68px,#45d0ff 77px,#62ceff 86px,#80cdff 95px,#a0cbff 104px,#c2caff 113px,#e6c8ff 122px,#ffbcf2 131px,#ffa2d2 140px,#ff8cb8 149px,#ff7aa3 158px,#ff6b90 167px,#ff5e81 176px,#ff5373 185px,#ff4a68 194px,#ff415d 202px,#ff3954 211px,#ff334c 220px,#ff2d45 229px,#ff273e 238px,#ff2238 247px,#fb1d32 256px,#f5182c 265px,#ef1426 274px,#e91122 283px,#e30d1d 292px,#dd0a19 301px,#d70816 310px,#d10512 319px,#cb0310 328px,#c5010d 337px,#c1000b 346px)"></i><i style="height:2px;background:linear-gradient(90deg,#00ceff 50px,#12cdff 59px,#2bccff 68px,#46cbff 77px,#62c9ff 85px,#7fc7ff 94px,#9ec6ff 103px,#bfc4ff 112px,#e2c2ff 121px,#ffbaf7 130px,#ffa0d7 138px,#ff8bbd 147px,#ff79a7 156px,#ff6a94 165px,#ff5e85 174px,#ff5377 183px,#ff496b 192px,#ff4161 200px,#ff3957 209px,#ff324f 218px,#ff2c48 227px,#ff2741 236px,#ff223b 245px,#fd1d35 254px,#f7182f 262px,#f11429 271px,#eb1124 280px,#e50d1f 289px,#df0a1b 298px,#d90818 307px,#d40514 315px,#ce0311 324px,#c8010f 333px,#c5000d 342px)"></i><i style="height:2px;background:linear-gradient(90deg,#00c9ff 49px,#12c8ff 58px,#2bc7ff 67px,#45c5ff 76px,#61c4ff 85px,#7fc2ff 94px,#9ec0ff 103px,#bfbeff 112px,#e2bcff 121px,#ffb4f6 130px,#ff9ad6 139px,#ff85bc 148px,#ff74a6 157px,#ff6694 166px,#ff5984 175px,#ff4e76 184px,#ff456a 193px,#ff3d60 202px,#ff3557 211px,#ff2f4e 220px,#ff2947 229px,#ff2440 238px,#ff1f3a 247px,#fc1a34 256px,#f6162e 265px,#f01228 274px,#ea0e23 283px,#e40b1f 292px,#de081b 301px,#d80617 310px,#d20314 319px,#cc0111 328px,#c8000f 337px)"></i><i style="height:2px;background:linear-gradient(90deg,#00c5ff 48px,#10c4ff 57px,#29c2ff 66px,#43c0ff 75px,#5ebfff 84px,#7bbdff 93px,#99bbff 101px,#b9b9ff 110px,#dbb7ff 119px,#ffb4fe 128px,#ff9add 137px,#ff85c2 146px,#ff74ac 155px,#ff6699 164px,#ff5989 173px,#ff4e7b 182px,#ff456e 190px,#ff3d64 199px,#ff355a 208px,#ff2f52 217px,#ff294a 226px,#ff2443 235px,#ff1f3d 244px,#fe1a37 253px,#f81631 262px,#f2122b 271px,#ec0e26 280px,#e60b21 288px,#e1081d 297px,#db0619 306px,#d50316 315px,#cf0113 324px,#cc0011 333px)"></i><i style="height:2px;background:linear-gradient(90deg,#00c0ff 48px,#12bfff 57px,#2abdff 66px,#43bbff 74px,#5dbaff 83px,#79b8ff 92px,#96b6ff 100px,#b6b3ff 109px,#d6b1ff 118px,#f9afff 127px,#ff99e3 136px,#ff85c8 144px,#ff74b1 153px,#ff659e 162px,#ff598d 170px,#ff4e7f 179px,#ff4573 188px,#ff3d68 197px,#ff355e 206px,#ff2f55 214px,#ff294e 223px,#ff2447 232px,#ff1f40 240px,#ff1a3a 249px,#fb1634 258px,#f5122e 267px,#f00e29 276px,#ea0b24 284px,#e40820 293px,#de061c 302px,#d90318 310px,#d30115 319px,#cf0013 328px)"></i><i style="height:2px;background:linear-gradient(90deg,#00bbff 47px,#11baff 56px,#29b8ff 65px,#43b6ff 74px,#5db4ff 83px,#7ab2ff 92px,#97b0ff 101px,#b7aeff 110px,#d8abff 118px,#fca9ff 127px,#ff93e1 136px,#ff7ec6 145px,#ff6eaf 154px,#ff609c 163px,#ff548c 172px,#ff497d 181px,#ff4071 190px,#ff3866 199px,#ff315d 208px,#ff2b54 217px,#ff254c 226px,#ff2045 235px,#ff1c3f 244px,#ff1739 253px,#f91333 261px,#f40f2d 270px,#ee0c28 279px,#e80923 288px,#e2061f 297px,#dc041b 306px,#d70117 315px,#d30015 324px)"></i><i style="height:2px;background:linear-gradient(90deg,#00b7ff 46px,#10b6ff 55px,#27b4ff 64px,#40b2ff 72px,#5ab0ff 81px,#75aeff 90px,#92abff 99px,#b0a9ff 108px,#d0a7ff 116px,#f2a4ff 125px,#ff93e9 134px,#ff7fcd 143px,#ff6eb6 152px,#ff60a2 160px,#ff5491 169px,#ff4a83 178px,#ff4176 187px,#ff396b 196px,#ff3261 205px,#ff2b58 213px,#ff2650 222px,#ff2049 231px,#ff1c43 240px,#ff183d 249px,#fd1337 257px,#f71031 266px,#f10c2b 275px,#eb0926 284px,#e60622 293px,#e0041e 301px,#da011a 310px,#d60017 319px)"></i><i style="height:2px;background:linear-gradient(90deg,#00b2ff 45px,#0fb1ff 54px,#27afff 63px,#40adff 72px,#5aabff 81px,#76a9ff 90px,#93a6ff 99px,#b2a4ff 108px,#d3a1ff 117px,#f59eff 126px,#ff8ce7 135px,#ff79cb 144px,#ff69b4 153px,#ff5ba0 162px,#ff4f8f 171px,#ff4581 180px,#ff3c74 189px,#ff3569 198px,#ff2e5f 207px,#ff2757 216px,#ff224f 225px,#ff1d48 234px,#ff1841 243px,#ff143b 252px,#fb1035 261px,#f50d2f 270px,#ef092a 279px,#e90625 288px,#e30420 297px,#de011c 306px,#da001a 315px)"></i><i style="height:2px;background:linear-gradient(90deg,#00aeff 45px,#10adff 54px,#28abff 63px,#40a9ff 72px,#59a6ff 80px,#74a4ff 89px,#90a2ff 98px,#ae9fff 107px,#ce9cff 116px,#ef99ff 124px,#ff8ced 133px,#ff78d1 142px,#ff68b9 151px,#ff5ba5 160px,#ff4f94 169px,#ff4586 178px,#ff3c79 186px,#ff356d 195px,#ff2e63 204px,#ff285b 213px,#ff2252 222px,#ff1d4b 230px,#ff1945 239px,#ff143f 248px,#fe1139 257px,#f80d33 266px,#f20a2d 275px,#ed0728 284px,#e70423 292px,#e1021f 301px,#dd001c 310px)"></i><i style="height:2px;background:linear-gradient(90deg,#00aaff 44px,#0fa9ff 53px,#26a6ff 61px,#3ea4ff 70px,#56a2ff 79px,#70a0ff 88px,#8c9dff 96px,#a99aff 105px,#c798ff 114px,#e795ff 123px,#ff8cf5 131px,#ff78d8 140px,#ff68bf 149px,#ff5bab 158px,#ff4f9a 166px,#ff458a 175px,#ff3c7d 184px,#ff3472 192px,#ff2e67 201px,#ff275e 210px,#ff2256 219px,#ff1d4f 227px,#ff1848 236px,#ff1442 245px,#ff113c 254px,#fb0d36 262px,#f50a30 271px,#f0072b 280px,#ea0426 289px,#e50122 297px,#e1001f 306px)"></i><i style="height:2px;background:linear-gradient(90deg,#00a6ff 43px,#0fa4ff 52px,#25a2ff 61px,#3da0ff 70px,#569eff 79px,#719bff 87px,#8c98ff 96px,#aa96ff 105px,#c893ff 114px,#e98fff 123px,#ff86f3 132px,#ff73d6 141px,#ff63be 150px,#ff56a9 159px,#ff4a98 168px,#ff4189 176px,#ff387c 185px,#ff3170 194px,#ff2a66 203px,#ff245d 212px,#ff1f55 221px,#ff1a4d 230px,#ff1547 239px,#ff1141 248px,#ff0e3b 257px,#fa0a35 265px,#f4072f 274px,#ee042a 283px,#e90225 292px,#e50022 301px)"></i><i style="height:2px;background:linear-gradient(90deg,#00a2ff 43px,#10a0ff 52px,#269eff 61px,#3d9cff 69px,#5699ff 78px,#7097ff 87px,#8a94ff 96px,#a791ff 104px,#c58eff 113px,#e48bff 122px,#ff84f9 131px,#ff72db 139px,#ff62c3 148px,#ff55ae 157px,#ff4a9d 166px,#ff408d 174px,#ff3880 183px,#ff3074 192px,#ff2a6a 201px,#ff2461 209px,#ff1e58 218px,#ff1a51 227px,#ff154a 236px,#ff1144 244px,#ff0e3e 253px,#fc0a38 262px,#f70732 271px,#f1042d 279px,#ec0228 288px,#e80025 297px)"></i><i style="height:2px;background:linear-gradient(90deg,#009eff 42px,#0f9cff 51px,#269aff 60px,#3d97ff 69px,#5695ff 78px,#7092ff 87px,#8b8fff 96px,#a88cff 104px,#c689ff 113px,#e686ff 122px,#ff7ef7 131px,#ff6cd9 140px,#ff5dc1 149px,#ff50ac 158px,#ff459b 167px,#ff3c8c 176px,#ff347e 185px,#ff2c73 194px,#ff2668 203px,#ff205f 212px,#ff1b57 221px,#ff164f 230px,#ff1249 238px,#ff0e42 247px,#ff0b3d 256px,#fb0837 265px,#f50531 274px,#f0022c 283px,#ec0028 292px)"></i><i style="height:2px;background:linear-gradient(90deg,#009aff 41px,#0e98ff 50px,#2496ff 59px,#3b93ff 67px,#5391ff 76px,#6c8eff 85px,#878bff 94px,#a288ff 103px,#c085ff 112px,#df82ff 120px,#ff7eff 129px,#ff6ce1 138px,#ff5dc8 147px,#ff50b2 156px,#ff45a0 164px,#ff3c91 173px,#ff3383 182px,#ff2c77 191px,#ff266d 200px,#ff2063 209px,#ff1b5b 217px,#ff1653 226px,#ff124c 235px,#ff0e46 244px,#ff0b40 253px,#fe083a 262px,#f80434 270px,#f3022f 279px,#ef002b 288px)"></i><i style="height:2px;background:linear-gradient(90deg,#0096ff 41px,#1094ff 50px,#2692ff 59px,#3d8fff 68px,#568cff 77px,#6f89ff 86px,#8a86ff 95px,#a683ff 104px,#c480ff 113px,#e37cff 122px,#ff76fa 131px,#ff65dd 140px,#ff57c4 149px,#ff4aaf 158px,#ff409e 166px,#ff378e 175px,#ff2f81 184px,#ff2875 193px,#ff226b 202px,#ff1d61 211px,#ff1859 220px,#ff1351 229px,#ff0f4a 238px,#ff0b44 247px,#ff083e 256px,#fd0539 265px,#f70233 274px,#f3002f 283px)"></i><i style="height:2px;background:linear-gradient(90deg,#0092ff 40px,#0f91ff 49px,#258eff 58px,#3b8bff 67px,#5389ff 75px,#6c86ff 84px,#8683ff 93px,#a17fff 102px,#be7cff 111px,#dc79ff 120px,#fc75ff 129px,#ff65e4 137px,#ff56cb 146px,#ff4ab5 155px,#ff40a3 164px,#ff3793 173px,#ff2f86 182px,#ff287a 190px,#ff226f 199px,#ff1c65 208px,#ff175d 217px,#ff1355 226px,#ff0f4e 235px,#ff0b47 244px,#ff0842 252px,#ff053c 261px,#fa0236 270px,#f60032 279px)"></i><i style="height:2px;background:linear-gradient(90deg,#008fff 39px,#0e8dff 48px,#238aff 56px,#3988ff 65px,#5085ff 74px,#6782ff 83px,#817fff 91px,#9b7cff 100px,#b779ff 109px,#d475ff 117px,#f271ff 126px,#ff66ed 135px,#ff57d3 143px,#ff4bbd 152px,#ff40aa 161px,#ff379a 170px,#ff2f8c 178px,#ff287f 187px,#ff2274 196px,#ff1d6a 204px,#ff1861 213px,#ff1359 222px,#ff0f52 230px,#ff0b4b 239px,#ff0845 248px,#ff0540 257px,#fe023a 265px,#fa0036 274px)"></i><i style="height:2px;background:linear-gradient(90deg,#008bff 39px,#1089ff 48px,#2586ff 57px,#3b84ff 66px,#5381ff 75px,#6b7eff 83px,#847aff 92px,#9f77ff 101px,#bc74ff 110px,#d970ff 119px,#f86cff 128px,#ff5ee7 137px,#ff50ce 146px,#ff45b8 154px,#ff3ba6 163px,#ff3296 172px,#ff2a88 181px,#ff247c 190px,#ff1e71 199px,#ff1967 208px,#ff145f 217px,#ff1057 226px,#ff0c50 234px,#ff0849 243px,#ff0543 252px,#ff023e 261px,#fd003a 270px)"></i><i style="height:2px;background:linear-gradient(90deg,#0087ff 38px,#0e86ff 47px,#2383ff 55px,#3980ff 64px,#4f7dff 73px,#677aff 82px,#8077ff 90px,#9974ff 99px,#b570ff 108px,#d16dff 117px,#ef69ff 125px,#ff5ff0 134px,#ff51d6 143px,#ff45c0 152px,#ff3bad 160px,#ff329c 169px,#ff2b8e 178px,#ff2482 186px,#ff1e76 195px,#ff196c 204px,#ff1463 213px,#ff105b 221px,#ff0c54 230px,#ff084d 239px,#ff0547 248px,#ff0242 256px,#ff003e 265px)"></i><i style="height:2px;background:linear-gradient(90deg,#0084ff 37px,#0e82ff 46px,#237fff 55px,#397cff 64px,#5079ff 73px,#6876ff 82px,#8173ff 91px,#9c6fff 100px,#b76cff 109px,#d568ff 118px,#f364ff 127px,#ff58ec 136px,#ff4bd2 145px,#ff40bc 153px,#ff36a9 162px,#ff2e99 171px,#ff268b 180px,#ff207f 189px,#ff1a74 198px,#ff156a 207px,#ff1061 216px,#ff0c59 225px,#ff0952 234px,#ff054b 243px,#ff0245 252px,#ff0041 261px)"></i><i style="height:2px;background:linear-gradient(90deg,#0080ff 37px,#0f7eff 46px,#237cff 55px,#3979ff 63px,#4f76ff 72px,#6673ff 81px,#7f6fff 90px,#986cff 98px,#b368ff 107px,#cf64ff 116px,#ec60ff 125px,#ff58f3 133px,#ff4bd9 142px,#ff40c3 151px,#ff36b0 160px,#ff2e9f 168px,#ff2691 177px,#ff2084 186px,#ff1a79 195px,#ff156f 203px,#ff1166 212px,#ff0c5d 221px,#ff0956 230px,#ff054f 238px,#ff0249 247px,#ff0045 256px)"></i><i style="height:2px;background:linear-gradient(90deg,#007dff 36px,#0f7bff 45px,#2478ff 54px,#3975ff 63px,#5072ff 72px,#686fff 81px,#806bff 90px,#9a68ff 99px,#b664ff 108px,#d260ff 117px,#f15cff 126px,#ff52ef 135px,#ff45d5 144px,#ff3abe 153px,#ff31ac 162px,#ff299b 171px,#ff228d 180px,#ff1c81 189px,#ff1676 198px,#ff116c 207px,#ff0d63 216px,#ff095b 225px,#ff0553 234px,#ff024d 243px,#ff0048 252px)"></i><i style="height:2px;background:linear-gradient(90deg,#007aff 35px,#0e78ff 44px,#2275ff 53px,#3772ff 62px,#4d6fff 70px,#646cff 79px,#7c68ff 88px,#9565ff 97px,#af61ff 106px,#ca5dff 114px,#e759ff 123px,#ff52f8 132px,#ff45dd 141px,#ff3ac7 150px,#ff31b3 159px,#ff29a2 168px,#ff2294 176px,#ff1c87 185px,#ff167b 194px,#ff1271 203px,#ff0d68 212px,#ff095f 220px,#ff0658 229px,#ff0251 238px,#ff004c 247px)"></i><i style="height:2px;background:linear-gradient(90deg,#0076ff 34px,#0c75ff 43px,#2072ff 51px,#356fff 60px,#4a6cff 69px,#6068ff 78px,#7765ff 86px,#9062ff 95px,#a95eff 104px,#c45aff 112px,#e056ff 121px,#fd52ff 130px,#ff45e5 138px,#ff3ace 147px,#ff31ba 156px,#ff29a8 165px,#ff2299 173px,#ff1c8c 182px,#ff1680 191px,#ff1175 199px,#ff0d6c 208px,#ff0963 217px,#ff055c 226px,#ff0255 234px,#ff0050 243px)"></i><i style="height:2px;background:linear-gradient(90deg,#0073ff 34px,#0e71ff 43px,#226eff 52px,#376bff 61px,#4d68ff 69px,#6364ff 78px,#7b61ff 87px,#935dff 96px,#ad59ff 105px,#c855ff 114px,#e551ff 123px,#ff4cfb 132px,#ff3fe0 140px,#ff35c9 149px,#ff2cb6 158px,#ff24a5 167px,#ff1e96 176px,#ff1889 185px,#ff137d 194px,#ff0e73 203px,#ff0a6a 211px,#ff0661 220px,#ff025a 229px,#ff0054 238px)"></i><i style="height:2px;background:linear-gradient(90deg,#0070ff 33px,#0d6eff 42px,#216bff 50px,#3568ff 59px,#4a65ff 68px,#6062ff 77px,#775eff 85px,#8f5aff 94px,#a857ff 103px,#c253ff 112px,#dd4eff 120px,#fa4aff 129px,#ff3fe8 138px,#ff35d0 147px,#ff2cbc 155px,#ff24ab 164px,#ff1d9b 173px,#ff188e 182px,#ff1282 190px,#ff0e78 199px,#ff096e 208px,#ff0665 217px,#ff025e 225px,#ff0058 234px)"></i><i style="height:2px;background:linear-gradient(90deg,#006dff 32px,#0d6bff 41px,#2168ff 50px,#3565ff 59px,#4a61ff 68px,#615eff 77px,#785aff 86px,#9156ff 95px,#aa53ff 104px,#c54eff 113px,#e14aff 122px,#fe45ff 130px,#ff3ae4 139px,#ff30cd 148px,#ff27b9 157px,#ff20a7 166px,#ff1998 175px,#ff148b 184px,#ff0f7f 193px,#ff0a75 202px,#ff066b 211px,#ff0363 220px,#ff005d 229px)"></i><i style="height:2px;background:linear-gradient(90deg,#006aff 32px,#0e68ff 41px,#2165ff 50px,#3562ff 58px,#4a5eff 67px,#5f5bff 76px,#7657ff 85px,#8e53ff 93px,#a650ff 102px,#c04bff 111px,#db47ff 120px,#f743ff 128px,#ff39eb 137px,#ff2fd3 146px,#ff27bf 155px,#ff1fad 164px,#ff199e 172px,#ff1390 181px,#ff0e84 190px,#ff0a7a 199px,#ff0670 207px,#ff0267 216px,#ff0062 225px)"></i><i style="height:2px;background:linear-gradient(90deg,#0067ff 31px,#0e65ff 40px,#2162ff 49px,#355eff 58px,#4a5bff 67px,#6157ff 76px,#7854ff 85px,#9050ff 94px,#a94cff 103px,#c347ff 112px,#df43ff 121px,#fc3eff 130px,#ff34e6 139px,#ff2acf 148px,#ff22bb 157px,#ff1ba9 166px,#ff159a 175px,#ff108d 184px,#ff0b81 193px,#ff0777 202px,#ff036d 211px,#ff0066 220px)"></i><i style="height:2px;background:linear-gradient(90deg,#0064ff 30px,#0c62ff 39px,#1f5fff 48px,#335cff 57px,#4858ff 65px,#5d55ff 74px,#7351ff 83px,#8b4dff 92px,#a349ff 101px,#bd45ff 110px,#d740ff 119px,#f33cff 127px,#ff33ef 136px,#ff2ad6 145px,#ff22c2 154px,#ff1bb0 163px,#ff15a0 172px,#ff0f93 181px,#ff0b86 189px,#ff067c 198px,#ff0372 207px,#ff006b 216px)"></i><i style="height:2px;background:linear-gradient(90deg,#0061ff 30px,#0d5fff 39px,#205cff 47px,#3359ff 56px,#4655ff 64px,#5b52ff 73px,#714eff 82px,#874aff 90px,#9e46ff 99px,#b742ff 108px,#d03eff 116px,#eb3aff 125px,#ff33f8 133px,#ff2adf 142px,#ff22ca 151px,#ff1bb7 159px,#ff15a7 168px,#ff1099 177px,#ff0b8d 185px,#ff0682 194px,#ff0378 202px,#ff0071 211px)"></i><i style="height:2px;background:linear-gradient(90deg,#005eff 29px,#0d5cff 38px,#2059ff 47px,#3355ff 56px,#4852ff 65px,#5d4eff 74px,#734bff 82px,#8a47ff 91px,#a243ff 100px,#bb3eff 109px,#d53aff 118px,#f135ff 127px,#ff2df1 136px,#ff24d9 145px,#ff1dc4 154px,#ff16b2 162px,#ff10a2 171px,#ff0b95 180px,#ff0788 189px,#ff037d 198px,#ff0076 207px)"></i><i style="height:2px;background:linear-gradient(90deg,#005bff 28px,#0c59ff 37px,#1e56ff 46px,#3153ff 54px,#454fff 63px,#5a4cff 72px,#6f48ff 80px,#8544ff 89px,#9c40ff 98px,#b53cff 107px,#ce38ff 116px,#e833ff 124px,#ff2dfa 133px,#ff24e1 142px,#ff1dcb 150px,#ff16b9 159px,#ff10a9 168px,#ff0b9b 177px,#ff068e 186px,#ff0283 194px,#ff007c 203px)"></i><i style="height:2px;background:linear-gradient(90deg,#0059ff 28px,#0e56ff 37px,#2053ff 46px,#3450ff 55px,#484cff 64px,#5d48ff 73px,#7344ff 82px,#8940ff 91px,#a13cff 100px,#ba38ff 109px,#d433ff 117px,#ef2eff 126px,#ff27f3 135px,#ff1fdb 144px,#ff18c6 153px,#ff11b4 162px,#ff0ca4 171px,#ff0796 180px,#ff038a 189px,#ff0082 198px)"></i><i style="height:2px;background:linear-gradient(90deg,#0056ff 27px,#0d54ff 36px,#1f50ff 45px,#324dff 53px,#454aff 62px,#5946ff 71px,#6e42ff 80px,#843eff 89px,#9b3aff 97px,#b336ff 106px,#cc31ff 115px,#e62dff 124px,#ff27fc 132px,#ff1fe3 141px,#ff17ce 150px,#ff11bb 159px,#ff0cab 168px,#ff079c 176px,#ff0390 185px,#ff0088 194px)"></i><i style="height:2px;background:linear-gradient(90deg,#0053ff 26px,#0c51ff 35px,#1d4eff 43px,#2f4bff 52px,#4247ff 60px,#5544ff 69px,#6a40ff 77px,#7f3cff 86px,#9538ff 95px,#ac34ff 103px,#c330ff 112px,#dc2bff 120px,#f626ff 129px,#ff1fee 138px,#ff18d7 146px,#ff11c4 155px,#ff0cb3 163px,#ff07a4 172px,#ff0397 180px,#ff008f 189px)"></i><i style="height:2px;background:linear-gradient(90deg,#0051ff 26px,#0d4eff 35px,#1f4bff 44px,#3247ff 52px,#4544ff 61px,#5940ff 70px,#6e3cff 79px,#8438ff 88px,#9b34ff 97px,#b230ff 106px,#cb2bff 114px,#e526ff 123px,#ff21ff 132px,#ff19e5 141px,#ff12d0 150px,#ff0cbd 158px,#ff07ad 167px,#ff039e 176px,#ff0096 185px)"></i><i style="height:2px;background:linear-gradient(90deg,#004eff 25px,#0c4cff 34px,#1d49ff 42px,#2f45ff 51px,#4242ff 59px,#553eff 68px,#693aff 77px,#7e36ff 85px,#9432ff 94px,#aa2eff 102px,#c22aff 111px,#da25ff 120px,#f420ff 128px,#ff1af0 137px,#ff13da 146px,#ff0dc6 154px,#ff08b5 163px,#ff03a7 171px,#ff009d 180px)"></i><i style="height:2px;background:linear-gradient(90deg,#004cff 24px,#0c49ff 33px,#1e46ff 42px,#3042ff 51px,#443fff 60px,#583bff 69px,#6c37ff 78px,#8233ff 87px,#982eff 96px,#b02aff 104px,#c825ff 113px,#e220ff 122px,#fd1bff 131px,#ff14e8 140px,#ff0dd2 149px,#ff08bf 158px,#ff03ae 167px,#ff00a5 176px)"></i><i style="height:2px;background:linear-gradient(90deg,#0049ff 23px,#0b47ff 32px,#1c44ff 40px,#2e40ff 49px,#403dff 58px,#5339ff 67px,#6735ff 75px,#7c31ff 84px,#912dff 93px,#a828ff 101px,#bf24ff 110px,#d71fff 119px,#f11aff 127px,#ff14f3 136px,#ff0edd 145px,#ff08c9 154px,#ff03b8 162px,#ff00ad 171px)"></i><i style="height:2px;background:linear-gradient(90deg,#0047ff 23px,#0d44ff 32px,#1e41ff 41px,#313dff 50px,#4439ff 59px,#5835ff 68px,#6c31ff 77px,#822dff 86px,#9829ff 95px,#af24ff 104px,#c71fff 113px,#e11aff 122px,#fb15ff 131px,#ff0ee9 140px,#ff08d3 149px,#ff03c0 158px,#ff00b5 167px)"></i><i style="height:2px;background:linear-gradient(90deg,#0044ff 22px,#0c42ff 31px,#1d3eff 40px,#2e3bff 48px,#4037ff 57px,#5333ff 66px,#6730ff 74px,#7c2bff 83px,#9127ff 92px,#a723ff 101px,#be1eff 110px,#d61aff 118px,#ef15ff 127px,#ff0ff5 136px,#ff09de 144px,#ff03cb 153px,#ff00be 162px)"></i><i style="height:2px;background:linear-gradient(90deg,#0042ff 21px,#0b40ff 30px,#1b3cff 38px,#2c39ff 47px,#3e35ff 55px,#5032ff 64px,#632eff 72px,#772aff 81px,#8b26ff 90px,#a021ff 98px,#b61dff 107px,#cd18ff 115px,#e513ff 124px,#fe0eff 132px,#ff08e8 141px,#ff03d4 149px,#ff00c7 158px)"></i><i style="height:2px;background:linear-gradient(90deg,#003fff 21px,#0c3dff 30px,#1d39ff 39px,#2f36ff 47px,#4132ff 56px,#532eff 65px,#672aff 74px,#7b26ff 83px,#9022ff 91px,#a61dff 100px,#bd19ff 109px,#d514ff 118px,#ed0fff 127px,#ff09f7 135px,#ff04e0 144px,#ff00d1 153px)"></i><i style="height:2px;background:linear-gradient(90deg,#003dff 20px,#0b3bff 29px,#1b37ff 37px,#2c34ff 46px,#3e30ff 54px,#502cff 63px,#6329ff 72px,#7625ff 80px,#8a20ff 89px,#9f1cff 97px,#b518ff 106px,#cc13ff 115px,#e40eff 123px,#fc09ff 132px,#ff03ea 140px,#ff00dc 149px)"></i><i style="height:2px;background:linear-gradient(90deg,#003bff 19px,#0b38ff 28px,#1c35ff 37px,#2d31ff 46px,#3f2dff 55px,#5229ff 64px,#6625ff 73px,#7a21ff 82px,#8f1dff 90px,#a518ff 99px,#bb14ff 108px,#d30fff 117px,#ec09ff 126px,#ff04f9 135px,#ff00e7 144px)"></i><i style="height:2px;background:linear-gradient(90deg,#0038ff 19px,#0c36ff 28px,#1c32ff 36px,#2d2fff 45px,#3e2bff 54px,#5027ff 62px,#6324ff 71px,#761fff 80px,#8a1bff 88px,#9f17ff 97px,#b412ff 105px,#cb0eff 114px,#e209ff 123px,#fa04ff 131px,#ff00f3 140px)"></i><i style="height:2px;background:linear-gradient(90deg,#0036ff 18px,#0c34ff 27px,#1d30ff 36px,#2e2cff 45px,#4029ff 54px,#5225ff 63px,#6620ff 72px,#7a1cff 81px,#8f18ff 90px,#a413ff 99px,#bb0eff 108px,#d209ff 117px,#eb04ff 126px,#fe00ff 135px)"></i><i style="height:2px;background:linear-gradient(90deg,#0034ff 17px,#0b32ff 26px,#1b2eff 35px,#2c2bff 43px,#3d27ff 52px,#4f23ff 61px,#611fff 70px,#751bff 78px,#8916ff 87px,#9d12ff 96px,#b30dff 105px,#c909ff 113px,#e004ff 122px,#f100ff 131px)"></i><i style="height:2px;background:linear-gradient(90deg,#0032ff 17px,#0b2fff 25px,#1b2cff 34px,#2a29ff 42px,#3b25ff 51px,#4c21ff 59px,#5d1dff 67px,#6f1aff 76px,#8215ff 84px,#9511ff 92px,#a90dff 101px,#be08ff 109px,#d404ff 118px,#e400ff 126px)"></i><i style="height:2px;background:linear-gradient(90deg,#0030ff 16px,#0b2dff 25px,#1b2aff 34px,#2c26ff 42px,#3d22ff 51px,#4f1eff 60px,#611aff 69px,#7516ff 78px,#8812ff 87px,#9d0dff 96px,#b208ff 104px,#c803ff 113px,#d800ff 122px)"></i><i style="height:2px;background:linear-gradient(90deg,#002eff 15px,#0a2bff 24px,#1928ff 32px,#2924ff 40px,#3a21ff 49px,#4a1dff 58px,#5c19ff 66px,#6e15ff 74px,#8111ff 83px,#940dff 92px,#a808ff 100px,#bd03ff 108px,#cc00ff 117px)"></i><i style="height:2px;background:linear-gradient(90deg,#002bff 15px,#0c29ff 24px,#1c25ff 33px,#2d21ff 42px,#3e1eff 51px,#4f1aff 60px,#6215ff 68px,#7511ff 77px,#880dff 86px,#9d08ff 95px,#b203ff 104px,#c100ff 113px)"></i><i style="height:2px;background:linear-gradient(90deg,#0029ff 14px,#0b27ff 23px,#1a23ff 31px,#2a20ff 40px,#3a1cff 48px,#4b18ff 57px,#5c15ff 65px,#6e10ff 74px,#800cff 82px,#9308ff 91px,#a703ff 99px,#b600ff 108px)"></i><i style="height:2px;background:linear-gradient(90deg,#0027ff 13px,#0a25ff 21px,#1822ff 30px,#271eff 38px,#371bff 46px,#4717ff 54px,#5713ff 63px,#680fff 71px,#7a0bff 79px,#8c07ff 87px,#9f03ff 96px,#ac00ff 104px)"></i><i style="height:2px;background:linear-gradient(90deg,#0025ff 12px,#0a23ff 21px,#1920ff 29px,#291cff 38px,#3918ff 47px,#4a14ff 56px,#5b10ff 64px,#6d0cff 73px,#8008ff 82px,#9303ff 90px,#a100ff 99px)"></i><i style="height:2px;background:linear-gradient(90deg,#0023ff 12px,#0a21ff 20px,#191eff 29px,#271aff 37px,#3717ff 45px,#4713ff 54px,#570fff 62px,#680bff 70px,#7907ff 78px,#8b03ff 87px,#9800ff 95px)"></i><i style="height:2px;background:linear-gradient(90deg,#0021ff 11px,#0a1fff 20px,#1a1bff 29px,#2918ff 37px,#3914ff 46px,#4a10ff 55px,#5b0cff 64px,#6d08ff 72px,#8003ff 81px,#8e00ff 90px)"></i><i style="height:2px;background:linear-gradient(90deg,#001fff 10px,#091dff 18px,#181aff 27px,#2716ff 35px,#3613ff 44px,#460fff 52px,#560bff 61px,#6707ff 69px,#7903ff 78px,#8500ff 86px)"></i><i style="height:2px;background:linear-gradient(90deg,#001eff 10px,#0b1bff 19px,#1a17ff 28px,#2a14ff 37px,#3a10ff 46px,#4b0cff 54px,#5c08ff 63px,#6e03ff 72px,#7c00ff 81px)"></i><i style="height:2px;background:linear-gradient(90deg,#001cff 9px,#0a19ff 18px,#1816ff 26px,#2712ff 34px,#360fff 43px,#460bff 52px,#5607ff 60px,#6703ff 68px,#7300ff 77px)"></i><i style="height:2px;background:linear-gradient(90deg,#001aff 8px,#0818ff 16px,#1615ff 24px,#2411ff 32px,#320eff 40px,#400aff 48px,#4f07ff 56px,#5f03ff 64px,#6a00ff 72px)"></i><i style="height:2px;background:linear-gradient(90deg,#0018ff 8px,#0a15ff 17px,#1912ff 25px,#280eff 34px,#370bff 42px,#4607ff 51px,#5703ff 59px,#6200ff 68px)"></i><i style="height:2px;background:linear-gradient(90deg,#0016ff 7px,#0914ff 15px,#1611ff 23px,#240dff 31px,#320aff 39px,#4006ff 47px,#4f03ff 55px,#5a00ff 63px)"></i><i style="height:2px;background:linear-gradient(90deg,#0014ff 6px,#0a12ff 15px,#180eff 24px,#270bff 32px,#3707ff 41px,#4703ff 50px,#5200ff 59px)"></i><i style="height:2px;background:linear-gradient(90deg,#0013ff 6px,#0910ff 14px,#160dff 22px,#240aff 30px,#3206ff 38px,#4003ff 46px,#4b00ff 54px)"></i><i style="height:2px;background:linear-gradient(90deg,#0011ff 5px,#0a0eff 14px,#190bff 23px,#2807ff 32px,#3803ff 41px,#4300ff 50px)"></i><i style="height:2px;background:linear-gradient(90deg,#000fff 4px,#090dff 12px,#160aff 20px,#2306ff 29px,#3103ff 37px,#3c00ff 45px)"></i><i style="height:2px;background:linear-gradient(90deg,#000eff 4px,#080bff 11px,#1408ff 19px,#2005ff 26px,#2d02ff 34px,#3500ff 41px)"></i><i style="height:2px;background:linear-gradient(90deg,#000cff 3px,#090aff 11px,#1606ff 20px,#2403ff 28px,#2e00ff 36px)"></i><i style="height:2px;background:linear-gradient(90deg,#000aff 2px,#0708ff 10px,#1305ff 17px,#1f02ff 24px,#2700ff 32px)"></i><i style="height:2px;background:linear-gradient(90deg,#0009ff 2px,#0a06ff 10px,#1703ff 19px,#2100ff 27px)"></i><i style="height:2px;background:linear-gradient(90deg,#0007ff 1px,#0805ff 8px,#1302ff 16px,#1b00ff 23px)"></i><i style="height:2px;background:linear-gradient(90deg,#0005ff 0px,#0a03ff 9px,#1400ff 18px)"></i><i style="height:2px;background:linear-gradient(90deg,#0004ff 0px,#0802ff 7px,#0e00ff 14px)"></i><i style="height:2px;background:linear-gradient(90deg,#0002ff 0px,#0900ff 9px)"></i><i style="height:2px;background:linear-gradient(90deg,#0001ff 0px,#0300ff 5px)"></i></div>
<div style="left:1483px;top:356px;width:17px;height:17px;border:1.8px solid #fff;background:transparent"></div>
<div style="left:1538px;top:353px;width:17px;height:17px;border:1.8px solid #fff;background:transparent"></div>
<div style="left:1594px;top:365px;width:17px;height:17px;border:1.8px solid #fff;background:transparent"></div>
<div style="left:1615px;top:387px;width:17px;height:17px;border:1.8px solid #fff;background:transparent"></div>
<div style="left:1644px;top:407px;width:17px;height:17px;border:1.8px solid #fff;background:transparent"></div>
<div style="left:1510px;top:394px;width:17px;height:17px;border:1.8px solid #fff;background:transparent"></div>
<div style="left:1451px;top:436px;width:17px;height:17px;border:1.8px solid #fff;background:transparent"></div>
<div style="left:1540px;top:438px;width:17px;height:17px;border:1.8px solid #fff;background:transparent"></div>
<div style="left:1556px;top:434px;width:17px;height:17px;border:1.8px solid #fff;background:transparent"></div>
<div style="left:1605px;top:466px;width:17px;height:17px;border:1.8px solid #fff;background:transparent"></div>
<div style="left:1664px;top:463px;width:17px;height:17px;border:1.8px solid #fff;background:transparent"></div>
<div style="left:1407px;top:494px;width:17px;height:17px;border:1.8px solid #fff;background:transparent"></div>
<div style="left:1440px;top:496px;width:17px;height:17px;border:1.8px solid #fff;background:transparent"></div>
<div style="left:1455px;top:504px;width:17px;height:17px;border:1.8px solid #fff;background:transparent"></div>
<div style="left:1536px;top:508px;width:17px;height:17px;border:1.8px solid #fff;background:transparent"></div>
<div style="left:1472px;top:524px;width:17px;height:17px;border:1.8px solid #fff;background:transparent"></div>
<div style="left:1414px;top:543px;width:17px;height:17px;border:1.8px solid #fff;background:transparent"></div>
<div style="left:1396px;top:574px;width:17px;height:17px;border:1.8px solid #fff;background:transparent"></div>
<div style="left:1489px;top:455px;width:17.5px;height:17.5px;border:2.2px solid #000;background:rgba(255,255,255,0.3)"></div>
<div style="left:1493.1px;top:447.3px;width:11px;height:11px;border-radius:50%;background:#fff;border:1.2px solid #000"></div>
<div style="left:1477.6px;top:465.3px;width:11px;height:11px;border-radius:50%;background:#e6e6e6;border:1.2px solid #000"></div>
<div style="left:1470.8px;top:470.8px;width:11px;height:11px;border-radius:50%;background:#d0d0d0;border:1.2px solid #000"></div>
<div style="left:1466.2px;top:476.8px;width:11px;height:11px;border-radius:50%;background:#b8b8b8;border:1.2px solid #000"></div>
<div style="left:1462px;top:483px;width:11px;height:11px;border-radius:50%;background:#a0a0a0;border:1.2px solid #000"></div>
<div style="left:1460.9px;top:497.5px;width:11px;height:11px;border-radius:50%;background:#000;border:1.2px solid #000"></div>
<div style="left:1511.1px;top:465.3px;width:11px;height:11px;border-radius:50%;background:#735244;border:1.2px solid #000"></div>
<div style="left:1501.5px;top:468.3px;width:11px;height:11px;border-radius:50%;background:#c29682;border:1.2px solid #000"></div>
<div style="left:1422.8px;top:514.3px;width:11px;height:11px;border-radius:50%;background:#627a9d;border:1.2px solid #000"></div>
<div style="left:1483.9px;top:433.9px;width:12px;height:12px;border-radius:50%;background:#576c43;border:1.2px solid #000"></div>
<div style="left:1433.1px;top:515.3px;width:11px;height:11px;border-radius:50%;background:#8580b1;border:1.2px solid #000"></div>
<div style="left:1437.9px;top:468.5px;width:11px;height:11px;border-radius:50%;background:#67bdaa;border:1.2px solid #000"></div>
<div style="left:1610.9px;top:419.4px;width:11px;height:11px;border-radius:50%;background:#d67e2c;border:1.2px solid #000"></div>
<div style="left:1402.9px;top:543.4px;width:11px;height:11px;border-radius:50%;background:#4a5aa5;border:1.2px solid #000"></div>
<div style="left:1541.5px;top:487.7px;width:11px;height:11px;border-radius:50%;background:#c15a63;border:1.2px solid #000"></div>
<div style="left:1434px;top:540.5px;width:11px;height:11px;border-radius:50%;background:#5e3c6c;border:1.2px solid #000"></div>
<div style="left:1524px;top:383.4px;width:11px;height:11px;border-radius:50%;background:#9dbc40;border:1.2px solid #000"></div>
<div style="left:1592.6px;top:402.8px;width:11px;height:11px;border-radius:50%;background:#d9a03a;border:1.2px solid #000"></div>
<div style="left:1386.3px;top:568.9px;width:11px;height:11px;border-radius:50%;background:#383d96;border:1.2px solid #000"></div>
<div style="left:1472px;top:399.9px;width:11px;height:11px;border-radius:50%;background:#469449;border:1.2px solid #000"></div>
<div style="left:1601.7px;top:479.7px;width:11px;height:11px;border-radius:50%;background:#af363c;border:1.2px solid #000"></div>
<div style="left:1582.8px;top:382.1px;width:11px;height:11px;border-radius:50%;background:#e7c71f;border:1.2px solid #000"></div>
<div style="left:1486px;top:518.3px;width:11px;height:11px;border-radius:50%;background:#bb5695;border:1.2px solid #000"></div>
<div style="left:1402.9px;top:514.3px;width:11px;height:11px;border-radius:50%;background:#0088a4;border:1.2px solid #000"></div>
<div style="left:1624.7px;top:630px;width:280.5px;height:29.3px;background:#323232"></div>
<span class="t" style="left:1656px;top:636.07px;font-size:20px;line-height:20px;color:#f2f2f2;transform:scaleX(1.011);">RGB Triplet: 0, 133, 163</span>
<div style="left:1708px;top:148px;width:198px;height:162px;background:#333"></div>
<div class="ins" style="left:1711px;top:151px;width:191px;height:156px;background:#0070a0;border:1.5px solid #a0a0a0;overflow:hidden"></div>
<div style="left:1712px;top:152px;width:189px;height:154px;overflow:hidden">
<div class="cg" style="left:0px;top:0px;width:189px;height:154px;clip-path:polygon(-8.8px 721.3px,-9.7px 721.6px,-11.2px 721.8px,-13.3px 721.8px,-16.9px 721.1px,-20.1px 719.4px,-24.3px 716.7px,-30.3px 712.6px,-37.8px 707.1px,-47.7px 700px,-61.2px 690.6px,-77.9px 678.5px,-98.9px 661.6px,-124.3px 636.9px,-158.4px 593.6px,-168.4px 578.9px,-178.8px 562.7px,-190px 544.5px,-201.8px 523.4px,-214.4px 499.8px,-227.7px 473.8px,-241.8px 444.8px,-256.6px 412.3px,-272.6px 376.5px,-289.5px 337.4px,-306.9px 294.7px,-324.3px 247.8px,-341.7px 196.6px,-359.3px 141.2px,-376.8px 82.1px,-394px 19.6px,-411.2px -47.1px,-428.3px -118px,-444.7px -191.3px,-459.6px -265.2px,-473.2px -340.4px,-485.8px -417.5px,-496.7px -494.4px,-505.4px -569.3px,-511.9px -642.5px,-516.5px -714.8px,-518.8px -784.7px,-518.2px -851px,-514.8px -914.2px,-508.8px -974.7px,-500px -1031px,-488.3px -1081.8px,-473.5px -1127.2px,-455.6px -1167.7px,-435.4px -1202.7px,-413.5px -1231.4px,-389.5px -1253px,-363.3px -1268.2px,-335.7px -1278.2px,-307.5px -1284.1px,-278.6px -1285.3px,-248.7px -1281.3px,-218.4px -1274.2px,-188.1px -1265.7px,-157.7px -1255.8px,-127.1px -1243.7px,-96.7px -1230.3px,-66.8px -1216.6px,-37.7px -1202.8px,-9px -1188.3px,19.4px -1173.3px,47.5px -1157.8px,75.3px -1142px,102.8px -1125.7px,130.1px -1108.9px,157.4px -1091.8px,184.6px -1074.2px,211.7px -1056.2px,238.8px -1037.8px,265.7px -1019.2px,292.6px -1000.2px,319.4px -981px,346.1px -961.4px,372.9px -941.7px,399.6px -921.8px,426.3px -901.7px,453px -881.4px,479.7px -860.9px,586.9px -777.7px,693.5px -693.2px,799.4px -608.8px,903.3px -525.3px,1004.2px -444px,1100.9px -366.1px,1191.9px -293px,1274.8px -226px,1346.9px -167.9px,1410.4px -116.9px,1463.1px -74.7px,1505.9px -40.1px,1540px -12.6px,1567.2px 9.2px,1589.1px 26.9px,1607.4px 41.6px,1622.3px 53.7px,1634.3px 63.2px,1643.3px 70.4px,1650.2px 76px,1655.2px 80.1px,1661.2px 85px,1665.4px 88.3px,1669.3px 91.5px)"><i style="height:4px;background:linear-gradient(90deg,#0086a1 0px,#0086a1 24px,#0085a1 47px,#0085a1 71px,#0085a1 94px,#0084a1 118px,#0983a1 142px,#1483a1 165px,#2082a1 189px)"></i><i style="height:4px;background:linear-gradient(90deg,#0085a1 0px,#0084a1 24px,#0084a1 47px,#0083a1 71px,#0083a1 94px,#0082a1 118px,#0a82a1 142px,#1581a1 165px,#2081a1 189px)"></i><i style="height:4px;background:linear-gradient(90deg,#0083a1 0px,#0083a1 24px,#0082a1 47px,#0082a1 71px,#0081a1 94px,#0081a1 118px,#0b80a1 142px,#1580a1 165px,#217fa1 189px)"></i><i style="height:4px;background:linear-gradient(90deg,#0082a1 0px,#0081a1 24px,#0081a1 47px,#0080a1 71px,#0080a1 94px,#017fa1 118px,#0b7ea1 142px,#167ea1 165px,#217da1 189px)"></i><i style="height:4px;background:linear-gradient(90deg,#0080a1 0px,#0080a1 24px,#007fa1 47px,#007fa1 71px,#007ea1 94px,#017da1 118px,#0c7da1 142px,#167ca1 165px,#217ca1 189px)"></i><i style="height:4px;background:linear-gradient(90deg,#007fa1 0px,#007ea1 24px,#007ea1 47px,#007da1 71px,#007da1 94px,#027ca1 118px,#0c7ba1 142px,#177ba1 165px,#227aa1 189px)"></i><i style="height:4px;background:linear-gradient(90deg,#007da1 0px,#007da1 24px,#007ca1 47px,#007ca1 71px,#007ba1 94px,#027aa1 118px,#0d7aa1 142px,#1779a1 165px,#2278a1 189px)"></i><i style="height:4px;background:linear-gradient(90deg,#007ca1 0px,#007ba1 24px,#007ba1 47px,#007aa1 71px,#0079a1 94px,#0379a1 118px,#0d78a1 142px,#1877a1 165px,#2377a1 189px)"></i><i style="height:4px;background:linear-gradient(90deg,#007aa1 0px,#007aa1 24px,#0079a1 47px,#0079a1 71px,#0078a1 94px,#0477a1 118px,#0e76a1 142px,#1876a1 165px,#2375a1 189px)"></i><i style="height:4px;background:linear-gradient(90deg,#0079a1 0px,#0078a1 24px,#0078a1 47px,#0077a1 71px,#0076a1 94px,#0476a1 118px,#0e75a1 142px,#1974a1 165px,#2473a1 189px)"></i><i style="height:4px;background:linear-gradient(90deg,#0078a1 0px,#0077a1 24px,#0076a1 47px,#0076a1 71px,#0075a1 94px,#0574a1 118px,#0f73a1 142px,#1973a1 165px,#2472a1 189px)"></i><i style="height:4px;background:linear-gradient(90deg,#0076a1 0px,#0076a1 24px,#0075a1 47px,#0074a1 71px,#0073a1 94px,#0573a1 118px,#0f72a1 142px,#1a71a1 165px,#2570a1 189px)"></i><i style="height:4px;background:linear-gradient(90deg,#0075a1 0px,#0074a1 24px,#0073a1 47px,#0073a1 71px,#0072a1 94px,#0671a1 118px,#1070a1 142px,#1a6fa1 165px,#256fa1 189px)"></i><i style="height:4px;background:linear-gradient(90deg,#0073a1 0px,#0073a1 24px,#0072a1 47px,#0071a1 71px,#0070a1 94px,#0670a1 118px,#106fa1 142px,#1b6ea1 165px,#256da1 189px)"></i><i style="height:4px;background:linear-gradient(90deg,#0072a1 0px,#0071a1 24px,#0071a1 47px,#0070a1 71px,#006fa1 94px,#076ea1 118px,#116da1 142px,#1b6ca1 165px,#266ba1 189px)"></i><i style="height:4px;background:linear-gradient(90deg,#0071a1 0px,#0070a1 24px,#006fa1 47px,#006ea1 71px,#006ea1 94px,#076da1 118px,#116ca1 142px,#1c6ba1 165px,#266aa1 189px)"></i><i style="height:4px;background:linear-gradient(90deg,#006fa1 0px,#006fa1 24px,#006ea1 47px,#006da1 71px,#006ca1 94px,#086ba1 118px,#126aa1 142px,#1c69a1 165px,#2768a1 189px)"></i><i style="height:4px;background:linear-gradient(90deg,#006ea1 0px,#006da1 24px,#006ca1 47px,#006ca1 71px,#006ba1 94px,#086aa1 118px,#1269a1 142px,#1d68a1 165px,#2767a1 189px)"></i><i style="height:4px;background:linear-gradient(90deg,#006da1 0px,#006ca1 24px,#006ba1 47px,#006aa1 71px,#0069a1 94px,#0968a1 118px,#1367a1 142px,#1d66a1 165px,#2865a1 189px)"></i><i style="height:4px;background:linear-gradient(90deg,#006ba1 0px,#006aa1 24px,#006aa1 47px,#0069a1 71px,#0068a1 94px,#0a67a1 118px,#1366a1 142px,#1d65a1 165px,#2864a1 189px)"></i><i style="height:4px;background:linear-gradient(90deg,#006aa1 0px,#0069a1 24px,#0068a1 47px,#0067a1 71px,#0166a1 94px,#0a66a1 118px,#1465a1 142px,#1e64a1 165px,#2863a1 189px)"></i><i style="height:4px;background:linear-gradient(90deg,#0069a1 0px,#0068a1 24px,#0067a1 47px,#0066a1 71px,#0165a1 94px,#0b64a1 118px,#1463a1 142px,#1e62a1 165px,#2961a1 189px)"></i><i style="height:4px;background:linear-gradient(90deg,#0067a1 0px,#0067a1 24px,#0066a1 47px,#0065a1 71px,#0264a1 94px,#0b63a1 118px,#1562a1 142px,#1f61a1 165px,#2960a1 189px)"></i><i style="height:4px;background:linear-gradient(90deg,#0066a1 0px,#0065a1 24px,#0064a1 47px,#0063a1 71px,#0262a1 94px,#0c61a1 118px,#1560a1 142px,#1f5fa1 165px,#2a5ea1 189px)"></i><i style="height:4px;background:linear-gradient(90deg,#0065a1 0px,#0064a1 24px,#0063a1 47px,#0062a1 71px,#0361a1 94px,#0c60a1 118px,#165fa1 142px,#205ea1 165px,#2a5da1 189px)"></i><i style="height:4px;background:linear-gradient(90deg,#0064a1 0px,#0063a1 24px,#0062a1 47px,#0061a1 71px,#0360a1 94px,#0d5fa1 118px,#165ea1 142px,#205da1 165px,#2a5ba1 189px)"></i><i style="height:4px;background:linear-gradient(90deg,#0062a1 0px,#0061a1 24px,#0060a1 47px,#005fa1 71px,#045ea1 94px,#0d5da1 118px,#175ca1 142px,#205ba1 165px,#2b5aa1 189px)"></i><i style="height:4px;background:linear-gradient(90deg,#0061a1 0px,#0060a1 24px,#005fa1 47px,#005ea1 71px,#045da1 94px,#0e5ca1 118px,#175ba1 142px,#215aa1 165px,#2b59a1 189px)"></i><i style="height:4px;background:linear-gradient(90deg,#0060a1 0px,#005fa1 24px,#005ea1 47px,#005da1 71px,#055ca1 94px,#0e5ba1 118px,#185aa1 142px,#2158a1 165px,#2b57a1 189px)"></i><i style="height:4px;background:linear-gradient(90deg,#005fa1 0px,#005ea1 24px,#005da1 47px,#005ca1 71px,#055ba1 94px,#0e59a1 118px,#1858a1 142px,#2257a1 165px,#2c56a1 189px)"></i><i style="height:4px;background:linear-gradient(90deg,#005da1 0px,#005ca1 24px,#005ba1 47px,#005aa1 71px,#0659a1 94px,#0f58a1 118px,#1857a1 142px,#2256a1 165px,#2c55a1 189px)"></i><i style="height:4px;background:linear-gradient(90deg,#005ca1 0px,#005ba1 24px,#005aa1 47px,#0059a1 71px,#0658a1 94px,#0f57a1 118px,#1956a1 142px,#2355a1 165px,#2d53a1 189px)"></i><i style="height:4px;background:linear-gradient(90deg,#005ba1 0px,#005aa1 24px,#0059a1 47px,#0058a1 71px,#0757a1 94px,#1056a1 118px,#1954a1 142px,#2353a1 165px,#2d52a1 189px)"></i><i style="height:4px;background:linear-gradient(90deg,#005aa1 0px,#0059a1 24px,#0058a1 47px,#0057a1 71px,#0755a1 94px,#1054a1 118px,#1a53a1 142px,#2352a1 165px,#2d51a1 189px)"></i><i style="height:4px;background:linear-gradient(90deg,#0059a1 0px,#0058a1 24px,#0056a1 47px,#0055a1 71px,#0854a1 94px,#1153a1 118px,#1a52a1 142px,#2451a1 165px,#2e4fa1 189px)"></i><i style="height:4px;background:linear-gradient(90deg,#0057a1 0px,#0056a1 24px,#0055a1 47px,#0054a1 71px,#0853a1 94px,#1152a1 118px,#1b51a1 142px,#244fa1 165px,#2e4ea1 189px)"></i><i style="height:4px;background:linear-gradient(90deg,#0056a1 0px,#0055a1 24px,#0054a1 47px,#0053a1 71px,#0952a1 94px,#1251a1 118px,#1b4fa1 142px,#254ea1 165px,#2e4da1 189px)"></i><i style="height:4px;background:linear-gradient(90deg,#0055a1 0px,#0054a1 24px,#0053a1 47px,#0052a1 71px,#0951a1 94px,#124fa1 118px,#1b4ea1 142px,#254da1 165px,#2f4ca1 189px)"></i><i style="height:2px;background:linear-gradient(90deg,#0054a1 0px,#0053a1 24px,#0052a1 47px,#0151a1 71px,#0a50a1 94px,#124ea1 118px,#1c4da1 142px,#254ca1 165px,#2f4ba1 189px)"></i></div>
<div class="cg" style="left:0px;top:0px;width:189px;height:154px;clip-path:polygon(1385.8px -65.1px,368.1px -718.4px,-80.9px 588.3px)"><i style="height:4px;background:linear-gradient(90deg,#00d1ff 118px,#0fd1ff 142px,#20d0ff 165px,#32cfff 189px)"></i><i style="height:4px;background:linear-gradient(90deg,#00cfff 117px,#0fceff 141px,#21cdff 165px,#33ccff 189px)"></i><i style="height:4px;background:linear-gradient(90deg,#00ccff 115px,#0bccff 134px,#18cbff 152px,#26caff 170px,#34c9ff 189px)"></i><i style="height:4px;background:linear-gradient(90deg,#00caff 114px,#0bc9ff 133px,#19c8ff 152px,#26c8ff 170px,#34c7ff 189px)"></i><i style="height:4px;background:linear-gradient(90deg,#00c7ff 113px,#0cc7ff 132px,#19c6ff 151px,#27c5ff 170px,#35c4ff 189px)"></i><i style="height:4px;background:linear-gradient(90deg,#00c5ff 111px,#0cc4ff 130px,#19c3ff 150px,#27c2ff 170px,#36c1ff 189px)"></i><i style="height:4px;background:linear-gradient(90deg,#00c2ff 110px,#0cc2ff 130px,#1ac1ff 150px,#28c0ff 169px,#37bfff 189px)"></i><i style="height:4px;background:linear-gradient(90deg,#00c0ff 108px,#0cbfff 128px,#1abeff 148px,#28bdff 169px,#37bcff 189px)"></i><i style="height:4px;background:linear-gradient(90deg,#00beff 107px,#0cbdff 128px,#1abcff 148px,#29bbff 168px,#38baff 189px)"></i><i style="height:4px;background:linear-gradient(90deg,#00bbff 106px,#0cbaff 127px,#1bb9ff 148px,#29b8ff 168px,#39b7ff 189px)"></i><i style="height:4px;background:linear-gradient(90deg,#00b9ff 104px,#0cb8ff 125px,#1bb7ff 146px,#2ab6ff 168px,#39b5ff 189px)"></i><i style="height:4px;background:linear-gradient(90deg,#00b7ff 103px,#0db6ff 124px,#1bb4ff 146px,#2ab3ff 168px,#3ab2ff 189px)"></i><i style="height:4px;background:linear-gradient(90deg,#00b4ff 102px,#0db3ff 124px,#1cb2ff 146px,#2bb1ff 167px,#3bb0ff 189px)"></i><i style="height:4px;background:linear-gradient(90deg,#00b2ff 100px,#0db1ff 122px,#1cb0ff 144px,#2baeff 167px,#3badff 189px)"></i><i style="height:4px;background:linear-gradient(90deg,#00b0ff 99px,#0dafff 122px,#1cadff 144px,#2cacff 166px,#3cabff 189px)"></i><i style="height:4px;background:linear-gradient(90deg,#00aeff 97px,#0dacff 120px,#1cabff 143px,#2caaff 166px,#3da8ff 189px)"></i><i style="height:4px;background:linear-gradient(90deg,#00abff 96px,#0daaff 119px,#1da9ff 142px,#2da7ff 166px,#3da6ff 189px)"></i><i style="height:4px;background:linear-gradient(90deg,#00a9ff 95px,#0ea8ff 118px,#1da6ff 142px,#2da5ff 166px,#3ea3ff 189px)"></i><i style="height:4px;background:linear-gradient(90deg,#00a7ff 93px,#0ea6ff 117px,#1da4ff 141px,#2ea3ff 165px,#3fa1ff 189px)"></i><i style="height:4px;background:linear-gradient(90deg,#00a5ff 92px,#0ba4ff 111px,#17a3ff 131px,#24a1ff 150px,#32a0ff 170px,#3f9fff 189px)"></i><i style="height:4px;background:linear-gradient(90deg,#00a3ff 91px,#0ba2ff 111px,#18a0ff 130px,#259fff 150px,#329eff 169px,#409cff 189px)"></i><i style="height:4px;background:linear-gradient(90deg,#00a1ff 89px,#0ba0ff 109px,#189eff 129px,#259dff 149px,#339cff 169px,#419aff 189px)"></i><i style="height:4px;background:linear-gradient(90deg,#009fff 88px,#0b9dff 108px,#189cff 128px,#269bff 149px,#3399ff 169px,#4198ff 189px)"></i><i style="height:4px;background:linear-gradient(90deg,#009dff 86px,#0b9bff 107px,#189aff 127px,#2699ff 148px,#3497ff 168px,#4296ff 189px)"></i><i style="height:4px;background:linear-gradient(90deg,#009bff 85px,#0b99ff 106px,#1998ff 127px,#2696ff 147px,#3495ff 168px,#4393ff 189px)"></i><i style="height:4px;background:linear-gradient(90deg,#0099ff 84px,#0c97ff 105px,#1996ff 126px,#2794ff 147px,#3593ff 168px,#4391ff 189px)"></i><i style="height:4px;background:linear-gradient(90deg,#0097ff 82px,#0b95ff 103px,#1994ff 125px,#2792ff 146px,#3591ff 168px,#448fff 189px)"></i><i style="height:4px;background:linear-gradient(90deg,#0095ff 81px,#0c93ff 103px,#1992ff 124px,#2790ff 146px,#368eff 167px,#448dff 189px)"></i><i style="height:4px;background:linear-gradient(90deg,#0093ff 80px,#0c91ff 102px,#1a90ff 124px,#288eff 145px,#368cff 167px,#458bff 189px)"></i><i style="height:4px;background:linear-gradient(90deg,#0091ff 78px,#0c8fff 100px,#1a8eff 122px,#288cff 145px,#368aff 167px,#4688ff 189px)"></i><i style="height:4px;background:linear-gradient(90deg,#008fff 77px,#0c8dff 99px,#1a8cff 122px,#288aff 144px,#3788ff 167px,#4686ff 189px)"></i><i style="height:4px;background:linear-gradient(90deg,#008dff 75px,#0c8bff 98px,#1a8aff 121px,#2888ff 143px,#3786ff 166px,#4784ff 189px)"></i><i style="height:4px;background:linear-gradient(90deg,#008bff 74px,#0c89ff 97px,#1a88ff 120px,#2986ff 143px,#3884ff 166px,#4782ff 189px)"></i><i style="height:4px;background:linear-gradient(90deg,#0089ff 73px,#0d88ff 96px,#1b86ff 119px,#2984ff 143px,#3882ff 166px,#4880ff 189px)"></i><i style="height:4px;background:linear-gradient(90deg,#0087ff 71px,#0c86ff 95px,#1b84ff 118px,#2982ff 142px,#3980ff 165px,#487eff 189px)"></i><i style="height:4px;background:linear-gradient(90deg,#0085ff 70px,#0d84ff 94px,#1b82ff 118px,#2a80ff 141px,#397eff 165px,#497cff 189px)"></i><i style="height:4px;background:linear-gradient(90deg,#0084ff 69px,#0d82ff 93px,#1b80ff 117px,#2a7eff 141px,#3a7cff 165px,#4a7aff 189px)"></i><i style="height:4px;background:linear-gradient(90deg,#0082ff 67px,#0a81ff 87px,#167fff 108px,#237dff 128px,#307cff 148px,#3d7aff 169px,#4a78ff 189px)"></i><i style="height:2px;background:linear-gradient(90deg,#0081ff 66px,#0a7fff 86px,#177dff 107px,#237cff 128px,#307aff 148px,#3d78ff 168px,#4b76ff 189px)"></i></div>
<div style="left:86px;top:67.5px;width:17px;height:17px;border:1.8px solid #fff"></div>
</div>
<div style="left:1769px;top:289.5px;width:11px;height:11px;border-radius:50%;background:#0088a4;border:1.2px solid #000"></div>
<div style="left:1845px;top:292.3px;width:11px;height:11px;border-radius:50%;background:#627a9d;border:1.2px solid #000"></div>
<div style="left:1885.7px;top:298.7px;width:11px;height:11px;border-radius:50%;background:#8580b1;border:1.2px solid #000"></div>
<div style="left:532px;top:728px;width:17px;height:30px;background:#000"></div>
<div style="left:549px;top:728px;width:1368px;height:30px;background:linear-gradient(#343434 0%,#2e2e2e 49%,#1a1a1a 50%,#050505 100%)"></div>
<div style="left:549px;top:728px;width:1368px;height:227px;overflow:hidden">
<span class="t" style="left:141.6px;top:9.16px;font-size:14.7px;line-height:14.7px;color:#fff;transform:scaleX(1.277);">White</span>
<span class="t" style="left:212px;top:9.16px;font-size:14.7px;line-height:14.7px;color:#fff;transform:scaleX(1.191);">Gray 80</span>
<span class="t" style="left:284.8px;top:9.16px;font-size:14.7px;line-height:14.7px;color:#fff;transform:scaleX(1.199);">Gray 65</span>
<span class="t" style="left:357.8px;top:9.16px;font-size:14.7px;line-height:14.7px;color:#fff;transform:scaleX(1.199);">Gray 50</span>
<span class="t" style="left:430.8px;top:9.16px;font-size:14.7px;line-height:14.7px;color:#fff;transform:scaleX(1.191);">Gray 35</span>
<span class="t" style="left:503.6px;top:9.16px;font-size:14.7px;line-height:14.7px;color:#fff;transform:scaleX(1.182);">Black</span>
<span class="t" style="left:557.1px;top:9.16px;font-size:14.7px;line-height:14.7px;color:#fff;transform:scaleX(1.188);">Dark Skin</span>
<span class="t" style="left:644px;top:9.16px;font-size:14.7px;line-height:14.7px;color:#fff;transform:scaleX(1.193);">Light Skin</span>
<span class="t" style="left:731.8px;top:9.16px;font-size:14.7px;line-height:14.7px;color:#fff;transform:scaleX(1.172);">Blue Sky</span>
<span class="t" style="left:810.2px;top:9.16px;font-size:14.7px;line-height:14.7px;color:#fff;transform:scaleX(1.199);">Foliage</span>
<span class="t" style="left:878.7px;top:9.16px;font-size:14.7px;line-height:14.7px;color:#fff;transform:scaleX(1.237);">Blue Flower</span>
<span class="t" style="left:985.3px;top:9.16px;font-size:14.7px;line-height:14.7px;color:#fff;transform:scaleX(1.218);">Bluish Green</span>
<span class="t" style="left:1099.5px;top:9.16px;font-size:14.7px;line-height:14.7px;color:#fff;transform:scaleX(1.203);">Orange</span>
<span class="t" style="left:1169px;top:9.16px;font-size:14.7px;line-height:14.7px;color:#fff;transform:scaleX(1.235);">Purplish Blue</span>
<span class="t" style="left:1286.8px;top:9.16px;font-size:14.7px;line-height:14.7px;color:#fff;transform:scaleX(1.299);">Moderate Red</span>
<div style="left:0px;top:29.8px;width:1368px;height:28.33px;background:#404040"></div>
<span class="t" style="left:5.2px;top:37.18px;font-size:16.8px;line-height:16.8px;color:#fff;transform:scaleX(1.055);">x: CIE31</span>
<span class="t" style="left:141.8px;top:37.18px;font-size:16.8px;line-height:16.8px;color:#fff;transform:scaleX(1.130);">0,31</span>
<span class="t" style="left:212.2px;top:37.18px;font-size:16.8px;line-height:16.8px;color:#fff;transform:scaleX(1.130);">0,29</span>
<span class="t" style="left:285px;top:37.18px;font-size:16.8px;line-height:16.8px;color:#fff;transform:scaleX(1.130);">0,29</span>
<span class="t" style="left:358px;top:37.18px;font-size:16.8px;line-height:16.8px;color:#fff;transform:scaleX(1.130);">0,28</span>
<span class="t" style="left:431px;top:37.18px;font-size:16.8px;line-height:16.8px;color:#fff;transform:scaleX(1.130);">0,27</span>
<span class="t" style="left:503.8px;top:37.18px;font-size:16.8px;line-height:16.8px;color:#fff;transform:scaleX(1.130);">0,27</span>
<span class="t" style="left:557.3px;top:37.18px;font-size:16.8px;line-height:16.8px;color:#fff;transform:scaleX(1.130);">0,34</span>
<span class="t" style="left:644.2px;top:37.18px;font-size:16.8px;line-height:16.8px;color:#fff;transform:scaleX(1.130);">0,33</span>
<span class="t" style="left:732px;top:37.18px;font-size:16.8px;line-height:16.8px;color:#fff;transform:scaleX(1.130);">0,22</span>
<span class="t" style="left:810.4px;top:37.18px;font-size:16.8px;line-height:16.8px;color:#fff;transform:scaleX(1.130);">0,30</span>
<span class="t" style="left:878.9px;top:37.18px;font-size:16.8px;line-height:16.8px;color:#fff;transform:scaleX(1.130);">0,24</span>
<span class="t" style="left:985.5px;top:37.18px;font-size:16.8px;line-height:16.8px;color:#fff;transform:scaleX(1.130);">0,24</span>
<span class="t" style="left:1099.7px;top:37.18px;font-size:16.8px;line-height:16.8px;color:#fff;transform:scaleX(1.130);">0,47</span>
<span class="t" style="left:1169.2px;top:37.18px;font-size:16.8px;line-height:16.8px;color:#fff;transform:scaleX(1.130);">0,20</span>
<span class="t" style="left:1287px;top:37.18px;font-size:16.8px;line-height:16.8px;color:#fff;transform:scaleX(1.130);">0,38</span>
<div style="left:0px;top:57.93px;width:1368px;height:28.33px;background:#828282"></div>
<span class="t" style="left:5.2px;top:65.31px;font-size:16.8px;line-height:16.8px;color:#fafafa;transform:scaleX(1.055);">y: CIE31</span>
<span class="t" style="left:141.8px;top:65.31px;font-size:16.8px;line-height:16.8px;color:#fafafa;transform:scaleX(1.130);">0,35</span>
<span class="t" style="left:212.2px;top:65.31px;font-size:16.8px;line-height:16.8px;color:#fafafa;transform:scaleX(1.130);">0,32</span>
<span class="t" style="left:285px;top:65.31px;font-size:16.8px;line-height:16.8px;color:#fafafa;transform:scaleX(1.130);">0,31</span>
<span class="t" style="left:358px;top:65.31px;font-size:16.8px;line-height:16.8px;color:#fafafa;transform:scaleX(1.130);">0,30</span>
<span class="t" style="left:431px;top:65.31px;font-size:16.8px;line-height:16.8px;color:#fafafa;transform:scaleX(1.130);">0,29</span>
<span class="t" style="left:503.8px;top:65.31px;font-size:16.8px;line-height:16.8px;color:#fafafa;transform:scaleX(1.130);">0,27</span>
<span class="t" style="left:557.3px;top:65.31px;font-size:16.8px;line-height:16.8px;color:#fafafa;transform:scaleX(1.130);">0,32</span>
<span class="t" style="left:644.2px;top:65.31px;font-size:16.8px;line-height:16.8px;color:#fafafa;transform:scaleX(1.130);">0,32</span>
<span class="t" style="left:732px;top:65.31px;font-size:16.8px;line-height:16.8px;color:#fafafa;transform:scaleX(1.130);">0,24</span>
<span class="t" style="left:810.4px;top:65.31px;font-size:16.8px;line-height:16.8px;color:#fafafa;transform:scaleX(1.130);">0,37</span>
<span class="t" style="left:878.9px;top:65.31px;font-size:16.8px;line-height:16.8px;color:#fafafa;transform:scaleX(1.130);">0,24</span>
<span class="t" style="left:985.5px;top:65.31px;font-size:16.8px;line-height:16.8px;color:#fafafa;transform:scaleX(1.130);">0,32</span>
<span class="t" style="left:1099.7px;top:65.31px;font-size:16.8px;line-height:16.8px;color:#fafafa;transform:scaleX(1.130);">0,39</span>
<span class="t" style="left:1169.2px;top:65.31px;font-size:16.8px;line-height:16.8px;color:#fafafa;transform:scaleX(1.130);">0,19</span>
<span class="t" style="left:1287px;top:65.31px;font-size:16.8px;line-height:16.8px;color:#fafafa;transform:scaleX(1.130);">0,28</span>
<div style="left:0px;top:86.06px;width:1368px;height:28.33px;background:#404040"></div>
<span class="t" style="left:5.2px;top:93.44px;font-size:16.8px;line-height:16.8px;color:#fff;transform:scaleX(0.982);">Y</span>
<span class="t" style="left:141.8px;top:93.44px;font-size:16.8px;line-height:16.8px;color:#fff;transform:scaleX(1.130);">237,12</span>
<span class="t" style="left:212.2px;top:93.44px;font-size:16.8px;line-height:16.8px;color:#fff;transform:scaleX(1.130);">184,93</span>
<span class="t" style="left:285px;top:93.44px;font-size:16.8px;line-height:16.8px;color:#fff;transform:scaleX(1.130);">150,38</span>
<span class="t" style="left:358px;top:93.44px;font-size:16.8px;line-height:16.8px;color:#fff;transform:scaleX(1.130);">117,42</span>
<span class="t" style="left:431px;top:93.44px;font-size:16.8px;line-height:16.8px;color:#fff;transform:scaleX(1.130);">82,15</span>
<span class="t" style="left:503.8px;top:93.44px;font-size:16.8px;line-height:16.8px;color:#fff;transform:scaleX(1.130);">0,46</span>
<span class="t" style="left:557.3px;top:93.44px;font-size:16.8px;line-height:16.8px;color:#fff;transform:scaleX(1.130);">22,94</span>
<span class="t" style="left:644.2px;top:93.44px;font-size:16.8px;line-height:16.8px;color:#fff;transform:scaleX(1.130);">81,25</span>
<span class="t" style="left:732px;top:93.44px;font-size:16.8px;line-height:16.8px;color:#fff;transform:scaleX(1.130);">49,93</span>
<span class="t" style="left:810.4px;top:93.44px;font-size:16.8px;line-height:16.8px;color:#fff;transform:scaleX(1.130);">28,37</span>
<span class="t" style="left:878.9px;top:93.44px;font-size:16.8px;line-height:16.8px;color:#fff;transform:scaleX(1.130);">63,28</span>
<span class="t" style="left:985.5px;top:93.44px;font-size:16.8px;line-height:16.8px;color:#fff;transform:scaleX(1.130);">96,77</span>
<span class="t" style="left:1099.7px;top:93.44px;font-size:16.8px;line-height:16.8px;color:#fff;transform:scaleX(1.130);">60,88</span>
<span class="t" style="left:1169.2px;top:93.44px;font-size:16.8px;line-height:16.8px;color:#fff;transform:scaleX(1.130);">36,76</span>
<span class="t" style="left:1287px;top:93.44px;font-size:16.8px;line-height:16.8px;color:#fff;transform:scaleX(1.130);">45,34</span>
<div style="left:0px;top:114.19px;width:1368px;height:28.33px;background:#828282"></div>
<span class="t" style="left:5.2px;top:121.57px;font-size:16.8px;line-height:16.8px;color:#fafafa;transform:scaleX(1.116);">Target x:CIE31</span>
<span class="t" style="left:141.8px;top:121.57px;font-size:16.8px;line-height:16.8px;color:#fafafa;transform:scaleX(1.130);">0,31</span>
<span class="t" style="left:212.2px;top:121.57px;font-size:16.8px;line-height:16.8px;color:#fafafa;transform:scaleX(1.130);">0,31</span>
<span class="t" style="left:285px;top:121.57px;font-size:16.8px;line-height:16.8px;color:#fafafa;transform:scaleX(1.130);">0,31</span>
<span class="t" style="left:358px;top:121.57px;font-size:16.8px;line-height:16.8px;color:#fafafa;transform:scaleX(1.130);">0,31</span>
<span class="t" style="left:431px;top:121.57px;font-size:16.8px;line-height:16.8px;color:#fafafa;transform:scaleX(1.130);">0,31</span>
<span class="t" style="left:503.8px;top:121.57px;font-size:16.8px;line-height:16.8px;color:#fafafa;transform:scaleX(1.130);">0,31</span>
<span class="t" style="left:557.3px;top:121.57px;font-size:16.8px;line-height:16.8px;color:#fafafa;transform:scaleX(1.130);">0,40</span>
<span class="t" style="left:644.2px;top:121.57px;font-size:16.8px;line-height:16.8px;color:#fafafa;transform:scaleX(1.130);">0,38</span>
<span class="t" style="left:732px;top:121.57px;font-size:16.8px;line-height:16.8px;color:#fafafa;transform:scaleX(1.130);">0,25</span>
<span class="t" style="left:810.4px;top:121.57px;font-size:16.8px;line-height:16.8px;color:#fafafa;transform:scaleX(1.130);">0,34</span>
<span class="t" style="left:878.9px;top:121.57px;font-size:16.8px;line-height:16.8px;color:#fafafa;transform:scaleX(1.130);">0,27</span>
<span class="t" style="left:985.5px;top:121.57px;font-size:16.8px;line-height:16.8px;color:#fafafa;transform:scaleX(1.130);">0,26</span>
<span class="t" style="left:1099.7px;top:121.57px;font-size:16.8px;line-height:16.8px;color:#fafafa;transform:scaleX(1.130);">0,51</span>
<span class="t" style="left:1169.2px;top:121.57px;font-size:16.8px;line-height:16.8px;color:#fafafa;transform:scaleX(1.130);">0,22</span>
<span class="t" style="left:1287px;top:121.57px;font-size:16.8px;line-height:16.8px;color:#fafafa;transform:scaleX(1.130);">0,46</span>
<div style="left:0px;top:142.32px;width:1368px;height:28.33px;background:#404040"></div>
<span class="t" style="left:5.2px;top:149.7px;font-size:16.8px;line-height:16.8px;color:#fff;transform:scaleX(1.116);">Target y:CIE31</span>
<span class="t" style="left:141.8px;top:149.7px;font-size:16.8px;line-height:16.8px;color:#fff;transform:scaleX(1.130);">0,33</span>
<span class="t" style="left:212.2px;top:149.7px;font-size:16.8px;line-height:16.8px;color:#fff;transform:scaleX(1.130);">0,33</span>
<span class="t" style="left:285px;top:149.7px;font-size:16.8px;line-height:16.8px;color:#fff;transform:scaleX(1.130);">0,33</span>
<span class="t" style="left:358px;top:149.7px;font-size:16.8px;line-height:16.8px;color:#fff;transform:scaleX(1.130);">0,33</span>
<span class="t" style="left:431px;top:149.7px;font-size:16.8px;line-height:16.8px;color:#fff;transform:scaleX(1.130);">0,33</span>
<span class="t" style="left:503.8px;top:149.7px;font-size:16.8px;line-height:16.8px;color:#fff;transform:scaleX(1.130);">0,33</span>
<span class="t" style="left:557.3px;top:149.7px;font-size:16.8px;line-height:16.8px;color:#fff;transform:scaleX(1.130);">0,36</span>
<span class="t" style="left:644.2px;top:149.7px;font-size:16.8px;line-height:16.8px;color:#fff;transform:scaleX(1.130);">0,36</span>
<span class="t" style="left:732px;top:149.7px;font-size:16.8px;line-height:16.8px;color:#fff;transform:scaleX(1.130);">0,27</span>
<span class="t" style="left:810.4px;top:149.7px;font-size:16.8px;line-height:16.8px;color:#fff;transform:scaleX(1.130);">0,43</span>
<span class="t" style="left:878.9px;top:149.7px;font-size:16.8px;line-height:16.8px;color:#fff;transform:scaleX(1.130);">0,25</span>
<span class="t" style="left:985.5px;top:149.7px;font-size:16.8px;line-height:16.8px;color:#fff;transform:scaleX(1.130);">0,36</span>
<span class="t" style="left:1099.7px;top:149.7px;font-size:16.8px;line-height:16.8px;color:#fff;transform:scaleX(1.130);">0,41</span>
<span class="t" style="left:1169.2px;top:149.7px;font-size:16.8px;line-height:16.8px;color:#fff;transform:scaleX(1.130);">0,19</span>
<span class="t" style="left:1287px;top:149.7px;font-size:16.8px;line-height:16.8px;color:#fff;transform:scaleX(1.130);">0,31</span>
<div style="left:0px;top:170.45px;width:1368px;height:28.33px;background:#828282"></div>
<span class="t" style="left:5.2px;top:177.83px;font-size:16.8px;line-height:16.8px;color:#fafafa;transform:scaleX(1.140);">Target Y</span>
<span class="t" style="left:141.8px;top:177.83px;font-size:16.8px;line-height:16.8px;color:#fafafa;transform:scaleX(1.130);">237,12</span>
<span class="t" style="left:212.2px;top:177.83px;font-size:16.8px;line-height:16.8px;color:#fafafa;transform:scaleX(1.130);">187,63</span>
<span class="t" style="left:285px;top:177.83px;font-size:16.8px;line-height:16.8px;color:#fafafa;transform:scaleX(1.130);">151,18</span>
<span class="t" style="left:358px;top:177.83px;font-size:16.8px;line-height:16.8px;color:#fafafa;transform:scaleX(1.130);">116,43</span>
<span class="t" style="left:431px;top:177.83px;font-size:16.8px;line-height:16.8px;color:#fafafa;transform:scaleX(1.130);">81,07</span>
<span class="t" style="left:503.8px;top:177.83px;font-size:16.8px;line-height:16.8px;color:#fafafa;transform:scaleX(1.130);">0,00</span>
<span class="t" style="left:557.3px;top:177.83px;font-size:16.8px;line-height:16.8px;color:#fafafa;transform:scaleX(1.130);">23,89</span>
<span class="t" style="left:644.2px;top:177.83px;font-size:16.8px;line-height:16.8px;color:#fafafa;transform:scaleX(1.130);">82,74</span>
<span class="t" style="left:732px;top:177.83px;font-size:16.8px;line-height:16.8px;color:#fafafa;transform:scaleX(1.130);">44,34</span>
<span class="t" style="left:810.4px;top:177.83px;font-size:16.8px;line-height:16.8px;color:#fafafa;transform:scaleX(1.130);">30,90</span>
<span class="t" style="left:878.9px;top:177.83px;font-size:16.8px;line-height:16.8px;color:#fafafa;transform:scaleX(1.130);">55,29</span>
<span class="t" style="left:985.5px;top:177.83px;font-size:16.8px;line-height:16.8px;color:#fafafa;transform:scaleX(1.130);">99,29</span>
<span class="t" style="left:1099.7px;top:177.83px;font-size:16.8px;line-height:16.8px;color:#fafafa;transform:scaleX(1.130);">67,22</span>
<span class="t" style="left:1169.2px;top:177.83px;font-size:16.8px;line-height:16.8px;color:#fafafa;transform:scaleX(1.130);">27,87</span>
<span class="t" style="left:1287px;top:177.83px;font-size:16.8px;line-height:16.8px;color:#fafafa;transform:scaleX(1.130);">44,28</span>
<div style="left:0px;top:198.58px;width:1368px;height:28.33px;background:#404040"></div>
<span class="t" style="left:5.2px;top:205.96px;font-size:16.8px;line-height:16.8px;color:#fff;transform:scaleX(1.117);">ΔE 2000</span>
<span class="t" style="left:141.8px;top:205.96px;font-size:16.8px;line-height:16.8px;color:#fff;transform:scaleX(1.130);">10,58</span>
<span class="t" style="left:212.2px;top:205.96px;font-size:16.8px;line-height:16.8px;color:#fff;transform:scaleX(1.130);">8,67</span>
<span class="t" style="left:285px;top:205.96px;font-size:16.8px;line-height:16.8px;color:#fff;transform:scaleX(1.130);">9,90</span>
<span class="t" style="left:358px;top:205.96px;font-size:16.8px;line-height:16.8px;color:#fff;transform:scaleX(1.130);">10,99</span>
<span class="t" style="left:431px;top:205.96px;font-size:16.8px;line-height:16.8px;color:#fff;transform:scaleX(1.130);">11,63</span>
<span class="t" style="left:503.8px;top:205.96px;font-size:16.8px;line-height:16.8px;color:#fff;transform:scaleX(1.130);">2,14</span>
<span class="t" style="left:557.3px;top:205.96px;font-size:16.8px;line-height:16.8px;color:#fff;transform:scaleX(1.130);">10,77</span>
<span class="t" style="left:644.2px;top:205.96px;font-size:16.8px;line-height:16.8px;color:#fff;transform:scaleX(1.130);">13,87</span>
<span class="t" style="left:732px;top:205.96px;font-size:16.8px;line-height:16.8px;color:#fff;transform:scaleX(1.130);">5,50</span>
<span class="t" style="left:810.4px;top:205.96px;font-size:16.8px;line-height:16.8px;color:#fff;transform:scaleX(1.130);">8,77</span>
<span class="t" style="left:878.9px;top:205.96px;font-size:16.8px;line-height:16.8px;color:#fff;transform:scaleX(1.130);">9,14</span>
<span class="t" style="left:985.5px;top:205.96px;font-size:16.8px;line-height:16.8px;color:#fff;transform:scaleX(1.130);">11,40</span>
<span class="t" style="left:1099.7px;top:205.96px;font-size:16.8px;line-height:16.8px;color:#fff;transform:scaleX(1.130);">6,14</span>
<span class="t" style="left:1169.2px;top:205.96px;font-size:16.8px;line-height:16.8px;color:#fff;transform:scaleX(1.130);">8,86</span>
<span class="t" style="left:1287px;top:205.96px;font-size:16.8px;line-height:16.8px;color:#fff;transform:scaleX(1.130);">11,46</span>
</div>
<div style="left:532px;top:757.8px;width:17px;height:28.33px;background:linear-gradient(#262626,#3a3a3a)"></div>
<div style="left:532px;top:785.93px;width:17px;height:28.33px;background:linear-gradient(#262626,#3a3a3a)"></div>
<div style="left:532px;top:814.06px;width:17px;height:28.33px;background:linear-gradient(#262626,#3a3a3a)"></div>
<div style="left:532px;top:842.19px;width:17px;height:28.33px;background:linear-gradient(#262626,#3a3a3a)"></div>
<div style="left:532px;top:870.32px;width:17px;height:28.33px;background:linear-gradient(#262626,#3a3a3a)"></div>
<div style="left:532px;top:898.45px;width:17px;height:28.33px;background:linear-gradient(#262626,#3a3a3a)"></div>
<div style="left:532px;top:926.58px;width:17px;height:28.33px;background:linear-gradient(#262626,#3a3a3a)"></div>
<div style="left:549px;top:955px;width:1368px;height:17.5px;background:#646464"></div>
<div style="left:550px;top:956px;width:16px;height:15.5px;background:#8e8e8e;border-radius:3px"></div>
<div style="left:1899px;top:956px;width:17px;height:15.5px;background:#8e8e8e;border-radius:3px"></div>
<svg style="left:554px;top:959px" width="8" height="10"><path d="M8 0v10l-8-5z" fill="#3c3c3c"/></svg>
<svg style="left:1904px;top:959px" width="8" height="10"><path d="M0 0v10l8-5z" fill="#3c3c3c"/></svg>
<div style="left:569px;top:956px;width:865px;height:15.5px;background:#4a4a4a;border-radius:7px"></div>
<div style="left:201px;top:978px;width:56.2px;height:61px;background:linear-gradient(#a4a4a4 0%,#9a9a9a 45%,#7c7c7c 75%,#5c5c5c 100%);border-radius:6px 6px 5px 5px;box-shadow:inset 0 1px 0 #b4b4b4,inset 0 0 0 1px rgba(70,70,70,.35)"></div>
<div style="left:206px;top:983px;width:46.3px;height:24px;background:#ffffff;border-radius:4px;box-shadow:inset 1px 1px 1px rgba(0,0,0,.3),0 0 0 1px rgba(90,90,90,.3)"></div>
<span class="t" style="left:215.33px;top:1013.29px;font-size:11px;line-height:11px;color:#262626;font-weight:bold;transform:scaleX(0.920);text-shadow:0 1px 0 rgba(200,200,200,.3);">White</span>
<div style="left:259.13px;top:978px;width:56.2px;height:61px;background:linear-gradient(#a4a4a4 0%,#9a9a9a 45%,#7c7c7c 75%,#5c5c5c 100%);border-radius:6px 6px 5px 5px;box-shadow:inset 0 1px 0 #b4b4b4,inset 0 0 0 1px rgba(70,70,70,.35)"></div>
<div style="left:264.13px;top:983px;width:46.3px;height:24px;background:#e6e6e6;border-radius:4px;box-shadow:inset 1px 1px 1px rgba(0,0,0,.3),0 0 0 1px rgba(90,90,90,.3)"></div>
<span class="t" style="left:268.66px;top:1013.29px;font-size:11px;line-height:11px;color:#262626;font-weight:bold;transform:scaleX(0.920);text-shadow:0 1px 0 rgba(200,200,200,.3);">Gray 80</span>
<div style="left:317.25px;top:978px;width:56.2px;height:61px;background:linear-gradient(#a4a4a4 0%,#9a9a9a 45%,#7c7c7c 75%,#5c5c5c 100%);border-radius:6px 6px 5px 5px;box-shadow:inset 0 1px 0 #b4b4b4,inset 0 0 0 1px rgba(70,70,70,.35)"></div>
<div style="left:322.25px;top:983px;width:46.3px;height:24px;background:#d0d0d0;border-radius:4px;box-shadow:inset 1px 1px 1px rgba(0,0,0,.3),0 0 0 1px rgba(90,90,90,.3)"></div>
<span class="t" style="left:326.78px;top:1013.29px;font-size:11px;line-height:11px;color:#262626;font-weight:bold;transform:scaleX(0.920);text-shadow:0 1px 0 rgba(200,200,200,.3);">Gray 65</span>
<div style="left:375.38px;top:978px;width:56.2px;height:61px;background:linear-gradient(#a4a4a4 0%,#9a9a9a 45%,#7c7c7c 75%,#5c5c5c 100%);border-radius:6px 6px 5px 5px;box-shadow:inset 0 1px 0 #b4b4b4,inset 0 0 0 1px rgba(70,70,70,.35)"></div>
<div style="left:380.38px;top:983px;width:46.3px;height:24px;background:#b9b9b9;border-radius:4px;box-shadow:inset 1px 1px 1px rgba(0,0,0,.3),0 0 0 1px rgba(90,90,90,.3)"></div>
<span class="t" style="left:384.91px;top:1013.29px;font-size:11px;line-height:11px;color:#262626;font-weight:bold;transform:scaleX(0.920);text-shadow:0 1px 0 rgba(200,200,200,.3);">Gray 50</span>
<div style="left:433.5px;top:978px;width:56.2px;height:61px;background:linear-gradient(#a4a4a4 0%,#9a9a9a 45%,#7c7c7c 75%,#5c5c5c 100%);border-radius:6px 6px 5px 5px;box-shadow:inset 0 1px 0 #b4b4b4,inset 0 0 0 1px rgba(70,70,70,.35)"></div>
<div style="left:438.5px;top:983px;width:46.3px;height:24px;background:#a0a0a0;border-radius:4px;box-shadow:inset 1px 1px 1px rgba(0,0,0,.3),0 0 0 1px rgba(90,90,90,.3)"></div>
<span class="t" style="left:443.04px;top:1013.29px;font-size:11px;line-height:11px;color:#262626;font-weight:bold;transform:scaleX(0.920);text-shadow:0 1px 0 rgba(200,200,200,.3);">Gray 35</span>
<div style="left:491.63px;top:978px;width:56.2px;height:61px;background:linear-gradient(#a4a4a4 0%,#9a9a9a 45%,#7c7c7c 75%,#5c5c5c 100%);border-radius:6px 6px 5px 5px;box-shadow:inset 0 1px 0 #b4b4b4,inset 0 0 0 1px rgba(70,70,70,.35)"></div>
<div style="left:496.63px;top:983px;width:46.3px;height:24px;background:#000000;border-radius:4px;box-shadow:inset 1px 1px 1px rgba(0,0,0,.3),0 0 0 1px rgba(90,90,90,.3)"></div>
<span class="t" style="left:506.23px;top:1013.29px;font-size:11px;line-height:11px;color:#262626;font-weight:bold;transform:scaleX(0.920);text-shadow:0 1px 0 rgba(200,200,200,.3);">Black</span>
<div style="left:549.76px;top:978px;width:56.2px;height:61px;background:linear-gradient(#a4a4a4 0%,#9a9a9a 45%,#7c7c7c 75%,#5c5c5c 100%);border-radius:6px 6px 5px 5px;box-shadow:inset 0 1px 0 #b4b4b4,inset 0 0 0 1px rgba(70,70,70,.35)"></div>
<div style="left:554.76px;top:983px;width:46.3px;height:24px;background:#735244;border-radius:4px;box-shadow:inset 1px 1px 1px rgba(0,0,0,.3),0 0 0 1px rgba(90,90,90,.3)"></div>
<span class="t" style="left:554.51px;top:1013.29px;font-size:11px;line-height:11px;color:#262626;font-weight:bold;transform:scaleX(0.920);text-shadow:0 1px 0 rgba(200,200,200,.3);">Dark Skin</span>
<div style="left:607.88px;top:978px;width:56.2px;height:61px;background:linear-gradient(#a4a4a4 0%,#9a9a9a 45%,#7c7c7c 75%,#5c5c5c 100%);border-radius:6px 6px 5px 5px;box-shadow:inset 0 1px 0 #b4b4b4,inset 0 0 0 1px rgba(70,70,70,.35)"></div>
<div style="left:612.88px;top:983px;width:46.3px;height:24px;background:#c29682;border-radius:4px;box-shadow:inset 1px 1px 1px rgba(0,0,0,.3),0 0 0 1px rgba(90,90,90,.3)"></div>
<span class="t" style="left:611.53px;top:1013.29px;font-size:11px;line-height:11px;color:#262626;font-weight:bold;transform:scaleX(0.920);text-shadow:0 1px 0 rgba(200,200,200,.3);">Light Skin</span>
<div style="left:666.01px;top:978px;width:56.2px;height:61px;background:linear-gradient(#a4a4a4 0%,#9a9a9a 45%,#7c7c7c 75%,#5c5c5c 100%);border-radius:6px 6px 5px 5px;box-shadow:inset 0 1px 0 #b4b4b4,inset 0 0 0 1px rgba(70,70,70,.35)"></div>
<div style="left:671.01px;top:983px;width:46.3px;height:24px;background:#627a9d;border-radius:4px;box-shadow:inset 1px 1px 1px rgba(0,0,0,.3),0 0 0 1px rgba(90,90,90,.3)"></div>
<span class="t" style="left:672.73px;top:1013.29px;font-size:11px;line-height:11px;color:#262626;font-weight:bold;transform:scaleX(0.920);text-shadow:0 1px 0 rgba(200,200,200,.3);">Blue Sky</span>
<div style="left:724.13px;top:978px;width:56.2px;height:61px;background:linear-gradient(#a4a4a4 0%,#9a9a9a 45%,#7c7c7c 75%,#5c5c5c 100%);border-radius:6px 6px 5px 5px;box-shadow:inset 0 1px 0 #b4b4b4,inset 0 0 0 1px rgba(70,70,70,.35)"></div>
<div style="left:729.13px;top:983px;width:46.3px;height:24px;background:#576c43;border-radius:4px;box-shadow:inset 1px 1px 1px rgba(0,0,0,.3),0 0 0 1px rgba(90,90,90,.3)"></div>
<span class="t" style="left:734.52px;top:1013.29px;font-size:11px;line-height:11px;color:#262626;font-weight:bold;transform:scaleX(0.920);text-shadow:0 1px 0 rgba(200,200,200,.3);">Foliage</span>
<div style="left:782.26px;top:978px;width:56.2px;height:61px;background:linear-gradient(#a4a4a4 0%,#9a9a9a 45%,#7c7c7c 75%,#5c5c5c 100%);border-radius:6px 6px 5px 5px;box-shadow:inset 0 1px 0 #b4b4b4,inset 0 0 0 1px rgba(70,70,70,.35)"></div>
<div style="left:787.26px;top:983px;width:46.3px;height:24px;background:#8580b1;border-radius:4px;box-shadow:inset 1px 1px 1px rgba(0,0,0,.3),0 0 0 1px rgba(90,90,90,.3)"></div>
<span class="t" style="left:794.05px;top:1013.29px;font-size:11px;line-height:11px;color:#262626;font-weight:bold;transform:scaleX(0.920);text-shadow:0 1px 0 rgba(200,200,200,.3);">Blue</span>
<span class="t" style="left:794.05px;top:1025.49px;font-size:11px;line-height:11px;color:#262626;font-weight:bold;transform:scaleX(0.920);text-shadow:0 1px 0 rgba(200,200,200,.3);">Flower</span>
<div style="left:840.39px;top:978px;width:56.2px;height:61px;background:linear-gradient(#a4a4a4 0%,#9a9a9a 45%,#7c7c7c 75%,#5c5c5c 100%);border-radius:6px 6px 5px 5px;box-shadow:inset 0 1px 0 #b4b4b4,inset 0 0 0 1px rgba(70,70,70,.35)"></div>
<div style="left:845.39px;top:983px;width:46.3px;height:24px;background:#67bdaa;border-radius:4px;box-shadow:inset 1px 1px 1px rgba(0,0,0,.3),0 0 0 1px rgba(90,90,90,.3)"></div>
<span class="t" style="left:853.03px;top:1013.29px;font-size:11px;line-height:11px;color:#262626;font-weight:bold;transform:scaleX(0.920);text-shadow:0 1px 0 rgba(200,200,200,.3);">Bluish</span>
<span class="t" style="left:853.03px;top:1025.49px;font-size:11px;line-height:11px;color:#262626;font-weight:bold;transform:scaleX(0.920);text-shadow:0 1px 0 rgba(200,200,200,.3);">Green</span>
<div style="left:898.51px;top:978px;width:56.2px;height:61px;background:linear-gradient(#a4a4a4 0%,#9a9a9a 45%,#7c7c7c 75%,#5c5c5c 100%);border-radius:6px 6px 5px 5px;box-shadow:inset 0 1px 0 #b4b4b4,inset 0 0 0 1px rgba(70,70,70,.35)"></div>
<div style="left:903.51px;top:983px;width:46.3px;height:24px;background:#d67e2c;border-radius:4px;box-shadow:inset 1px 1px 1px rgba(0,0,0,.3),0 0 0 1px rgba(90,90,90,.3)"></div>
<span class="t" style="left:908.9px;top:1013.29px;font-size:11px;line-height:11px;color:#262626;font-weight:bold;transform:scaleX(0.920);text-shadow:0 1px 0 rgba(200,200,200,.3);">Orange</span>
<div style="left:956.64px;top:978px;width:56.2px;height:61px;background:linear-gradient(#a4a4a4 0%,#9a9a9a 45%,#7c7c7c 75%,#5c5c5c 100%);border-radius:6px 6px 5px 5px;box-shadow:inset 0 1px 0 #b4b4b4,inset 0 0 0 1px rgba(70,70,70,.35)"></div>
<div style="left:961.64px;top:983px;width:46.3px;height:24px;background:#4a5aa5;border-radius:4px;box-shadow:inset 1px 1px 1px rgba(0,0,0,.3),0 0 0 1px rgba(90,90,90,.3)"></div>
<span class="t" style="left:964.5px;top:1013.29px;font-size:11px;line-height:11px;color:#262626;font-weight:bold;transform:scaleX(0.920);text-shadow:0 1px 0 rgba(200,200,200,.3);">Purplish</span>
<span class="t" style="left:964.5px;top:1025.49px;font-size:11px;line-height:11px;color:#262626;font-weight:bold;transform:scaleX(0.920);text-shadow:0 1px 0 rgba(200,200,200,.3);">Blue</span>
<div style="left:1014.77px;top:978px;width:56.2px;height:61px;background:linear-gradient(#a4a4a4 0%,#9a9a9a 45%,#7c7c7c 75%,#5c5c5c 100%);border-radius:6px 6px 5px 5px;box-shadow:inset 0 1px 0 #b4b4b4,inset 0 0 0 1px rgba(70,70,70,.35)"></div>
<div style="left:1019.77px;top:983px;width:46.3px;height:24px;background:#c15a63;border-radius:4px;box-shadow:inset 1px 1px 1px rgba(0,0,0,.3),0 0 0 1px rgba(90,90,90,.3)"></div>
<span class="t" style="left:1020.37px;top:1013.29px;font-size:11px;line-height:11px;color:#262626;font-weight:bold;transform:scaleX(0.920);text-shadow:0 1px 0 rgba(200,200,200,.3);">Moderate</span>
<span class="t" style="left:1020.37px;top:1025.49px;font-size:11px;line-height:11px;color:#262626;font-weight:bold;transform:scaleX(0.920);text-shadow:0 1px 0 rgba(200,200,200,.3);">Red</span>
<div style="left:1072.89px;top:978px;width:56.2px;height:61px;background:linear-gradient(#a4a4a4 0%,#9a9a9a 45%,#7c7c7c 75%,#5c5c5c 100%);border-radius:6px 6px 5px 5px;box-shadow:inset 0 1px 0 #b4b4b4,inset 0 0 0 1px rgba(70,70,70,.35)"></div>
<div style="left:1077.89px;top:983px;width:46.3px;height:24px;background:#5e3c6c;border-radius:4px;box-shadow:inset 1px 1px 1px rgba(0,0,0,.3),0 0 0 1px rgba(90,90,90,.3)"></div>
<span class="t" style="left:1085.25px;top:1013.29px;font-size:11px;line-height:11px;color:#262626;font-weight:bold;transform:scaleX(0.920);text-shadow:0 1px 0 rgba(200,200,200,.3);">Purple</span>
<div style="left:1131.02px;top:978px;width:56.2px;height:61px;background:linear-gradient(#a4a4a4 0%,#9a9a9a 45%,#7c7c7c 75%,#5c5c5c 100%);border-radius:6px 6px 5px 5px;box-shadow:inset 0 1px 0 #b4b4b4,inset 0 0 0 1px rgba(70,70,70,.35)"></div>
<div style="left:1136.02px;top:983px;width:46.3px;height:24px;background:#9dbc40;border-radius:4px;box-shadow:inset 1px 1px 1px rgba(0,0,0,.3),0 0 0 1px rgba(90,90,90,.3)"></div>
<span class="t" style="left:1143.37px;top:1013.29px;font-size:11px;line-height:11px;color:#262626;font-weight:bold;transform:scaleX(0.920);text-shadow:0 1px 0 rgba(200,200,200,.3);">Yellow</span>
<span class="t" style="left:1143.37px;top:1025.49px;font-size:11px;line-height:11px;color:#262626;font-weight:bold;transform:scaleX(0.920);text-shadow:0 1px 0 rgba(200,200,200,.3);">Green</span>
<div style="left:1189.14px;top:978px;width:56.2px;height:61px;background:linear-gradient(#a4a4a4 0%,#9a9a9a 45%,#7c7c7c 75%,#5c5c5c 100%);border-radius:6px 6px 5px 5px;box-shadow:inset 0 1px 0 #b4b4b4,inset 0 0 0 1px rgba(70,70,70,.35)"></div>
<div style="left:1194.14px;top:983px;width:46.3px;height:24px;background:#e0a32e;border-radius:4px;box-shadow:inset 1px 1px 1px rgba(0,0,0,.3),0 0 0 1px rgba(90,90,90,.3)"></div>
<span class="t" style="left:1199.53px;top:1013.29px;font-size:11px;line-height:11px;color:#262626;font-weight:bold;transform:scaleX(0.920);text-shadow:0 1px 0 rgba(200,200,200,.3);">Orange</span>
<span class="t" style="left:1199.53px;top:1025.49px;font-size:11px;line-height:11px;color:#262626;font-weight:bold;transform:scaleX(0.920);text-shadow:0 1px 0 rgba(200,200,200,.3);">Yellow</span>
<div style="left:1247.27px;top:978px;width:56.2px;height:61px;background:linear-gradient(#a4a4a4 0%,#9a9a9a 45%,#7c7c7c 75%,#5c5c5c 100%);border-radius:6px 6px 5px 5px;box-shadow:inset 0 1px 0 #b4b4b4,inset 0 0 0 1px rgba(70,70,70,.35)"></div>
<div style="left:1252.27px;top:983px;width:46.3px;height:24px;background:#383d96;border-radius:4px;box-shadow:inset 1px 1px 1px rgba(0,0,0,.3),0 0 0 1px rgba(90,90,90,.3)"></div>
<span class="t" style="left:1264.4px;top:1013.29px;font-size:11px;line-height:11px;color:#262626;font-weight:bold;transform:scaleX(0.920);text-shadow:0 1px 0 rgba(200,200,200,.3);">Blue</span>
<div style="left:1305.4px;top:978px;width:56.2px;height:61px;background:linear-gradient(#a4a4a4 0%,#9a9a9a 45%,#7c7c7c 75%,#5c5c5c 100%);border-radius:6px 6px 5px 5px;box-shadow:inset 0 1px 0 #b4b4b4,inset 0 0 0 1px rgba(70,70,70,.35)"></div>
<div style="left:1310.4px;top:983px;width:46.3px;height:24px;background:#469449;border-radius:4px;box-shadow:inset 1px 1px 1px rgba(0,0,0,.3),0 0 0 1px rgba(90,90,90,.3)"></div>
<span class="t" style="left:1318.87px;top:1013.29px;font-size:11px;line-height:11px;color:#262626;font-weight:bold;transform:scaleX(0.920);text-shadow:0 1px 0 rgba(200,200,200,.3);">Green</span>
<div style="left:1363.52px;top:978px;width:56.2px;height:61px;background:linear-gradient(#a4a4a4 0%,#9a9a9a 45%,#7c7c7c 75%,#5c5c5c 100%);border-radius:6px 6px 5px 5px;box-shadow:inset 0 1px 0 #b4b4b4,inset 0 0 0 1px rgba(70,70,70,.35)"></div>
<div style="left:1368.52px;top:983px;width:46.3px;height:24px;background:#af363c;border-radius:4px;box-shadow:inset 1px 1px 1px rgba(0,0,0,.3),0 0 0 1px rgba(90,90,90,.3)"></div>
<span class="t" style="left:1382.06px;top:1013.29px;font-size:11px;line-height:11px;color:#262626;font-weight:bold;transform:scaleX(0.920);text-shadow:0 1px 0 rgba(200,200,200,.3);">Red</span>
<div style="left:1421.65px;top:978px;width:56.2px;height:61px;background:linear-gradient(#a4a4a4 0%,#9a9a9a 45%,#7c7c7c 75%,#5c5c5c 100%);border-radius:6px 6px 5px 5px;box-shadow:inset 0 1px 0 #b4b4b4,inset 0 0 0 1px rgba(70,70,70,.35)"></div>
<div style="left:1426.65px;top:983px;width:46.3px;height:24px;background:#e7c71f;border-radius:4px;box-shadow:inset 1px 1px 1px rgba(0,0,0,.3),0 0 0 1px rgba(90,90,90,.3)"></div>
<span class="t" style="left:1434px;top:1013.29px;font-size:11px;line-height:11px;color:#262626;font-weight:bold;transform:scaleX(0.920);text-shadow:0 1px 0 rgba(200,200,200,.3);">Yellow</span>
<div style="left:1479.77px;top:978px;width:56.2px;height:61px;background:linear-gradient(#a4a4a4 0%,#9a9a9a 45%,#7c7c7c 75%,#5c5c5c 100%);border-radius:6px 6px 5px 5px;box-shadow:inset 0 1px 0 #b4b4b4,inset 0 0 0 1px rgba(70,70,70,.35)"></div>
<div style="left:1484.77px;top:983px;width:46.3px;height:24px;background:#bb5695;border-radius:4px;box-shadow:inset 1px 1px 1px rgba(0,0,0,.3),0 0 0 1px rgba(90,90,90,.3)"></div>
<span class="t" style="left:1487.35px;top:1013.29px;font-size:11px;line-height:11px;color:#262626;font-weight:bold;transform:scaleX(0.920);text-shadow:0 1px 0 rgba(200,200,200,.3);">Magenta</span>
<div style="left:1537.9px;top:978px;width:56.2px;height:61px;background:linear-gradient(#262626,#2c2c2c 60%,#3a3a3a);border-radius:6px 6px 5px 5px;"></div>
<div style="left:1542.9px;top:983px;width:46.3px;height:24px;background:#0088a4;border-radius:4px;box-shadow:inset 1px 1px 1px rgba(0,0,0,.3),0 0 0 1px rgba(90,90,90,.3)"></div>
<span class="t" style="left:1553.63px;top:1013.29px;font-size:11px;line-height:11px;color:#fff;font-weight:bold;transform:scaleX(0.920);">Cyan</span>
<div style="left:1597px;top:978px;width:48px;height:18px;background:linear-gradient(#a8a8a8 0%,#9a9a9a 40%,#6a6a6a 100%);border-radius:6px 6px 0 0"></div>
<div style="left:1597px;top:997px;width:48px;height:42px;background:linear-gradient(#8e8e8e,#5c5c5c);border-radius:0 0 5px 5px"></div>
<div style="left:1613px;top:980px;width:15px;height:15px;border-radius:50%;background:linear-gradient(#bcbcbc,#747474)"></div>
<svg style="left:1616.5px;top:984px" width="8" height="5"><path d="M0 5h8l-4-5z" fill="#3a3a3a"/></svg>
<div style="left:1605px;top:1002px;width:31.5px;height:31.5px;background:linear-gradient(#b4b4b4 0%,#a6a6a6 49%,#8a8a8a 50%,#9a9a9a 100%);border:2.5px solid #2a2a2a;border-radius:5px"></div>
<div style="left:1614px;top:1011px;width:14px;height:14px;background:linear-gradient(#1e1e1e 0%,#1a1a1a 49%,#000 50%)"></div>
<div style="left:1646px;top:978px;width:45.5px;height:30px;background:linear-gradient(#a8a8a8 0%,#9a9a9a 40%,#6a6a6a 100%);border-radius:5px 0 0 0;"></div>
<div style="left:1658.75px;top:983px;width:20px;height:20px;border-radius:50%;background:linear-gradient(#c2c2c2,#6e6e6e)"></div>
<div style="left:1692.5px;top:978px;width:44px;height:30px;background:linear-gradient(#a8a8a8 0%,#9a9a9a 40%,#6a6a6a 100%);"></div>
<div style="left:1704.5px;top:983px;width:20px;height:20px;border-radius:50%;background:linear-gradient(#c2c2c2,#6e6e6e)"></div>
<div style="left:1737.5px;top:978px;width:44px;height:30px;background:linear-gradient(#a8a8a8 0%,#9a9a9a 40%,#6a6a6a 100%);"></div>
<div style="left:1749.5px;top:983px;width:20px;height:20px;border-radius:50%;background:linear-gradient(#c2c2c2,#6e6e6e)"></div>
<div style="left:1782.5px;top:978px;width:44px;height:30px;background:linear-gradient(#a8a8a8 0%,#9a9a9a 40%,#6a6a6a 100%);"></div>
<div style="left:1794.5px;top:983px;width:20px;height:20px;border-radius:50%;background:linear-gradient(#c2c2c2,#6e6e6e)"></div>
<div style="left:1827.5px;top:978px;width:44px;height:30px;background:linear-gradient(#3a3a3a 0%,#2e2e2e 50%,#262626 100%);"></div>
<div style="left:1839.5px;top:983px;width:20px;height:20px;border-radius:50%;background:radial-gradient(circle at 50% 30%,#2c2c2c,#222)"></div>
<div style="left:1872.5px;top:978px;width:44.5px;height:30px;background:linear-gradient(#3a3a3a 0%,#2e2e2e 50%,#262626 100%);border-radius:0 6px 0 0;"></div>
<div style="left:1884.75px;top:983px;width:20px;height:20px;border-radius:50%;background:radial-gradient(circle at 50% 30%,#2c2c2c,#222)"></div>
<svg style="left:1664.5px;top:988.5px" width="9" height="9"><rect width="9" height="9" fill="#2e2e2e"/></svg>
<svg style="left:1711.5px;top:988px" width="9" height="11"><path d="M0 0v11l9-5.500z" fill="#2e2e2e"/></svg>
<span class="t" style="left:1751.51px;top:987.44px;font-size:12px;line-height:12px;color:#2e2e2e;font-weight:bold;">[··]</span>
<span class="t" style="left:1798.23px;top:983.42px;font-size:19px;line-height:19px;color:#2e2e2e;font-weight:bold;">∞</span>
<svg style="left:1842px;top:985px" width="16" height="16" viewBox="-8 -8 16 16"><g fill="none" stroke="#1a1a1a" stroke-width="2.4"><path d="M-5.500 -1.500a5.500 5.500 0 0 1 9.800 -2"/><path d="M5.500 1.500a5.500 5.500 0 0 1 -9.800 2"/></g><path d="M6.500 -6v5h-5z M-6.500 6v-5h5z" fill="#1a1a1a"/></svg>
<div style="left:1646px;top:1009px;width:136px;height:30px;background:linear-gradient(#a8a8a8 0%,#9a9a9a 40%,#6a6a6a 100%);border-radius:5px 0 0 5px;box-shadow:inset 0 1px 0 #c0c0c0"></div>
<div style="left:1783px;top:1009px;width:135px;height:30px;background:linear-gradient(#a8a8a8 0%,#9a9a9a 40%,#6a6a6a 100%);border-radius:0 5px 5px 0;box-shadow:inset 0 1px 0 #c0c0c0"></div>
<div style="left:1667px;top:1014px;width:20px;height:20px;border-radius:50%;background:linear-gradient(#c2c2c2,#6e6e6e)"></div>
<div style="left:1880px;top:1014px;width:20px;height:20px;border-radius:50%;background:linear-gradient(#c2c2c2,#6e6e6e)"></div>
<span class="t" style="left:1671.16px;top:1013.22px;font-size:21px;line-height:21px;color:#2c2c2c;">«</span>
<span class="t" style="left:1884.16px;top:1013.22px;font-size:21px;line-height:21px;color:#2c2c2c;">»</span>
<span class="t" style="left:1703.6px;top:1013.52px;font-size:21px;line-height:21px;color:#333;font-weight:bold;transform:scaleX(0.996);text-shadow:0 1px 0 #aaa;">Back</span>
<span class="t" style="left:1810.5px;top:1013.52px;font-size:21px;line-height:21px;color:#333;font-weight:bold;transform:scaleX(1.131);text-shadow:0 1px 0 #aaa;">Next</span>
<div style="left:0px;top:1040px;width:1920px;height:40px;background:#090d15"></div>
<div style="left:0px;top:1040px;width:48px;height:40px;background:#040507"></div>
<svg style="left:16px;top:1052px" width="16" height="16" viewBox="0 0 16 16"><path d="M0 2.300l6.500-.9v6.100H0z M7.300 1.300L16 0v7.500H7.300z M0 8.300h6.500v6.100L0 13.500z M7.300 8.300H16V16l-8.700-1.300z" fill="#fff"/></svg>
<div style="left:48px;top:1040px;width:344px;height:40px;background:#333435"></div>
<span class="t" style="left:60px;top:1052.8px;font-size:15px;line-height:15px;color:#9a9a9a;transform:scaleX(0.977);">Web und Windows durchsuchen</span>
<svg style="left:405px;top:1051px" width="22" height="18" viewBox="0 0 22 18" fill="none" stroke="#fff" stroke-width="1.300"><rect x="5" y="2" width="12" height="14"/><path d="M3 4.500H1v9h2 M19 4.500h2v9h-2"/></svg>
<span class="t" style="left:457px;top:1040.03px;font-size:36px;line-height:36px;color:#1e7fe0;font-weight:bold;transform:scaleX(0.924);">e</span>
<div style="left:505px;top:1051px;width:21px;height:17px;background:#f7d36a;border-radius:1px"></div>
<div style="left:505px;top:1049px;width:9px;height:4px;background:#e9b94a;border-radius:1px 1px 0 0"></div>
<div style="left:510px;top:1060px;width:11px;height:8px;background:#3aa0e8"></div>
<div style="left:513px;top:1063px;width:5px;height:5px;background:#f7d36a"></div>
<svg style="left:552px;top:1047px" width="24" height="26" viewBox="0 0 24 26"><path d="M7 8V6a5 5 0 0 1 10 0v2" fill="none" stroke="#fff" stroke-width="1.300"/><path d="M1 8l20-1 2 18-20-1z" fill="#fff"/><path d="M7 12h4v4H7z M12.500 12h4v4h-4z M7 17.500h4v4H7z M12.500 17.500h4v4h-4z" fill="#090d15"/></svg>
<div style="left:602px;top:1052px;width:20px;height:18px;background:#7db0d8;border:1px solid #4c7fae"></div>
<div style="left:606px;top:1055px;width:13px;height:13px;border-radius:50%;background:#f08020;border:1px solid #fff"></div>
<svg style="left:610.500px;top:1058px" width="6" height="7"><path d="M0 0v7l6-3.500z" fill="#fff"/></svg>
<div style="left:638px;top:1040px;width:48px;height:40px;background:#3a3f46"></div>
<svg style="left:650px;top:1048px" width="24" height="24" viewBox="0 0 24 24"><path d="M4 2l17 14-18 6z" fill="#0c3a12"/><path d="M6 6l11 9-12 4z" fill="#1f8a2a"/><path d="M14 1l3 3 3-3 M14 9l3-3 3 3" stroke="#3a8be0" stroke-width="2" fill="none"/></svg>
<span class="t" style="left:660px;top:1058.69px;font-size:11px;line-height:11px;color:#7dff3a;font-weight:bold;">5</span>
<div style="left:700px;top:1052px;width:20px;height:15px;background:#3aa0e8;border:1px solid #8fd0ff"></div>
<div style="left:703px;top:1055px;width:6px;height:6px;border-radius:50%;background:#f0c040"></div>
<div style="left:711px;top:1055px;width:6px;height:2px;background:#fff"></div>
<div style="left:711px;top:1059px;width:6px;height:2px;background:#fff"></div>
<div style="left:703px;top:1063px;width:14px;height:2px;background:#cfe8ff"></div>
<div style="left:748px;top:1054px;width:19px;height:14px;border-radius:50%;background:#e8e2d6;transform:rotate(-15deg)"></div>
<div style="left:752px;top:1057px;width:3px;height:3px;border-radius:50%;background:#d03030"></div>
<div style="left:757px;top:1055.5px;width:3px;height:3px;border-radius:50%;background:#30a030"></div>
<div style="left:762px;top:1057px;width:3px;height:3px;border-radius:50%;background:#3050d0"></div>
<div style="left:753px;top:1062px;width:3px;height:3px;border-radius:50%;background:#222"></div>
<div style="left:763px;top:1047px;width:3px;height:20px;background:#c88a3a;transform:rotate(28deg);border-radius:1px"></div>
<div style="left:495px;top:1078px;width:40px;height:2px;background:#76b9ed"></div>
<div style="left:638px;top:1078px;width:48px;height:2px;background:#76b9ed"></div>
<div style="left:691px;top:1078px;width:40px;height:2px;background:#76b9ed"></div>
<div style="left:740px;top:1078px;width:40px;height:2px;background:#76b9ed"></div>
<svg style="left:1690px;top:1055px" width="12" height="8" fill="none" stroke="#fff" stroke-width="1.300"><path d="M1 7l5-5 5 5"/></svg>
<svg style="left:1711px;top:1052px" width="18" height="14" viewBox="0 0 18 14" fill="none" stroke="#fff" stroke-width="1.200"><rect x="3.500" y="4.500" width="12" height="7"/><path d="M16 7v2 M1 1l3 3 M1 4l3-3" /><rect x="5" y="6" width="8" height="4" fill="#fff" stroke="none"/></svg>
<svg style="left:1736px;top:1051px" width="16" height="16" viewBox="0 0 16 16" fill="none" stroke="#fff" stroke-width="1.200"><path d="M2 15a12 12 0 0 1 12-12" opacity=".9"/><path d="M5 15a9 9 0 0 1 9-9"/><path d="M8 15a6 6 0 0 1 6-6"/><path d="M11 15a3 3 0 0 1 3-3"/></svg>
<svg style="left:1759px;top:1052px" width="18" height="14" viewBox="0 0 18 14" fill="none" stroke="#fff" stroke-width="1.200"><path d="M1 5h3l4-3.500v11L4 9H1z"/><path d="M10.500 4.500a3.500 3.500 0 0 1 0 5 M12.500 2.500a6.500 6.500 0 0 1 0 9" /></svg>
<svg style="left:1784px;top:1051px" width="17" height="17" viewBox="0 0 17 17" fill="none" stroke="#fff" stroke-width="1.200"><path d="M1 1.500h15v10.500H10l-2.500 3v-3H1z"/><path d="M4 5h9 M4 8h9"/></svg>
<span class="t" style="left:1811.5px;top:1053.67px;font-size:12.2px;line-height:12.2px;color:#fff;transform:scaleX(0.835);">DEU</span>
<span class="t" style="left:1865.4px;top:1045.47px;font-size:12.2px;line-height:12.2px;color:#fff;transform:scaleX(0.839);">14:15</span>
<span class="t" style="left:1851.6px;top:1062.07px;font-size:12.2px;line-height:12.2px;color:#fff;transform:scaleX(0.855);">14.05.2016</span>
<div style="left:1914px;top:1040px;width:1px;height:40px;background:#5a5e66"></div>
</body></html>
